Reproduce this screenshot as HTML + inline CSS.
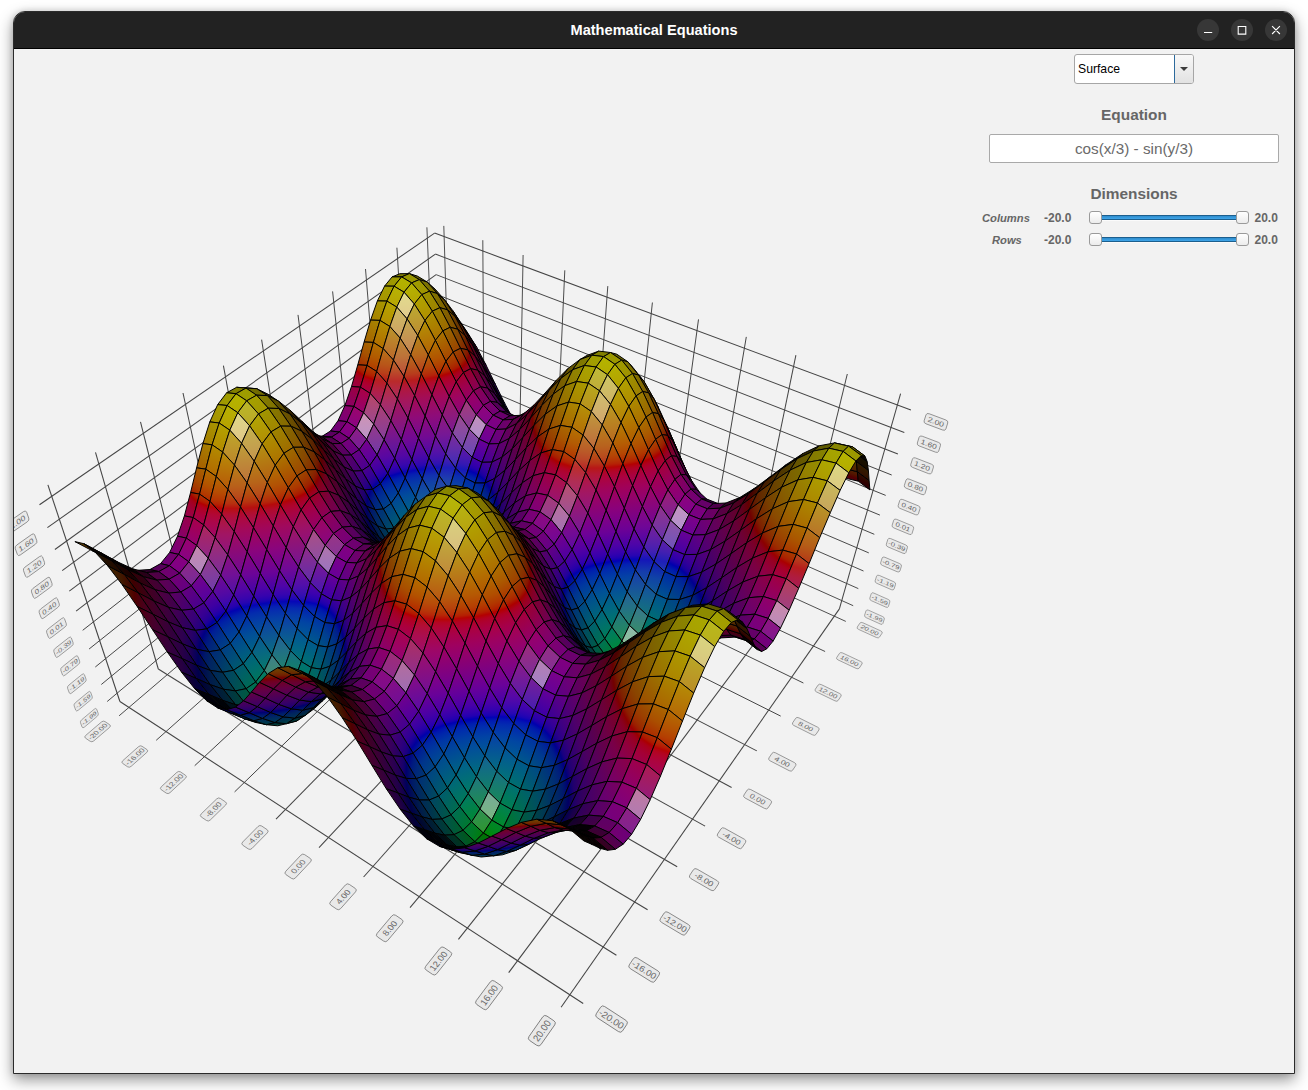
<!DOCTYPE html>
<html><head><meta charset="utf-8"><title>Mathematical Equations</title>
<style>
html,body{margin:0;padding:0;background:#fff;}
body{width:1308px;height:1090px;position:relative;overflow:hidden;font-family:"Liberation Sans","DejaVu Sans",sans-serif;}
#win{position:absolute;left:13px;top:11px;width:1282px;height:1063px;box-sizing:border-box;border:1px solid #2b2b2b;border-radius:12px 12px 0 0;background:#f2f2f2;box-shadow:0 6px 15px rgba(0,0,0,0.42),0 0 6px rgba(0,0,0,0.14);overflow:hidden;}
#tb{position:absolute;left:0;top:0;width:1280px;height:36px;background:#222222;border-bottom:1px solid #000;}
#title{position:absolute;left:0;top:0;width:1280px;height:36px;line-height:36px;text-align:center;color:#fff;font-weight:bold;font-size:14.6px;}
#plot{position:absolute;left:14px;top:49px;width:1280px;height:1024px;}
#plot text{fill:#666;stroke:none;}

.btn{position:absolute;top:7px;width:22px;height:22px;border-radius:11px;background:#373737;}
.hd{position:absolute;left:975px;width:290px;text-align:center;color:#666;font-weight:bold;font-size:15.4px;line-height:18px;}
#combo{position:absolute;left:1060px;top:42px;width:120px;height:30px;box-sizing:border-box;border:1px solid #a6a6a6;border-radius:3px;background:#fff;}
#combo .tx{position:absolute;left:3px;top:0;line-height:29px;font-size:12.2px;color:#000;}
#combo .sep{position:absolute;left:98.5px;top:0;width:1px;height:28px;background:#2d6a9c;}
#combo .ab{position:absolute;left:99.5px;top:0;width:18.5px;height:28px;background:linear-gradient(#f8f8f8,#e2e2e2);border-radius:0 2px 2px 0;}
#combo .ar{position:absolute;left:105px;top:12px;width:0;height:0;border-left:4px solid transparent;border-right:4px solid transparent;border-top:4.5px solid #3c3c3c;}
#eq{position:absolute;left:975px;top:122px;width:290px;height:29px;box-sizing:border-box;border:1px solid #a9a9a9;border-radius:2px;background:#fff;text-align:center;color:#6a6a6a;font-size:15.3px;line-height:27px;}
.lb{position:absolute;color:#666;font-weight:bold;font-size:12px;line-height:14px;white-space:nowrap;}
.it{font-style:italic;font-size:11.2px;}
.trk{position:absolute;left:1082px;width:148px;height:5px;box-sizing:border-box;border-top:1px solid #1c5f8e;border-bottom:1px solid #1c5f8e;background:linear-gradient(#2f8ccc,#3fa6ea);box-shadow:0 1px 0 #fbfbfb;}
.hnd{position:absolute;width:13px;height:13px;box-sizing:border-box;border:1px solid #9a9a9a;border-radius:3px;background:linear-gradient(#ffffff,#ececec);}
</style></head><body>
<div id="win"><div id="tb"></div><div id="title">Mathematical Equations</div>
<div class="btn" style="left:1183px"></div><div class="btn" style="left:1217px"></div><div class="btn" style="left:1251px"></div>
<svg style="position:absolute;left:1179px;top:-1px" width="100" height="37" viewBox="1193 11 100 37" fill="none" stroke="#fff" stroke-width="1.1"><path d="M1204 32.5h8.2M1238.2 26.5h7.6v7.6h-7.6zM1272.1 26.2l7.8 7.8M1279.9 26.2l-7.8 7.8"/></svg>
<div id="combo"><div class="tx">Surface</div><div class="ab"></div><div class="sep"></div><div class="ar"></div></div>
<div class="hd" style="top:94px">Equation</div>
<div id="eq">cos(x/3) - sin(y/3)</div>
<div class="hd" style="top:172.5px">Dimensions</div>
<div class="lb it" style="left:968px;top:199px">Columns</div>
<div class="lb" style="left:1030px;top:199px">-20.0</div>
<div class="trk" style="top:203px"></div><div class="hnd" style="left:1075px;top:199px"></div><div class="hnd" style="left:1222px;top:199px"></div>
<div class="lb" style="left:1240.5px;top:199px">20.0</div>
<div class="lb it" style="left:978px;top:221px">Rows</div>
<div class="lb" style="left:1030px;top:221px">-20.0</div>
<div class="trk" style="top:225px"></div><div class="hnd" style="left:1075px;top:221px"></div><div class="hnd" style="left:1222px;top:221px"></div>
<div class="lb" style="left:1240.5px;top:221px">20.0</div>
</div>
<svg id="plot" width="1280" height="1024" viewBox="14 49 1280 1024">
<g stroke="#444" fill="none" stroke-linecap="butt"><path d="M119.1 715.8L450.3 433.1" stroke-width="0.96"/><path d="M119.9 701.5L583.2 1003.5" stroke-width="1.10"/><path d="M156.2 740.3L484.2 448.4" stroke-width="0.97"/><path d="M158.3 669.0L616.4 955.3" stroke-width="1.09"/><path d="M194.7 765.7L519.2 464.2" stroke-width="0.99"/><path d="M194.9 638.1L647.6 909.8" stroke-width="1.08"/><path d="M234.6 791.9L555.2 480.5" stroke-width="1.00"/><path d="M229.8 608.6L677.2 866.8" stroke-width="1.06"/><path d="M276.0 819.2L592.2 497.2" stroke-width="1.01"/><path d="M263.2 580.4L705.1 826.1" stroke-width="1.04"/><path d="M319.0 847.6L630.3 514.5" stroke-width="1.03"/><path d="M295.0 553.4L731.6 787.5" stroke-width="1.03"/><path d="M363.6 877.0L669.6 532.2" stroke-width="1.04"/><path d="M325.6 527.6L756.8 750.9" stroke-width="1.01"/><path d="M410.0 907.6L710.1 550.5" stroke-width="1.05"/><path d="M354.8 502.9L780.7 716.1" stroke-width="0.99"/><path d="M458.4 939.4L751.9 569.4" stroke-width="1.06"/><path d="M382.8 479.2L803.4 683.0" stroke-width="0.98"/><path d="M508.7 972.6L795.0 588.8" stroke-width="1.07"/><path d="M409.7 456.5L825.1 651.5" stroke-width="0.96"/><path d="M561.1 1007.2L839.4 608.9" stroke-width="1.07"/><path d="M435.6 434.6L845.8 621.4" stroke-width="0.94"/><path d="M107.2 701.5L441.6 421.1" stroke-width="0.96"/><path d="M101.3 684.5L441.0 404.3" stroke-width="0.97"/><path d="M95.3 667.0L440.3 387.1" stroke-width="0.98"/><path d="M89.1 649.0L439.7 369.5" stroke-width="0.99"/><path d="M82.7 630.3L439.0 351.4" stroke-width="1.00"/><path d="M76.1 611.1L438.3 333.0" stroke-width="1.01"/><path d="M69.3 591.2L437.6 314.0" stroke-width="1.02"/><path d="M62.2 570.7L436.9 294.5" stroke-width="1.03"/><path d="M54.9 549.5L436.1 274.6" stroke-width="1.04"/><path d="M47.4 527.6L435.4 254.1" stroke-width="1.05"/><path d="M39.5 504.8L434.6 233.1" stroke-width="1.05"/><path d="M119.9 701.5L47.9 484.8" stroke-width="1.08"/><path d="M158.3 669.0L95.5 452.4" stroke-width="1.07"/><path d="M194.9 638.1L140.5 421.9" stroke-width="1.05"/><path d="M229.8 608.6L183.0 393.0" stroke-width="1.04"/><path d="M263.2 580.4L223.4 365.6" stroke-width="1.02"/><path d="M295.0 553.4L261.6 339.6" stroke-width="1.01"/><path d="M325.6 527.6L298.0 314.9" stroke-width="0.99"/><path d="M354.8 502.9L332.6 291.4" stroke-width="0.98"/><path d="M382.8 479.2L365.5 269.0" stroke-width="0.96"/><path d="M409.7 456.5L396.9 247.7" stroke-width="0.94"/><path d="M435.6 434.6L426.9 227.3" stroke-width="0.93"/><path d="M441.6 421.1L853.2 605.7" stroke-width="0.94"/><path d="M441.0 404.3L858.3 588.6" stroke-width="0.95"/><path d="M440.3 387.1L863.5 571.0" stroke-width="0.96"/><path d="M439.7 369.5L868.8 552.9" stroke-width="0.97"/><path d="M439.0 351.4L874.3 534.3" stroke-width="0.98"/><path d="M438.3 333.0L879.9 515.1" stroke-width="0.98"/><path d="M437.6 314.0L885.7 495.4" stroke-width="0.99"/><path d="M436.9 294.5L891.7 475.0" stroke-width="1.00"/><path d="M436.1 274.6L897.9 454.0" stroke-width="1.01"/><path d="M435.4 254.1L904.3 432.4" stroke-width="1.02"/><path d="M434.6 233.1L910.9 410.0" stroke-width="1.03"/><path d="M450.3 433.1L443.8 225.9" stroke-width="0.93"/><path d="M484.2 448.4L482.8 240.2" stroke-width="0.94"/><path d="M519.2 464.2L523.1 255.0" stroke-width="0.95"/><path d="M555.2 480.5L564.8 270.3" stroke-width="0.96"/><path d="M592.2 497.2L607.8 286.1" stroke-width="0.97"/><path d="M630.3 514.5L652.4 302.5" stroke-width="0.98"/><path d="M669.6 532.2L698.5 319.4" stroke-width="0.99"/><path d="M710.1 550.5L746.3 336.9" stroke-width="1.00"/><path d="M751.9 569.4L795.9 355.1" stroke-width="1.01"/><path d="M795.0 588.8L847.3 374.0" stroke-width="1.02"/><path d="M839.4 608.9L900.6 393.6" stroke-width="1.02"/></g>
<defs><linearGradient id="g1" x1=".54" y1=".47" x2=".47" y2=".53"><stop stop-color="#350027"/><stop offset=".44" stop-color="#3c0019"/><stop offset=".89" stop-color="#420000"/><stop offset="1" stop-color="#420900"/></linearGradient><linearGradient id="g2" x1=".64" y1=".42" x2=".36" y2=".59"><stop stop-color="#33003c"/><stop offset="1" stop-color="#4a0019"/></linearGradient><linearGradient id="g3" x1=".71" y1=".4" x2=".3" y2=".6"><stop stop-color="#22004c"/><stop offset="1" stop-color="#440030"/></linearGradient><linearGradient id="g4" x1=".69" y1=".4" x2=".32" y2=".6"><stop stop-color="#000951"/><stop offset=".11" stop-color="#000053"/><stop offset=".33" stop-color="#18004e"/><stop offset=".55" stop-color="#24004a"/><stop offset="1" stop-color="#35003f"/></linearGradient><linearGradient id="g5" x1=".61" y1=".43" x2=".39" y2=".58"><stop stop-color="#001c41"/><stop offset=".58" stop-color="#00004c"/><stop offset="1" stop-color="#1f0045"/></linearGradient><linearGradient id="g6" x1=".51" y1=".5" x2=".5" y2=".51"><stop stop-color="#1e004d"/><stop offset="1" stop-color="#420033"/></linearGradient><linearGradient id="g7" x1=".37" y1=".86" x2=".63" y2=".14"><stop stop-color="#4f0015"/><stop offset=".32" stop-color="#530000"/><stop offset=".66" stop-color="#531600"/><stop offset="1" stop-color="#532200"/></linearGradient><linearGradient id="g8" x1=".4" y1=".76" x2=".61" y2=".25"><stop stop-color="#2b000a"/><stop offset=".38" stop-color="#2e0000"/><stop offset="1" stop-color="#2e1000"/></linearGradient><linearGradient id="g9" x1=".53" y1=".48" x2=".48" y2=".52"><stop stop-color="#3c0013"/><stop offset=".3" stop-color="#400000"/><stop offset="1" stop-color="#402100"/></linearGradient><linearGradient id="ga" x1=".63" y1=".42" x2=".38" y2=".58"><stop stop-color="#3e002c"/><stop offset=".37" stop-color="#46001e"/><stop offset=".75" stop-color="#4d0000"/><stop offset="1" stop-color="#4d1800"/></linearGradient><linearGradient id="gb" x1=".69" y1=".4" x2=".31" y2=".6"><stop stop-color="#35003e"/><stop offset="1" stop-color="#4e0017"/></linearGradient><linearGradient id="gc" x1=".68" y1=".41" x2=".32" y2=".6"><stop stop-color="#210049"/><stop offset="1" stop-color="#42002f"/></linearGradient><linearGradient id="gd" x1=".61" y1=".43" x2=".4" y2=".57"><stop stop-color="#00034a"/><stop offset=".05" stop-color="#00004a"/><stop offset=".53" stop-color="#200042"/><stop offset="1" stop-color="#300038"/></linearGradient><linearGradient id="ge" x1=".51" y1=".5" x2=".5" y2=".51"><stop stop-color="#000f34"/><stop offset=".45" stop-color="#00003a"/><stop offset="1" stop-color="#180033"/></linearGradient><linearGradient id="gf" x1=".38" y1=".87" x2=".63" y2=".13"><stop stop-color="#542000"/><stop offset="1" stop-color="#543800"/></linearGradient><linearGradient id="gg" x1=".4" y1=".77" x2=".61" y2=".23"><stop stop-color="#320e00"/><stop offset="1" stop-color="#321f00"/></linearGradient><linearGradient id="gh" x1=".59" y1=".44" x2=".42" y2=".57"><stop stop-color="#4d1800"/><stop offset="1" stop-color="#4d3800"/></linearGradient><linearGradient id="gi" x1=".72" y1=".4" x2=".28" y2=".61"><stop stop-color="#530019"/><stop offset=".23" stop-color="#570000"/><stop offset=".43" stop-color="#571700"/><stop offset=".62" stop-color="#572300"/><stop offset="1" stop-color="#573400"/></linearGradient><linearGradient id="gj" x1=".81" y1=".41" x2=".19" y2=".6"><stop stop-color="#4a0035"/><stop offset=".37" stop-color="#530024"/><stop offset=".56" stop-color="#570018"/><stop offset=".75" stop-color="#5b0000"/><stop offset="1" stop-color="#5b1e00"/></linearGradient><linearGradient id="gk" x1=".79" y1=".4" x2=".22" y2=".6"><stop stop-color="#3b0045"/><stop offset="1" stop-color="#55001e"/></linearGradient><linearGradient id="gl" x1=".69" y1=".41" x2=".32" y2=".6"><stop stop-color="#27004c"/><stop offset="1" stop-color="#403"/></linearGradient><linearGradient id="gm" x1=".56" y1=".46" x2=".45" y2=".55"><stop stop-color="#0d0046"/><stop offset="1" stop-color="#2f0036"/></linearGradient><linearGradient id="gn" x1=".54" y1=".47" x2=".47" y2=".54"><stop stop-color="#52001f"/><stop offset=".31" stop-color="#580000"/><stop offset=".66" stop-color="#582200"/><stop offset="1" stop-color="#583200"/></linearGradient><linearGradient id="go" x1=".57" y1=".45" x2=".44" y2=".56"><stop stop-color="#480038"/><stop offset=".41" stop-color="#530027"/><stop offset=".62" stop-color="#570019"/><stop offset=".82" stop-color="#5b0000"/><stop offset="1" stop-color="#5b1800"/></linearGradient><linearGradient id="gp" x1=".55" y1=".46" x2=".45" y2=".55"><stop stop-color="#380047"/><stop offset="1" stop-color="#530023"/></linearGradient><linearGradient id="gq" x1=".51" y1=".5" x2=".49" y2=".51"><stop stop-color="#23004c"/><stop offset="1" stop-color="#420034"/></linearGradient><linearGradient id="gr" x1=".4" y1=".74" x2=".61" y2=".27"><stop stop-color="#180c00"/><stop offset="1" stop-color="#181300"/></linearGradient><linearGradient id="gs" x1=".58" y1=".44" x2=".43" y2=".56"><stop stop-color="#563f00"/><stop offset="1" stop-color="#564e00"/></linearGradient><linearGradient id="gt" x1=".8" y1=".4" x2=".21" y2=".6"><stop stop-color="#643c00"/><stop offset="1" stop-color="#645600"/></linearGradient><linearGradient id="gu" x1=".96" y1=".47" x2=".05" y2=".54"><stop stop-color="#6b2400"/><stop offset="1" stop-color="#6b4f00"/></linearGradient><linearGradient id="gv" x1="1.02" y1=".52" x2="-.01" y2=".49"><stop stop-color="#670026"/><stop offset=".15" stop-color="#6a0019"/><stop offset=".3" stop-color="#6d0000"/><stop offset=".48" stop-color="#6d1c00"/><stop offset=".65" stop-color="#6d2a00"/><stop offset="1" stop-color="#6d3d00"/></linearGradient><linearGradient id="gw" x1="1" y1=".5" x2="0" y2=".5"><stop stop-color="#580042"/><stop offset=".44" stop-color="#63002e"/><stop offset=".66" stop-color="#68001f"/><stop offset=".88" stop-color="#6d0000"/><stop offset="1" stop-color="#6d1500"/></linearGradient><linearGradient id="gx" x1=".91" y1=".44" x2=".09" y2=".57"><stop stop-color="#460050"/><stop offset="1" stop-color="#60002e"/></linearGradient><linearGradient id="gy" x1=".74" y1=".4" x2=".27" y2=".61"><stop stop-color="#340053"/><stop offset="1" stop-color="#4c003e"/></linearGradient><linearGradient id="gz" x1=".56" y1=".45" x2=".44" y2=".55"><stop stop-color="#210047"/><stop offset="1" stop-color="#35003b"/></linearGradient><linearGradient id="g10" x1=".52" y1=".48" x2=".48" y2=".52"><stop stop-color="#594000"/><stop offset="1" stop-color="#595000"/></linearGradient><linearGradient id="g11" x1=".64" y1=".42" x2=".36" y2=".59"><stop stop-color="#663a00"/><stop offset="1" stop-color="#650"/></linearGradient><linearGradient id="g12" x1=".77" y1=".4" x2=".24" y2=".61"><stop stop-color="#6b1e00"/><stop offset=".5" stop-color="#6b3b00"/><stop offset="1" stop-color="#6b4d00"/></linearGradient><linearGradient id="g13" x1=".82" y1=".4" x2=".19" y2=".6"><stop stop-color="#65002b"/><stop offset=".19" stop-color="#69001d"/><stop offset=".39" stop-color="#6d0000"/><stop offset=".54" stop-color="#6d1a00"/><stop offset=".69" stop-color="#6d2700"/><stop offset="1" stop-color="#6d3900"/></linearGradient><linearGradient id="g14" x1=".8" y1=".4" x2=".21" y2=".6"><stop stop-color="#560045"/><stop offset=".49" stop-color="#620030"/><stop offset=".73" stop-color="#670021"/><stop offset=".97" stop-color="#6d0000"/><stop offset="1" stop-color="#6d0600"/></linearGradient><linearGradient id="g15" x1=".7" y1=".4" x2=".31" y2=".6"><stop stop-color="#440052"/><stop offset="1" stop-color="#5d0031"/></linearGradient><linearGradient id="g16" x1=".58" y1=".44" x2=".43" y2=".56"><stop stop-color="#310053"/><stop offset="1" stop-color="#49003f"/></linearGradient><linearGradient id="g17" x1=".61" y1=".43" x2=".4" y2=".58"><stop stop-color="#696000"/><stop offset="1" stop-color="#696800"/></linearGradient><linearGradient id="g18" x1=".89" y1=".43" x2=".12" y2=".58"><stop stop-color="#7b6900"/><stop offset="1" stop-color="#7b7800"/></linearGradient><linearGradient id="g19" x1="1.07" y1=".6" x2="-.06" y2=".41"><stop stop-color="#816000"/><stop offset="1" stop-color="#817700"/></linearGradient><linearGradient id="g1a" x1="1.1" y1=".75" x2="-.1" y2=".26"><stop stop-color="#834a00"/><stop offset="1" stop-color="#836b00"/></linearGradient><linearGradient id="g1b" x1="1.1" y1=".8" x2="-.1" y2=".2"><stop stop-color="#841c00"/><stop offset=".5" stop-color="#844100"/><stop offset="1" stop-color="#845700"/></linearGradient><linearGradient id="g1c" x1="1.11" y1=".77" x2="-.1" y2=".23"><stop stop-color="#78003b"/><stop offset=".28" stop-color="#7e0028"/><stop offset=".41" stop-color="#81001b"/><stop offset=".55" stop-color="#840000"/><stop offset=".66" stop-color="#841800"/><stop offset=".78" stop-color="#842500"/><stop offset="1" stop-color="#843600"/></linearGradient><linearGradient id="g1d" x1="1.1" y1=".67" x2="-.09" y2=".33"><stop stop-color="#680054"/><stop offset="1" stop-color="#7e0025"/></linearGradient><linearGradient id="g1e" x1="1.01" y1=".51" x2="-.01" y2=".49"><stop stop-color="#580061"/><stop offset="1" stop-color="#6e0047"/></linearGradient><linearGradient id="g1f" x1=".81" y1=".4" x2=".19" y2=".6"><stop stop-color="#4a0061"/><stop offset="1" stop-color="#5b0051"/></linearGradient><linearGradient id="g1g" x1=".6" y1=".43" x2=".4" y2=".58"><stop stop-color="#3a004e"/><stop offset="1" stop-color="#430047"/></linearGradient><linearGradient id="g1h" x1=".61" y1=".42" x2=".39" y2=".58"><stop stop-color="#6d6300"/><stop offset="1" stop-color="#6d6c00"/></linearGradient><linearGradient id="g1i" x1=".82" y1=".41" x2=".19" y2=".6"><stop stop-color="#7d6900"/><stop offset="1" stop-color="#7d7800"/></linearGradient><linearGradient id="g1j" x1="1" y1=".5" x2=".01" y2=".51"><stop stop-color="#825e00"/><stop offset="1" stop-color="#827500"/></linearGradient><linearGradient id="g1k" x1="1.08" y1=".61" x2="-.07" y2=".39"><stop stop-color="#834600"/><stop offset="1" stop-color="#836900"/></linearGradient><linearGradient id="g1l" x1="1.1" y1=".66" x2="-.09" y2=".34"><stop stop-color="#840900"/><stop offset=".25" stop-color="#842b00"/><stop offset=".5" stop-color="#843c00"/><stop offset="1" stop-color="#845300"/></linearGradient><linearGradient id="g1m" x1="1.08" y1=".62" x2="-.08" y2=".38"><stop stop-color="#750040"/><stop offset=".33" stop-color="#7d002c"/><stop offset=".49" stop-color="#80001e"/><stop offset=".66" stop-color="#840000"/><stop offset=".83" stop-color="#842000"/><stop offset="1" stop-color="#842f00"/></linearGradient><linearGradient id="g1n" x1="1.02" y1=".52" x2="-.02" y2=".48"><stop stop-color="#650057"/><stop offset="1" stop-color="#7b002d"/></linearGradient><linearGradient id="g1o" x1=".89" y1=".43" x2=".11" y2=".58"><stop stop-color="#560062"/><stop offset="1" stop-color="#6b004a"/></linearGradient><linearGradient id="g1p" x1=".72" y1=".4" x2=".28" y2=".6"><stop stop-color="#48005f"/><stop offset="1" stop-color="#580051"/></linearGradient><linearGradient id="g1q" x1=".61" y1=".43" x2=".4" y2=".58"><stop stop-color="#370049"/><stop offset="1" stop-color="#3f0043"/></linearGradient><linearGradient id="g1r" x1=".51" y1=".5" x2=".49" y2=".52"><stop stop-color="#504900"/><stop offset="1" stop-color="#504e00"/></linearGradient><linearGradient id="g1s" x1=".59" y1=".44" x2=".41" y2=".57"><stop stop-color="#716500"/><stop offset="1" stop-color="#716f00"/></linearGradient><linearGradient id="g1t" x1=".23" y1=".31" x2=".77" y2=".71"><stop stop-color="#7c7700"/><stop offset="1" stop-color="#7c7c00"/></linearGradient><linearGradient id="g1u" x1=".99" y1=".8" x2=".01" y2=".2"><stop stop-color="#9f9200"/><stop offset="1" stop-color="#9f9d00"/></linearGradient><linearGradient id="g1v" x1=".91" y1=".92" x2=".1" y2=".08"><stop stop-color="#9d8100"/><stop offset="1" stop-color="#9d9300"/></linearGradient><linearGradient id="g1w" x1=".86" y1=".96" x2=".14" y2=".04"><stop stop-color="#9b6700"/><stop offset="1" stop-color="#9b8200"/></linearGradient><linearGradient id="g1x" x1=".84" y1=".97" x2=".16" y2=".03"><stop stop-color="#9a4100"/><stop offset="1" stop-color="#9a6a00"/></linearGradient><linearGradient id="g1y" x1=".85" y1=".96" x2=".16" y2=".04"><stop stop-color="#94002d"/><stop offset=".16" stop-color="#97001f"/><stop offset=".31" stop-color="#9a0000"/><stop offset=".48" stop-color="#9a2200"/><stop offset=".66" stop-color="#9a3100"/><stop offset="1" stop-color="#9a4700"/></linearGradient><linearGradient id="g1z" x1=".88" y1=".93" x2=".13" y2=".07"><stop stop-color="#850057"/><stop offset=".5" stop-color="#8f0043"/><stop offset="1" stop-color="#980024"/></linearGradient><linearGradient id="g20" x1=".94" y1=".86" x2=".07" y2=".14"><stop stop-color="#79006d"/><stop offset="1" stop-color="#8a0054"/></linearGradient><linearGradient id="g21" x1="1" y1=".7" x2="0" y2=".3"><stop stop-color="#710077"/><stop offset="1" stop-color="#7c006a"/></linearGradient><linearGradient id="g22" x1=".25" y1=".33" x2=".75" y2=".67"><stop stop-color="#4e0054"/><stop offset="1" stop-color="#56004b"/></linearGradient><linearGradient id="g23" x1=".48" y1=".48" x2=".52" y2=".52"><stop stop-color="#34002f"/><stop offset="1" stop-color="#3c0024"/></linearGradient><linearGradient id="g24" x1=".43" y1=".44" x2=".57" y2=".56"><stop stop-color="#595000"/><stop offset="1" stop-color="#595700"/></linearGradient><linearGradient id="g25" x1=".98" y1=".45" x2=".02" y2=".54"><stop stop-color="#9b9500"/><stop offset="1" stop-color="#9b9b00"/></linearGradient><linearGradient id="g26" x1="1" y1=".76" x2="0" y2=".23"><stop stop-color="#9f9000"/><stop offset="1" stop-color="#9f9c00"/></linearGradient><linearGradient id="g27" x1=".93" y1=".89" x2=".07" y2=".11"><stop stop-color="#9d7e00"/><stop offset="1" stop-color="#9d9100"/></linearGradient><linearGradient id="g28" x1=".88" y1=".93" x2=".12" y2=".07"><stop stop-color="#9b6300"/><stop offset="1" stop-color="#9b7f00"/></linearGradient><linearGradient id="g29" x1=".86" y1=".94" x2=".14" y2=".06"><stop stop-color="#9a3800"/><stop offset="1" stop-color="#9a6600"/></linearGradient><linearGradient id="g2a" x1=".88" y1=".92" x2=".13" y2=".07"><stop stop-color="#920037"/><stop offset=".22" stop-color="#960025"/><stop offset=".33" stop-color="#980018"/><stop offset=".44" stop-color="#9a0000"/><stop offset=".58" stop-color="#9a1d00"/><stop offset=".72" stop-color="#9a2c00"/><stop offset="1" stop-color="#9a3f00"/></linearGradient><linearGradient id="g2b" x1=".92" y1=".88" x2=".09" y2=".12"><stop stop-color="#83005b"/><stop offset="1" stop-color="#960030"/></linearGradient><linearGradient id="g2c" x1=".97" y1=".79" x2=".03" y2=".21"><stop stop-color="#77006f"/><stop offset="1" stop-color="#880059"/></linearGradient><linearGradient id="g2d" x1="1.01" y1=".59" x2="-.01" y2=".41"><stop stop-color="#700077"/><stop offset="1" stop-color="#7a006b"/></linearGradient><linearGradient id="g2e" x1=".19" y1=".32" x2=".81" y2=".68"><stop stop-color="#4a004e"/><stop offset="1" stop-color="#530046"/></linearGradient><linearGradient id="g2f" x1=".37" y1=".41" x2=".63" y2=".59"><stop stop-color="#2f002a"/><stop offset="1" stop-color="#37001f"/></linearGradient><linearGradient id="g2g" x1=".4" y1=".42" x2=".6" y2=".58"><stop stop-color="#342900"/><stop offset="1" stop-color="#343000"/></linearGradient><linearGradient id="g2h" x1=".27" y1=".36" x2=".73" y2=".65"><stop stop-color="#5f5700"/><stop offset="1" stop-color="#5f5e00"/></linearGradient><linearGradient id="g2i" x1=".98" y1=".44" x2=".03" y2=".56"><stop stop-color="#9c9600"/><stop offset="1" stop-color="#9c9c00"/></linearGradient><linearGradient id="g2j" x1="-.05" y1=".56" x2="1.05" y2=".44"><stop stop-color="#9d9400"/><stop offset="1" stop-color="#9d9c00"/></linearGradient><linearGradient id="g2k" x1=".46" y1=".99" x2=".53" y2=".01"><stop stop-color="#b3ac00"/><stop offset="1" stop-color="#b3b300"/></linearGradient><linearGradient id="g2l" x1=".62" y1=".99" x2=".38" y2=".01"><stop stop-color="#b5a402"/><stop offset="1" stop-color="#b5b302"/></linearGradient><linearGradient id="g2m" x1=".64" y1=".99" x2=".36" y2=".02"><stop stop-color="#b08e00"/><stop offset="1" stop-color="#b0a400"/></linearGradient><linearGradient id="g2n" x1=".64" y1=".98" x2=".36" y2=".02"><stop stop-color="#ab7000"/><stop offset="1" stop-color="#ab9000"/></linearGradient><linearGradient id="g2o" x1=".65" y1=".98" x2=".36" y2=".02"><stop stop-color="#a94300"/><stop offset="1" stop-color="#a97500"/></linearGradient><linearGradient id="g2p" x1=".65" y1=".98" x2=".35" y2=".02"><stop stop-color="#a1003a"/><stop offset=".18" stop-color="#a60028"/><stop offset=".27" stop-color="#a8001a"/><stop offset=".37" stop-color="#a00"/><stop offset=".44" stop-color="#aa1900"/><stop offset=".52" stop-color="#aa2600"/><stop offset=".68" stop-color="#aa3700"/><stop offset="1" stop-color="#aa4f00"/></linearGradient><linearGradient id="g2q" x1=".65" y1=".98" x2=".35" y2=".02"><stop stop-color="#920065"/><stop offset=".5" stop-color="#9d004e"/><stop offset="1" stop-color="#a80029"/></linearGradient><linearGradient id="g2r" x1=".65" y1=".98" x2=".35" y2=".02"><stop stop-color="#85007d"/><stop offset="1" stop-color="#9b005f"/></linearGradient><linearGradient id="g2s" x1=".62" y1=".99" x2=".38" y2=".01"><stop stop-color="#7f048b"/><stop offset="1" stop-color="#8f047a"/></linearGradient><linearGradient id="g2t" x1=".34" y1=".9" x2=".66" y2=".1"><stop stop-color="#790086"/><stop offset="1" stop-color="#80007f"/></linearGradient><linearGradient id="g2u" x1="0" y1=".5" x2="1" y2=".5"><stop stop-color="#650070"/><stop offset="1" stop-color="#720064"/></linearGradient><linearGradient id="g2v" x1=".22" y1=".4" x2=".78" y2=".6"><stop stop-color="#540051"/><stop offset="1" stop-color="#62003e"/></linearGradient><linearGradient id="g2w" x1=".37" y1=".42" x2=".63" y2=".58"><stop stop-color="#480033"/><stop offset="1" stop-color="#550017"/></linearGradient><linearGradient id="g2x" x1=".43" y1=".45" x2=".57" y2=".56"><stop stop-color="#430018"/><stop offset=".49" stop-color="#480000"/><stop offset="1" stop-color="#481a00"/></linearGradient><linearGradient id="g2y" x1=".44" y1=".46" x2=".56" y2=".55"><stop stop-color="#441200"/><stop offset="1" stop-color="#442b00"/></linearGradient><linearGradient id="g2z" x1=".41" y1=".43" x2=".59" y2=".57"><stop stop-color="#4e2e00"/><stop offset="1" stop-color="#4e3e00"/></linearGradient><linearGradient id="g30" x1=".31" y1=".4" x2=".69" y2=".6"><stop stop-color="#624c00"/><stop offset="1" stop-color="#625a00"/></linearGradient><linearGradient id="g31" x1=".11" y1=".42" x2=".88" y2=".58"><stop stop-color="#807200"/><stop offset="1" stop-color="#807e00"/></linearGradient><linearGradient id="g32" x1="-.06" y1=".71" x2="1.06" y2=".29"><stop stop-color="#a19a00"/><stop offset="1" stop-color="#a1a100"/></linearGradient><linearGradient id="g33" x1=".52" y1="1" x2=".49" y2="0"><stop stop-color="#b4ac00"/><stop offset="1" stop-color="#b4b400"/></linearGradient><linearGradient id="g34" x1=".64" y1=".99" x2=".36" y2=".01"><stop stop-color="#b4a100"/><stop offset="1" stop-color="#b4b100"/></linearGradient><linearGradient id="g35" x1=".65" y1=".98" x2=".35" y2=".02"><stop stop-color="#af8a00"/><stop offset="1" stop-color="#afa100"/></linearGradient><linearGradient id="g36" x1=".65" y1=".98" x2=".35" y2=".02"><stop stop-color="#ab6a00"/><stop offset="1" stop-color="#ab8c00"/></linearGradient><linearGradient id="g37" x1=".66" y1=".97" x2=".35" y2=".03"><stop stop-color="#a93800"/><stop offset=".5" stop-color="#a95a00"/><stop offset="1" stop-color="#a97000"/></linearGradient><linearGradient id="g38" x1=".66" y1=".97" x2=".34" y2=".03"><stop stop-color="#9f0043"/><stop offset=".24" stop-color="#a5002e"/><stop offset=".37" stop-color="#a7001f"/><stop offset=".49" stop-color="#a00"/><stop offset=".62" stop-color="#aa2100"/><stop offset=".74" stop-color="#aa3100"/><stop offset="1" stop-color="#aa4600"/></linearGradient><linearGradient id="g39" x1=".66" y1=".97" x2=".34" y2=".03"><stop stop-color="#900069"/><stop offset="1" stop-color="#a60036"/></linearGradient><linearGradient id="g3a" x1=".66" y1=".98" x2=".34" y2=".02"><stop stop-color="#840080"/><stop offset="1" stop-color="#990064"/></linearGradient><linearGradient id="g3b" x1=".61" y1="1" x2=".39" y2="0"><stop stop-color="#7e028c"/><stop offset="1" stop-color="#8d027c"/></linearGradient><linearGradient id="g3c" x1=".26" y1=".86" x2=".74" y2=".14"><stop stop-color="#770084"/><stop offset="1" stop-color="#7e007d"/></linearGradient><linearGradient id="g3d" x1="-.02" y1=".52" x2="1.02" y2=".48"><stop stop-color="#62006c"/><stop offset="1" stop-color="#6f005e"/></linearGradient><linearGradient id="g3e" x1=".12" y1=".42" x2=".88" y2=".58"><stop stop-color="#52004c"/><stop offset="1" stop-color="#5f0039"/></linearGradient><linearGradient id="g3f" x1=".21" y1=".4" x2=".79" y2=".6"><stop stop-color="#47002f"/><stop offset="1" stop-color="#53000f"/></linearGradient><linearGradient id="g3g" x1=".25" y1=".4" x2=".75" y2=".6"><stop stop-color="#430013"/><stop offset=".37" stop-color="#470000"/><stop offset="1" stop-color="#471d00"/></linearGradient><linearGradient id="g3h" x1=".25" y1=".4" x2=".75" y2=".61"><stop stop-color="#451600"/><stop offset="1" stop-color="#452d00"/></linearGradient><linearGradient id="g3i" x1=".21" y1=".4" x2=".79" y2=".6"><stop stop-color="#503200"/><stop offset="1" stop-color="#504200"/></linearGradient><linearGradient id="g3j" x1=".12" y1=".42" x2=".88" y2=".58"><stop stop-color="#665100"/><stop offset="1" stop-color="#665f00"/></linearGradient><linearGradient id="g3k" x1="-.01" y1=".51" x2="1.01" y2=".49"><stop stop-color="#857800"/><stop offset="1" stop-color="#858300"/></linearGradient><linearGradient id="g3l" x1=".04" y1=".84" x2=".96" y2=".16"><stop stop-color="#a59f00"/><stop offset="1" stop-color="#a5a500"/></linearGradient><linearGradient id="g3m" x1=".56" y1="1.01" x2=".44" y2="-.01"><stop stop-color="#b5ac00"/><stop offset="1" stop-color="#b5b500"/></linearGradient><linearGradient id="g3n" x1="-.01" y1=".97" x2="1.01" y2=".02"><stop stop-color="#a69200"/><stop offset="1" stop-color="#a6a200"/></linearGradient><linearGradient id="g3o" x1=".41" y1=".97" x2=".59" y2=".03"><stop stop-color="#b7a404"/><stop offset="1" stop-color="#b7b304"/></linearGradient><linearGradient id="g3p" x1=".51" y1="1" x2=".49" y2="0"><stop stop-color="#e1ca8c"/><stop offset="1" stop-color="#e1db8c"/></linearGradient><linearGradient id="g3q" x1=".55" y1="1" x2=".45" y2="0"><stop stop-color="#bc8c31"/><stop offset="1" stop-color="#bcab31"/></linearGradient><linearGradient id="g3r" x1=".57" y1="1.01" x2=".43" y2="0"><stop stop-color="#b36105"/><stop offset="1" stop-color="#b39105"/></linearGradient><linearGradient id="g3s" x1=".57" y1="1" x2=".43" y2="0"><stop stop-color="#b10a01"/><stop offset=".12" stop-color="#b12b01"/><stop offset=".25" stop-color="#b13c01"/><stop offset=".5" stop-color="#b15401"/><stop offset="1" stop-color="#b17401"/></linearGradient><linearGradient id="g3t" x1=".58" y1="1" x2=".43" y2="0"><stop stop-color="#9e015a"/><stop offset=".32" stop-color="#a80140"/><stop offset=".48" stop-color="#ad012c"/><stop offset=".56" stop-color="#af011e"/><stop offset=".64" stop-color="#b10101"/><stop offset=".73" stop-color="#b12101"/><stop offset=".82" stop-color="#b13101"/><stop offset="1" stop-color="#b14601"/></linearGradient><linearGradient id="g3u" x1=".57" y1="1" x2=".43" y2="0"><stop stop-color="#8b057c"/><stop offset=".5" stop-color="#9c0563"/><stop offset="1" stop-color="#ab053f"/></linearGradient><linearGradient id="g3v" x1=".55" y1="1" x2=".45" y2="0"><stop stop-color="#863b9a"/><stop offset="1" stop-color="#a43b79"/></linearGradient><linearGradient id="g3w" x1=".5" y1="1" x2=".5" y2="0"><stop stop-color="#b08fcc"/><stop offset="1" stop-color="#c28fbc"/></linearGradient><linearGradient id="g3x" x1=".35" y1=".92" x2=".65" y2=".08"><stop stop-color="#6b0197"/><stop offset="1" stop-color="#7d0189"/></linearGradient><linearGradient id="g3y" x1="-.08" y1=".87" x2="1.08" y2=".13"><stop stop-color="#5e0086"/><stop offset="1" stop-color="#760072"/></linearGradient><linearGradient id="g3z" x1="-.08" y1=".61" x2="1.07" y2=".39"><stop stop-color="#56006a"/><stop offset="1" stop-color="#6f0050"/></linearGradient><linearGradient id="g40" x1=".05" y1=".46" x2=".95" y2=".54"><stop stop-color="#54004e"/><stop offset="1" stop-color="#6a002a"/></linearGradient><linearGradient id="g41" x1=".14" y1=".42" x2=".86" y2=".59"><stop stop-color="#570034"/><stop offset=".37" stop-color="#5f0023"/><stop offset=".55" stop-color="#620017"/><stop offset=".74" stop-color="#650000"/><stop offset="1" stop-color="#651e00"/></linearGradient><linearGradient id="g42" x1=".16" y1=".41" x2=".84" y2=".59"><stop stop-color="#61000c"/><stop offset=".08" stop-color="#620000"/><stop offset=".31" stop-color="#621b00"/><stop offset=".54" stop-color="#622900"/><stop offset="1" stop-color="#623b00"/></linearGradient><linearGradient id="g43" x1=".09" y1=".44" x2=".91" y2=".57"><stop stop-color="#693200"/><stop offset="1" stop-color="#695200"/></linearGradient><linearGradient id="g44" x1="-.04" y1=".54" x2="1.03" y2=".46"><stop stop-color="#795400"/><stop offset="1" stop-color="#796c00"/></linearGradient><linearGradient id="g45" x1="-.1" y1=".77" x2="1.1" y2=".23"><stop stop-color="#907600"/><stop offset="1" stop-color="#908a00"/></linearGradient><linearGradient id="g46" x1=".1" y1=".99" x2=".9" y2="0"><stop stop-color="#a99700"/><stop offset="1" stop-color="#a9a500"/></linearGradient><linearGradient id="g47" x1=".43" y1=".98" x2=".57" y2=".02"><stop stop-color="#bfac39"/><stop offset="1" stop-color="#bfbb39"/></linearGradient><linearGradient id="g48" x1=".52" y1="1" x2=".48" y2="0"><stop stop-color="#ceb265"/><stop offset="1" stop-color="#cec765"/></linearGradient><linearGradient id="g49" x1=".56" y1="1" x2=".44" y2="0"><stop stop-color="#b68007"/><stop offset="1" stop-color="#b6a307"/></linearGradient><linearGradient id="g4a" x1=".57" y1="1" x2=".43" y2="0"><stop stop-color="#b25900"/><stop offset="1" stop-color="#b28d00"/></linearGradient><linearGradient id="g4b" x1=".58" y1="1" x2=".42" y2="0"><stop stop-color="#ae001f"/><stop offset=".08" stop-color="#b10000"/><stop offset=".14" stop-color="#b11900"/><stop offset=".2" stop-color="#b12600"/><stop offset=".31" stop-color="#b13800"/><stop offset=".54" stop-color="#b14f00"/><stop offset="1" stop-color="#b16e00"/></linearGradient><linearGradient id="g4c" x1=".58" y1="1" x2=".42" y2="0"><stop stop-color="#9b0060"/><stop offset=".37" stop-color="#a70044"/><stop offset=".55" stop-color="#ac0030"/><stop offset=".64" stop-color="#af0020"/><stop offset=".74" stop-color="#b10000"/><stop offset=".8" stop-color="#b11b00"/><stop offset=".87" stop-color="#b12900"/><stop offset="1" stop-color="#b13c00"/></linearGradient><linearGradient id="g4d" x1=".57" y1="1" x2=".43" y2="0"><stop stop-color="#88007f"/><stop offset="1" stop-color="#a90047"/></linearGradient><linearGradient id="g4e" x1=".55" y1="1" x2=".45" y2="0"><stop stop-color="#7c1f96"/><stop offset="1" stop-color="#9c1f74"/></linearGradient><linearGradient id="g4f" x1=".48" y1="1" x2=".52" y2="0"><stop stop-color="#b292cf"/><stop offset="1" stop-color="#c392c0"/></linearGradient><linearGradient id="g4g" x1=".31" y1=".91" x2=".69" y2=".09"><stop stop-color="#690295"/><stop offset="1" stop-color="#7c0287"/></linearGradient><linearGradient id="g4h" x1="-.09" y1=".84" x2="1.09" y2=".16"><stop stop-color="#5c0082"/><stop offset="1" stop-color="#75006d"/></linearGradient><linearGradient id="g4i" x1="-.1" y1=".67" x2="1.09" y2=".33"><stop stop-color="#560066"/><stop offset="1" stop-color="#6e004b"/></linearGradient><linearGradient id="g4j" x1="-.05" y1=".56" x2="1.05" y2=".44"><stop stop-color="#54004a"/><stop offset="1" stop-color="#690023"/></linearGradient><linearGradient id="g4k" x1="-.02" y1=".52" x2="1.02" y2=".48"><stop stop-color="#580030"/><stop offset=".32" stop-color="#5e0020"/><stop offset=".64" stop-color="#640000"/><stop offset=".82" stop-color="#641800"/><stop offset="1" stop-color="#642400"/></linearGradient><linearGradient id="g4l" x1="-.02" y1=".52" x2="1.02" y2=".48"><stop stop-color="#630300"/><stop offset=".25" stop-color="#631e00"/><stop offset=".5" stop-color="#632c00"/><stop offset="1" stop-color="#633e00"/></linearGradient><linearGradient id="g4m" x1="-.05" y1=".57" x2="1.05" y2=".43"><stop stop-color="#6b3700"/><stop offset="1" stop-color="#6b5500"/></linearGradient><linearGradient id="g4n" x1="-.1" y1=".68" x2="1.09" y2=".33"><stop stop-color="#7c5900"/><stop offset="1" stop-color="#7c7000"/></linearGradient><linearGradient id="g4o" x1="-.09" y1=".84" x2="1.09" y2=".16"><stop stop-color="#947b00"/><stop offset="1" stop-color="#948e00"/></linearGradient><linearGradient id="g4p" x1=".2" y1=".97" x2=".8" y2=".03"><stop stop-color="#ad9a00"/><stop offset="1" stop-color="#ada800"/></linearGradient><linearGradient id="g4q" x1=".45" y1=".98" x2=".55" y2=".02"><stop stop-color="#dbc981"/><stop offset="1" stop-color="#dbd781"/></linearGradient><linearGradient id="g4r" x1=".14" y1="1.07" x2=".86" y2="-.08"><stop stop-color="#a78000"/><stop offset="1" stop-color="#a79800"/></linearGradient><linearGradient id="g4s" x1=".41" y1=".97" x2=".59" y2=".03"><stop stop-color="#b58e01"/><stop offset="1" stop-color="#b5a501"/></linearGradient><linearGradient id="g4t" x1=".48" y1="1" x2=".52" y2="0"><stop stop-color="#cda163"/><stop offset="1" stop-color="#cdbc63"/></linearGradient><linearGradient id="g4u" x1=".52" y1="1" x2=".48" y2="0"><stop stop-color="#c58252"/><stop offset="1" stop-color="#c5aa52"/></linearGradient><linearGradient id="g4v" x1=".53" y1="1.01" x2=".47" y2="0"><stop stop-color="#b7391c"/><stop offset=".5" stop-color="#b7681c"/><stop offset="1" stop-color="#b7861c"/></linearGradient><linearGradient id="g4w" x1=".54" y1="1.01" x2=".46" y2="0"><stop stop-color="#a50a52"/><stop offset=".21" stop-color="#ac0a3b"/><stop offset=".32" stop-color="#b00a2a"/><stop offset=".42" stop-color="#b40a0a"/><stop offset=".49" stop-color="#b4240a"/><stop offset=".57" stop-color="#b4320a"/><stop offset=".71" stop-color="#b4460a"/><stop offset="1" stop-color="#b4620a"/></linearGradient><linearGradient id="g4x" x1=".54" y1="1.01" x2=".46" y2="0"><stop stop-color="#8d0979"/><stop offset=".49" stop-color="#a20958"/><stop offset=".74" stop-color="#ab093f"/><stop offset=".86" stop-color="#b0092d"/><stop offset=".99" stop-color="#b40909"/><stop offset="1" stop-color="#b41109"/></linearGradient><linearGradient id="g4y" x1=".53" y1="1" x2=".47" y2="0"><stop stop-color="#781a95"/><stop offset="1" stop-color="#a31a60"/></linearGradient><linearGradient id="g4z" x1=".51" y1="1" x2=".49" y2="0"><stop stop-color="#754bb1"/><stop offset="1" stop-color="#9e4b90"/></linearGradient><linearGradient id="g50" x1=".46" y1=".99" x2=".54" y2=".01"><stop stop-color="#674ab8"/><stop offset="1" stop-color="#8d4aa0"/></linearGradient><linearGradient id="g51" x1=".37" y1=".93" x2=".63" y2=".07"><stop stop-color="#4500a7"/><stop offset="1" stop-color="#6a0095"/></linearGradient><linearGradient id="g52" x1=".03" y1="1.03" x2=".97" y2="-.03"><stop stop-color="#3e0097"/><stop offset="1" stop-color="#690081"/></linearGradient><linearGradient id="g53" x1="-.08" y1=".89" x2="1.07" y2=".12"><stop stop-color="#43007f"/><stop offset="1" stop-color="#6a0063"/></linearGradient><linearGradient id="g54" x1="-.1" y1=".72" x2="1.1" y2=".29"><stop stop-color="#4c0066"/><stop offset="1" stop-color="#6c0042"/></linearGradient><linearGradient id="g55" x1="-.08" y1=".61" x2="1.07" y2=".39"><stop stop-color="#57004e"/><stop offset=".5" stop-color="#650039"/><stop offset=".75" stop-color="#6b002a"/><stop offset="1" stop-color="#710010"/></linearGradient><linearGradient id="g56" x1="-.07" y1=".61" x2="1.07" y2=".4"><stop stop-color="#640035"/><stop offset=".25" stop-color="#6b0024"/><stop offset=".38" stop-color="#6e0018"/><stop offset=".51" stop-color="#710000"/><stop offset=".63" stop-color="#711800"/><stop offset=".75" stop-color="#712500"/><stop offset="1" stop-color="#713600"/></linearGradient><linearGradient id="g57" x1="-.1" y1=".67" x2="1.09" y2=".33"><stop stop-color="#760f00"/><stop offset=".25" stop-color="#762b00"/><stop offset=".5" stop-color="#763b00"/><stop offset="1" stop-color="#765200"/></linearGradient><linearGradient id="g58" x1="-.1" y1=".83" x2="1.09" y2=".17"><stop stop-color="#834500"/><stop offset="1" stop-color="#836b00"/></linearGradient><linearGradient id="g59" x1="-.01" y1=".99" x2="1.01" y2=".02"><stop stop-color="#966800"/><stop offset="1" stop-color="#968500"/></linearGradient><linearGradient id="g5a" x1=".2" y1="1.04" x2=".79" y2="-.04"><stop stop-color="#a98400"/><stop offset="1" stop-color="#a99a00"/></linearGradient><linearGradient id="g5b" x1=".42" y1=".97" x2=".58" y2=".03"><stop stop-color="#b8901d"/><stop offset="1" stop-color="#b8a81d"/></linearGradient><linearGradient id="g5c" x1=".49" y1="1" x2=".51" y2="0"><stop stop-color="#d1a46d"/><stop offset="1" stop-color="#d1c06d"/></linearGradient><linearGradient id="g5d" x1=".52" y1="1" x2=".48" y2="0"><stop stop-color="#ba6821"/><stop offset="1" stop-color="#ba9a21"/></linearGradient><linearGradient id="g5e" x1=".54" y1="1" x2=".46" y2="0"><stop stop-color="#b51e03"/><stop offset=".25" stop-color="#b54703"/><stop offset=".5" stop-color="#b55e03"/><stop offset="1" stop-color="#b57f03"/></linearGradient><linearGradient id="g5f" x1=".54" y1="1" x2=".46" y2="0"><stop stop-color="#a10158"/><stop offset=".25" stop-color="#aa013f"/><stop offset=".38" stop-color="#af012b"/><stop offset=".44" stop-color="#b1011d"/><stop offset=".51" stop-color="#b30101"/><stop offset=".57" stop-color="#b31e01"/><stop offset=".63" stop-color="#b32c01"/><stop offset=".75" stop-color="#b34001"/><stop offset="1" stop-color="#b35a01"/></linearGradient><linearGradient id="g5g" x1=".54" y1="1" x2=".46" y2="0"><stop stop-color="#89017d"/><stop offset=".5" stop-color="#9f015d"/><stop offset=".75" stop-color="#a80146"/><stop offset="1" stop-color="#b10120"/></linearGradient><linearGradient id="g5h" x1=".53" y1="1" x2=".47" y2="0"><stop stop-color="#710696"/><stop offset="1" stop-color="#9f0663"/></linearGradient><linearGradient id="g5i" x1=".51" y1="1" x2=".49" y2="0"><stop stop-color="#6633ac"/><stop offset="1" stop-color="#93338a"/></linearGradient><linearGradient id="g5j" x1=".45" y1=".99" x2=".55" y2=".01"><stop stop-color="#6d54bc"/><stop offset="1" stop-color="#9054a6"/></linearGradient><linearGradient id="g5k" x1=".33" y1=".93" x2=".67" y2=".07"><stop stop-color="#4401a5"/><stop offset="1" stop-color="#690193"/></linearGradient><linearGradient id="g5l" x1="-.01" y1=".99" x2="1.01" y2=".01"><stop stop-color="#3e0094"/><stop offset="1" stop-color="#69007d"/></linearGradient><linearGradient id="g5m" x1="-.08" y1=".88" x2="1.08" y2=".13"><stop stop-color="#44007c"/><stop offset="1" stop-color="#6a005e"/></linearGradient><linearGradient id="g5n" x1="-.1" y1=".78" x2="1.1" y2=".23"><stop stop-color="#4d0062"/><stop offset="1" stop-color="#6d003c"/></linearGradient><linearGradient id="g5o" x1="-.1" y1=".72" x2="1.1" y2=".29"><stop stop-color="#58004b"/><stop offset=".49" stop-color="#660035"/><stop offset=".74" stop-color="#6c0024"/><stop offset=".86" stop-color="#6f0017"/><stop offset=".99" stop-color="#720000"/><stop offset="1" stop-color="#720400"/></linearGradient><linearGradient id="g5p" x1="-.1" y1=".73" x2="1.1" y2=".28"><stop stop-color="#670030"/><stop offset=".21" stop-color="#6c0021"/><stop offset=".42" stop-color="#710000"/><stop offset=".57" stop-color="#711b00"/><stop offset=".71" stop-color="#712800"/><stop offset="1" stop-color="#713a00"/></linearGradient><linearGradient id="g5q" x1="-.1" y1=".79" x2="1.1" y2=".22"><stop stop-color="#781c00"/><stop offset=".5" stop-color="#784000"/><stop offset="1" stop-color="#785500"/></linearGradient><linearGradient id="g5r" x1="-.08" y1=".88" x2="1.08" y2=".12"><stop stop-color="#864b00"/><stop offset="1" stop-color="#866f00"/></linearGradient><linearGradient id="g5s" x1="-.01" y1=".99" x2="1.01" y2=".01"><stop stop-color="#996c00"/><stop offset="1" stop-color="#998900"/></linearGradient><linearGradient id="g5t" x1=".25" y1=".99" x2=".74" y2=".01"><stop stop-color="#ac8700"/><stop offset="1" stop-color="#ac9d00"/></linearGradient><linearGradient id="g5u" x1=".43" y1=".98" x2=".57" y2=".02"><stop stop-color="#c8a45c"/><stop offset="1" stop-color="#c8ba5c"/></linearGradient><linearGradient id="g5v" x1=".21" y1="1.09" x2=".79" y2="-.09"><stop stop-color="#a66200"/><stop offset="1" stop-color="#a68500"/></linearGradient><linearGradient id="g5w" x1=".41" y1=".96" x2=".59" y2=".03"><stop stop-color="#b26e00"/><stop offset="1" stop-color="#b28f00"/></linearGradient><linearGradient id="g5x" x1=".47" y1=".99" x2=".53" y2=".01"><stop stop-color="#bb672b"/><stop offset="1" stop-color="#bb952b"/></linearGradient><linearGradient id="g5y" x1=".5" y1="1" x2=".5" y2="0"><stop stop-color="#bd4939"/><stop offset=".5" stop-color="#bd7139"/><stop offset="1" stop-color="#bd8d39"/></linearGradient><linearGradient id="g5z" x1=".52" y1="1" x2=".48" y2="0"><stop stop-color="#a91c54"/><stop offset=".19" stop-color="#b01c3f"/><stop offset=".38" stop-color="#b71c1c"/><stop offset=".53" stop-color="#b73c1c"/><stop offset=".69" stop-color="#b7501c"/><stop offset="1" stop-color="#b76b1c"/></linearGradient><linearGradient id="g60" x1=".52" y1="1.01" x2=".47" y2="0"><stop stop-color="#8f0d78"/><stop offset=".44" stop-color="#a30d57"/><stop offset=".65" stop-color="#ac0d3f"/><stop offset=".76" stop-color="#b00d2e"/><stop offset=".87" stop-color="#b40d0d"/><stop offset="1" stop-color="#b4330d"/></linearGradient><linearGradient id="g61" x1=".53" y1="1.01" x2=".47" y2="0"><stop stop-color="#720c94"/><stop offset=".5" stop-color="#8e0c79"/><stop offset="1" stop-color="#a50c53"/></linearGradient><linearGradient id="g62" x1=".52" y1="1" x2=".48" y2="0"><stop stop-color="#5018aa"/><stop offset=".5" stop-color="#761895"/><stop offset="1" stop-color="#90187c"/></linearGradient><linearGradient id="g63" x1=".49" y1="1" x2=".5" y2="0"><stop stop-color="#2c2dbb"/><stop offset="0" stop-color="#2c2cbb"/><stop offset=".25" stop-color="#4b2cb3"/><stop offset=".5" stop-color="#5f2cab"/><stop offset="1" stop-color="#7d2c99"/></linearGradient><linearGradient id="g64" x1=".45" y1=".99" x2=".54" y2=".01"><stop stop-color="#1834b0"/><stop offset=".28" stop-color="#1818b8"/><stop offset=".46" stop-color="#3518b3"/><stop offset=".64" stop-color="#4618af"/><stop offset="1" stop-color="#5f18a4"/></linearGradient><linearGradient id="g65" x1=".38" y1=".94" x2=".62" y2=".06"><stop stop-color="#002ca8"/><stop offset=".2" stop-color="#001dac"/><stop offset=".4" stop-color="#0000b0"/><stop offset=".55" stop-color="#2100ad"/><stop offset=".7" stop-color="#3100aa"/><stop offset="1" stop-color="#4600a4"/></linearGradient><linearGradient id="g66" x1=".1" y1="1.07" x2=".9" y2="-.07"><stop stop-color="#00289b"/><stop offset=".15" stop-color="#001a9e"/><stop offset=".31" stop-color="#0000a2"/><stop offset=".39" stop-color="#1800a0"/><stop offset=".48" stop-color="#25009e"/><stop offset=".65" stop-color="#36009a"/><stop offset="1" stop-color="#4d0092"/></linearGradient><linearGradient id="g67" x1="-.01" y1=".99" x2="1.01" y2=".02"><stop stop-color="#000b8f"/><stop offset=".05" stop-color="#000091"/><stop offset=".17" stop-color="#1d008e"/><stop offset=".29" stop-color="#2c008b"/><stop offset=".53" stop-color="#3f0085"/><stop offset="1" stop-color="#590077"/></linearGradient><linearGradient id="g68" x1="-.08" y1=".88" x2="1.08" y2=".13"><stop stop-color="#2f007a"/><stop offset=".5" stop-color="#4e006b"/><stop offset="1" stop-color="#630059"/></linearGradient><linearGradient id="g69" x1="-.1" y1=".79" x2="1.1" y2=".22"><stop stop-color="#470065"/><stop offset="1" stop-color="#6c0039"/></linearGradient><linearGradient id="g6a" x1="-.11" y1=".78" x2="1.1" y2=".23"><stop stop-color="#5a0051"/><stop offset=".47" stop-color="#6a0039"/><stop offset=".71" stop-color="#710027"/><stop offset=".83" stop-color="#74001a"/><stop offset=".95" stop-color="#700"/><stop offset="1" stop-color="#770f00"/></linearGradient><linearGradient id="g6b" x1="-.09" y1=".84" x2="1.09" y2=".16"><stop stop-color="#700039"/><stop offset=".22" stop-color="#760027"/><stop offset=".34" stop-color="#79001a"/><stop offset=".45" stop-color="#7c0000"/><stop offset=".59" stop-color="#7c1e00"/><stop offset=".72" stop-color="#7c2d00"/><stop offset="1" stop-color="#7c4100"/></linearGradient><linearGradient id="g6c" x1="-.04" y1=".96" x2="1.04" y2=".05"><stop stop-color="#881000"/><stop offset=".25" stop-color="#883200"/><stop offset=".5" stop-color="#840"/><stop offset="1" stop-color="#885e00"/></linearGradient><linearGradient id="g6d" x1=".06" y1="1.05" x2=".94" y2="-.05"><stop stop-color="#984900"/><stop offset="1" stop-color="#987600"/></linearGradient><linearGradient id="g6e" x1=".25" y1="1.04" x2=".75" y2="-.05"><stop stop-color="#a96600"/><stop offset="1" stop-color="#a98700"/></linearGradient><linearGradient id="g6f" x1=".41" y1=".97" x2=".58" y2=".03"><stop stop-color="#b46d07"/><stop offset="1" stop-color="#b49107"/></linearGradient><linearGradient id="g6g" x1=".48" y1="1" x2=".52" y2="0"><stop stop-color="#bf6a3c"/><stop offset="1" stop-color="#bf993c"/></linearGradient><linearGradient id="g6h" x1=".51" y1="1" x2=".49" y2="0"><stop stop-color="#b82a1e"/><stop offset=".25" stop-color="#b84d1e"/><stop offset=".5" stop-color="#b8631e"/><stop offset="1" stop-color="#b8821e"/></linearGradient><linearGradient id="g6i" x1=".52" y1="1" x2=".48" y2="0"><stop stop-color="#a30556"/><stop offset=".22" stop-color="#ac053e"/><stop offset=".34" stop-color="#b1052b"/><stop offset=".39" stop-color="#b3051e"/><stop offset=".45" stop-color="#b50505"/><stop offset=".52" stop-color="#b52305"/><stop offset=".59" stop-color="#b53205"/><stop offset=".72" stop-color="#b54605"/><stop offset="1" stop-color="#b56205"/></linearGradient><linearGradient id="g6j" x1=".53" y1="1" x2=".47" y2="0"><stop stop-color="#8a017c"/><stop offset=".47" stop-color="#a10159"/><stop offset=".71" stop-color="#ab0140"/><stop offset=".83" stop-color="#af012c"/><stop offset=".89" stop-color="#b2011e"/><stop offset=".95" stop-color="#b40101"/><stop offset="1" stop-color="#b41d01"/></linearGradient><linearGradient id="g6k" x1=".53" y1="1" x2=".47" y2="0"><stop stop-color="#6c0297"/><stop offset="1" stop-color="#a10259"/></linearGradient><linearGradient id="g6l" x1=".52" y1="1" x2=".48" y2="0"><stop stop-color="#4607ab"/><stop offset=".5" stop-color="#6f0797"/><stop offset="1" stop-color="#8b077f"/></linearGradient><linearGradient id="g6m" x1=".49" y1="1" x2=".51" y2="0"><stop stop-color="#2027b8"/><stop offset=".05" stop-color="#2020b9"/><stop offset=".29" stop-color="#4320b2"/><stop offset=".53" stop-color="#5820aa"/><stop offset="1" stop-color="#76209a"/></linearGradient><linearGradient id="g6n" x1=".44" y1=".98" x2=".56" y2=".02"><stop stop-color="#1f39b0"/><stop offset=".31" stop-color="#1f1fb8"/><stop offset=".65" stop-color="#461fb0"/><stop offset="1" stop-color="#5d1fa6"/></linearGradient><linearGradient id="g6o" x1=".34" y1=".94" x2=".66" y2=".06"><stop stop-color="#002ba6"/><stop offset=".2" stop-color="#001daa"/><stop offset=".4" stop-color="#0000ae"/><stop offset=".55" stop-color="#2100ab"/><stop offset=".7" stop-color="#3000a9"/><stop offset="1" stop-color="#4500a3"/></linearGradient><linearGradient id="g6p" x1=".04" y1="1.04" x2=".95" y2="-.04"><stop stop-color="#002599"/><stop offset=".14" stop-color="#00189c"/><stop offset=".28" stop-color="#00009f"/><stop offset=".37" stop-color="#19009d"/><stop offset=".46" stop-color="#26009b"/><stop offset=".64" stop-color="#380097"/><stop offset="1" stop-color="#4f008e"/></linearGradient><linearGradient id="g6q" x1="-.04" y1=".96" x2="1.03" y2=".05"><stop stop-color="#00018e"/><stop offset="0" stop-color="#00008e"/><stop offset=".13" stop-color="#1e008b"/><stop offset=".25" stop-color="#2d0088"/><stop offset=".5" stop-color="#400081"/><stop offset="1" stop-color="#5a0072"/></linearGradient><linearGradient id="g6r" x1="-.08" y1=".89" x2="1.07" y2=".12"><stop stop-color="#307"/><stop offset="1" stop-color="#640055"/></linearGradient><linearGradient id="g6s" x1="-.1" y1=".83" x2="1.09" y2=".17"><stop stop-color="#4a0062"/><stop offset="1" stop-color="#6e0034"/></linearGradient><linearGradient id="g6t" x1="-.09" y1=".84" x2="1.09" y2=".16"><stop stop-color="#5e004e"/><stop offset=".44" stop-color="#6c0037"/><stop offset=".65" stop-color="#720025"/><stop offset=".76" stop-color="#750019"/><stop offset=".87" stop-color="#780000"/><stop offset="1" stop-color="#781c00"/></linearGradient><linearGradient id="g6u" x1="-.08" y1=".89" x2="1.07" y2=".12"><stop stop-color="#730034"/><stop offset=".19" stop-color="#790024"/><stop offset=".28" stop-color="#7b0017"/><stop offset=".38" stop-color="#7e0000"/><stop offset=".53" stop-color="#7e2100"/><stop offset=".69" stop-color="#7e3100"/><stop offset="1" stop-color="#7e4600"/></linearGradient><linearGradient id="g6v" x1="-.04" y1=".97" x2="1.03" y2=".04"><stop stop-color="#8a1f00"/><stop offset=".5" stop-color="#8a4900"/><stop offset="1" stop-color="#8a6100"/></linearGradient><linearGradient id="g6w" x1=".04" y1="1.04" x2=".96" y2="-.03"><stop stop-color="#9b4e00"/><stop offset="1" stop-color="#9b7900"/></linearGradient><linearGradient id="g6x" x1=".27" y1="1" x2=".72" y2="0"><stop stop-color="#ab6900"/><stop offset="1" stop-color="#ab8900"/></linearGradient><linearGradient id="g6y" x1=".42" y1=".98" x2=".58" y2=".02"><stop stop-color="#b87227"/><stop offset="1" stop-color="#b89627"/></linearGradient><linearGradient id="g6z" x1=".23" y1="1.08" x2=".77" y2="-.09"><stop stop-color="#a62b00"/><stop offset=".5" stop-color="#a65200"/><stop offset="1" stop-color="#a66a00"/></linearGradient><linearGradient id="g70" x1=".41" y1=".97" x2=".58" y2=".04"><stop stop-color="#b23800"/><stop offset=".5" stop-color="#b25a00"/><stop offset="1" stop-color="#b27100"/></linearGradient><linearGradient id="g71" x1=".47" y1=".99" x2=".53" y2=".01"><stop stop-color="#b61926"/><stop offset=".06" stop-color="#b81919"/><stop offset=".29" stop-color="#b83f19"/><stop offset=".53" stop-color="#b85519"/><stop offset="1" stop-color="#b87319"/></linearGradient><linearGradient id="g72" x1=".5" y1="1" x2=".5" y2="0"><stop stop-color="#aa2a5e"/><stop offset=".23" stop-color="#b22a4a"/><stop offset=".46" stop-color="#ba2a2a"/><stop offset=".73" stop-color="#ba4f2a"/><stop offset="1" stop-color="#ba662a"/></linearGradient><linearGradient id="g73" x1=".52" y1="1" x2=".48" y2="0"><stop stop-color="#91177a"/><stop offset=".44" stop-color="#a5175a"/><stop offset=".67" stop-color="#ae1743"/><stop offset=".78" stop-color="#b21732"/><stop offset=".89" stop-color="#b61717"/><stop offset="1" stop-color="#b63317"/></linearGradient><linearGradient id="g74" x1=".52" y1="1.01" x2=".48" y2="0"><stop stop-color="#710b94"/><stop offset=".5" stop-color="#8f0b78"/><stop offset="1" stop-color="#a60b4f"/></linearGradient><linearGradient id="g75" x1=".52" y1="1" x2=".48" y2="0"><stop stop-color="#430aab"/><stop offset=".5" stop-color="#710a94"/><stop offset="1" stop-color="#8f0a78"/></linearGradient><linearGradient id="g76" x1=".51" y1="1" x2=".49" y2="0"><stop stop-color="#1232ae"/><stop offset=".2" stop-color="#1212b6"/><stop offset=".3" stop-color="#2e12b2"/><stop offset=".4" stop-color="#3e12af"/><stop offset=".6" stop-color="#5412a7"/><stop offset="1" stop-color="#731295"/></linearGradient><linearGradient id="g77" x1=".49" y1="1" x2=".51" y2="0"><stop stop-color="#1e52a2"/><stop offset=".31" stop-color="#1e3eae"/><stop offset=".61" stop-color="#1e1eb9"/><stop offset=".81" stop-color="#3e1eb2"/><stop offset="1" stop-color="#521eac"/></linearGradient><linearGradient id="g78" x1=".45" y1=".99" x2=".55" y2=".02"><stop stop-color="#0b5897"/><stop offset=".5" stop-color="#0b40a7"/><stop offset=".75" stop-color="#0b2eaf"/><stop offset="1" stop-color="#0b0cb6"/></linearGradient><linearGradient id="g79" x1=".38" y1=".94" x2=".62" y2=".06"><stop stop-color="#005490"/><stop offset="1" stop-color="#002aa8"/></linearGradient><linearGradient id="g7a" x1=".11" y1="1.07" x2=".88" y2="-.08"><stop stop-color="#004e85"/><stop offset=".5" stop-color="#003893"/><stop offset=".75" stop-color="#00299a"/><stop offset="1" stop-color="#000ea0"/></linearGradient><linearGradient id="g7b" x1="0" y1="1.01" x2=".99" y2="0"><stop stop-color="#003d7e"/><stop offset=".34" stop-color="#002a88"/><stop offset=".51" stop-color="#001c8d"/><stop offset=".67" stop-color="#000092"/><stop offset=".76" stop-color="#180090"/><stop offset=".84" stop-color="#24008d"/><stop offset="1" stop-color="#350089"/></linearGradient><linearGradient id="g7c" x1="-.07" y1=".91" x2="1.06" y2=".09"><stop stop-color="#00237c"/><stop offset=".13" stop-color="#001780"/><stop offset=".26" stop-color="#000084"/><stop offset=".35" stop-color="#180081"/><stop offset=".45" stop-color="#25007f"/><stop offset=".63" stop-color="#360079"/><stop offset="1" stop-color="#4d006e"/></linearGradient><linearGradient id="g7d" x1="-.1" y1=".84" x2="1.09" y2=".17"><stop stop-color="#230076"/><stop offset=".5" stop-color="#470067"/><stop offset="1" stop-color="#5e0054"/></linearGradient><linearGradient id="g7e" x1="-.1" y1=".82" x2="1.09" y2=".18"><stop stop-color="#460065"/><stop offset="1" stop-color="#6d0037"/></linearGradient><linearGradient id="g7f" x1="-.08" y1=".88" x2="1.08" y2=".12"><stop stop-color="#600056"/><stop offset=".48" stop-color="#70003d"/><stop offset=".72" stop-color="#77002a"/><stop offset=".84" stop-color="#7b001c"/><stop offset=".96" stop-color="#7e0000"/><stop offset="1" stop-color="#7e0e00"/></linearGradient><linearGradient id="g7g" x1="-.03" y1=".98" x2="1.02" y2=".03"><stop stop-color="#7a0043"/><stop offset=".26" stop-color="#82002e"/><stop offset=".39" stop-color="#86001f"/><stop offset=".53" stop-color="#890000"/><stop offset=".64" stop-color="#891e00"/><stop offset=".76" stop-color="#892d00"/><stop offset="1" stop-color="#894100"/></linearGradient><linearGradient id="g7h" x1=".08" y1="1.06" x2=".92" y2="-.06"><stop stop-color="#96001f"/><stop offset=".12" stop-color="#980000"/><stop offset=".23" stop-color="#981e00"/><stop offset=".34" stop-color="#982d00"/><stop offset=".56" stop-color="#984100"/><stop offset="1" stop-color="#985b00"/></linearGradient><linearGradient id="g7i" x1=".26" y1="1.04" x2=".74" y2="-.04"><stop stop-color="#a83100"/><stop offset=".5" stop-color="#a85400"/><stop offset="1" stop-color="#a86b00"/></linearGradient><linearGradient id="g7j" x1=".41" y1=".97" x2=".58" y2=".03"><stop stop-color="#b33503"/><stop offset=".5" stop-color="#b35a03"/><stop offset="1" stop-color="#b37203"/></linearGradient><linearGradient id="g7k" x1=".47" y1="1" x2=".53" y2=".01"><stop stop-color="#b72839"/><stop offset=".12" stop-color="#ba2828"/><stop offset=".34" stop-color="#ba4628"/><stop offset=".56" stop-color="#ba5928"/><stop offset="1" stop-color="#ba7528"/></linearGradient><linearGradient id="g7l" x1=".5" y1="1" x2=".5" y2="0"><stop stop-color="#a4175e"/><stop offset=".26" stop-color="#ae1745"/><stop offset=".39" stop-color="#b31734"/><stop offset=".53" stop-color="#b71717"/><stop offset=".64" stop-color="#b73317"/><stop offset=".76" stop-color="#b74417"/><stop offset="1" stop-color="#b75c17"/></linearGradient><linearGradient id="g7m" x1=".52" y1="1" x2=".48" y2="0"><stop stop-color="#8b047d"/><stop offset=".48" stop-color="#a1045a"/><stop offset=".72" stop-color="#ab0440"/><stop offset=".84" stop-color="#b0042d"/><stop offset=".9" stop-color="#b2041f"/><stop offset=".96" stop-color="#b50404"/><stop offset="1" stop-color="#b51b04"/></linearGradient><linearGradient id="g7n" x1=".52" y1="1" x2=".48" y2="0"><stop stop-color="#6a0197"/><stop offset=".5" stop-color="#8a017c"/><stop offset="1" stop-color="#a20155"/></linearGradient><linearGradient id="g7o" x1=".52" y1="1" x2=".48" y2="0"><stop stop-color="#3701ad"/><stop offset=".5" stop-color="#6b0197"/><stop offset="1" stop-color="#8a017c"/></linearGradient><linearGradient id="g7p" x1=".51" y1="1" x2=".49" y2="0"><stop stop-color="#0535ab"/><stop offset=".13" stop-color="#0525b1"/><stop offset=".26" stop-color="#0505b6"/><stop offset=".35" stop-color="#2705b2"/><stop offset=".45" stop-color="#3805af"/><stop offset=".63" stop-color="#4e05a8"/><stop offset="1" stop-color="#6d0598"/></linearGradient><linearGradient id="g7q" x1=".49" y1="1" x2=".51" y2="0"><stop stop-color="#1552a0"/><stop offset=".34" stop-color="#153dac"/><stop offset=".67" stop-color="#1515b8"/><stop offset=".84" stop-color="#3615b3"/><stop offset="1" stop-color="#4915ad"/></linearGradient><linearGradient id="g7r" x1=".44" y1=".98" x2=".56" y2=".02"><stop stop-color="#105a96"/><stop offset=".5" stop-color="#1043a6"/><stop offset="1" stop-color="#101ab4"/></linearGradient><linearGradient id="g7s" x1=".34" y1=".94" x2=".66" y2=".06"><stop stop-color="#00548f"/><stop offset="1" stop-color="#0029a6"/></linearGradient><linearGradient id="g7t" x1=".06" y1="1.04" x2=".94" y2="-.05"><stop stop-color="#004c84"/><stop offset=".5" stop-color="#003592"/><stop offset=".75" stop-color="#002599"/><stop offset=".87" stop-color="#00189c"/><stop offset="1" stop-color="#00019f"/></linearGradient><linearGradient id="g7u" x1="-.03" y1=".98" x2="1.02" y2=".03"><stop stop-color="#003a7d"/><stop offset=".31" stop-color="#002887"/><stop offset=".46" stop-color="#001a8b"/><stop offset=".61" stop-color="#00008f"/><stop offset=".71" stop-color="#1a008d"/><stop offset=".81" stop-color="#28008a"/><stop offset="1" stop-color="#3a0085"/></linearGradient><linearGradient id="g7v" x1="-.07" y1=".9" x2="1.07" y2=".1"><stop stop-color="#001d7c"/><stop offset=".2" stop-color="#000082"/><stop offset=".3" stop-color="#1a007f"/><stop offset=".4" stop-color="#27007d"/><stop offset=".6" stop-color="#380077"/><stop offset="1" stop-color="#50006a"/></linearGradient><linearGradient id="g7w" x1="-.09" y1=".86" x2="1.08" y2=".14"><stop stop-color="#2a0074"/><stop offset=".5" stop-color="#4b0064"/><stop offset="1" stop-color="#600050"/></linearGradient><linearGradient id="g7x" x1="-.09" y1=".87" x2="1.08" y2=".14"><stop stop-color="#4a0063"/><stop offset="1" stop-color="#700032"/></linearGradient><linearGradient id="g7y" x1="-.07" y1=".91" x2="1.06" y2=".1"><stop stop-color="#640053"/><stop offset=".44" stop-color="#73003b"/><stop offset=".67" stop-color="#790029"/><stop offset=".78" stop-color="#7c001b"/><stop offset=".89" stop-color="#7f0000"/><stop offset="1" stop-color="#7f1c00"/></linearGradient><linearGradient id="g7z" x1="-.02" y1=".98" x2="1.02" y2=".02"><stop stop-color="#7e003f"/><stop offset=".23" stop-color="#85002c"/><stop offset=".35" stop-color="#88001d"/><stop offset=".46" stop-color="#8b0000"/><stop offset=".6" stop-color="#8b2100"/><stop offset=".73" stop-color="#8b3100"/><stop offset="1" stop-color="#8b4600"/></linearGradient><linearGradient id="g80" x1=".05" y1="1.05" x2=".94" y2="-.04"><stop stop-color="#990013"/><stop offset=".06" stop-color="#9b0000"/><stop offset=".18" stop-color="#9b2000"/><stop offset=".29" stop-color="#9b2f00"/><stop offset=".53" stop-color="#9b4300"/><stop offset="1" stop-color="#9b5e00"/></linearGradient><linearGradient id="g81" x1=".28" y1=".99" x2=".72" y2="0"><stop stop-color="#aa3500"/><stop offset=".5" stop-color="#aa5600"/><stop offset="1" stop-color="#aa6c00"/></linearGradient><linearGradient id="g82" x1=".41" y1=".98" x2=".58" y2=".02"><stop stop-color="#b53717"/><stop offset=".5" stop-color="#b55d17"/><stop offset="1" stop-color="#b57517"/></linearGradient><linearGradient id="g83" x1=".21" y1="1.08" x2=".79" y2="-.08"><stop stop-color="#990048"/><stop offset=".3" stop-color="#a00032"/><stop offset=".45" stop-color="#a30022"/><stop offset=".53" stop-color="#a50016"/><stop offset=".6" stop-color="#a60000"/><stop offset=".7" stop-color="#a61c00"/><stop offset=".8" stop-color="#a62a00"/><stop offset="1" stop-color="#a63c00"/></linearGradient><linearGradient id="g84" x1=".41" y1=".96" x2=".59" y2=".04"><stop stop-color="#a60048"/><stop offset=".28" stop-color="#ac0032"/><stop offset=".42" stop-color="#af0022"/><stop offset=".49" stop-color="#b10016"/><stop offset=".56" stop-color="#b20000"/><stop offset=".67" stop-color="#b21f00"/><stop offset=".78" stop-color="#b22d00"/><stop offset="1" stop-color="#b24100"/></linearGradient><linearGradient id="g85" x1=".47" y1=".99" x2=".53" y2=".01"><stop stop-color="#a32066"/><stop offset=".37" stop-color="#af204c"/><stop offset=".75" stop-color="#b92020"/><stop offset="1" stop-color="#b94320"/></linearGradient><linearGradient id="g86" x1=".5" y1="1" x2=".5" y2="0"><stop stop-color="#952d82"/><stop offset=".5" stop-color="#a82d65"/><stop offset="1" stop-color="#b92d36"/></linearGradient><linearGradient id="g87" x1=".52" y1="1" x2=".48" y2="0"><stop stop-color="#741695"/><stop offset="1" stop-color="#a61657"/></linearGradient><linearGradient id="g88" x1=".53" y1="1.01" x2=".47" y2="0"><stop stop-color="#4509aa"/><stop offset=".5" stop-color="#710994"/><stop offset="1" stop-color="#8e0978"/></linearGradient><linearGradient id="g89" x1=".53" y1="1.01" x2=".47" y2="0"><stop stop-color="#0834ab"/><stop offset=".12" stop-color="#0825b0"/><stop offset=".24" stop-color="#0808b4"/><stop offset=".34" stop-color="#2a08b1"/><stop offset=".43" stop-color="#3a08ad"/><stop offset=".62" stop-color="#5108a5"/><stop offset="1" stop-color="#710894"/></linearGradient><linearGradient id="g8a" x1=".52" y1="1" x2=".48" y2="0"><stop stop-color="#125898"/><stop offset=".37" stop-color="#1241a8"/><stop offset=".55" stop-color="#1230af"/><stop offset=".73" stop-color="#1212b6"/><stop offset=".87" stop-color="#3312b1"/><stop offset="1" stop-color="#4512ac"/></linearGradient><linearGradient id="g8b" x1=".49" y1="1" x2=".5" y2="0"><stop stop-color="#226e8a"/><stop offset="1" stop-color="#223ab2"/></linearGradient><linearGradient id="g8c" x1="-.09" y1=".86" x2="1.08" y2=".14"><stop stop-color="#003e6a"/><stop offset=".4" stop-color="#002b77"/><stop offset=".6" stop-color="#001d7d"/><stop offset=".8" stop-color="#000083"/><stop offset=".9" stop-color="#190080"/><stop offset="1" stop-color="#26007d"/></linearGradient><linearGradient id="g8d" x1="-.1" y1=".77" x2="1.1" y2=".23"><stop stop-color="#002471"/><stop offset=".16" stop-color="#001875"/><stop offset=".31" stop-color="#00007a"/><stop offset=".49" stop-color="#210075"/><stop offset=".66" stop-color="#310070"/><stop offset="1" stop-color="#460066"/></linearGradient><linearGradient id="g8e" x1="-.1" y1=".77" x2="1.1" y2=".24"><stop stop-color="#220073"/><stop offset=".5" stop-color="#450064"/><stop offset="1" stop-color="#5b0051"/></linearGradient><linearGradient id="g8f" x1="-.1" y1=".84" x2="1.09" y2=".17"><stop stop-color="#490068"/><stop offset="1" stop-color="#6f003c"/></linearGradient><linearGradient id="g8g" x1="-.05" y1=".94" x2="1.05" y2=".06"><stop stop-color="#67005e"/><stop offset=".5" stop-color="#780046"/><stop offset=".75" stop-color="#7f0035"/><stop offset="1" stop-color="#86001a"/></linearGradient><linearGradient id="g8h" x1=".04" y1="1.04" x2=".95" y2="-.04"><stop stop-color="#840053"/><stop offset=".39" stop-color="#8e003a"/><stop offset=".59" stop-color="#930028"/><stop offset=".69" stop-color="#96001b"/><stop offset=".79" stop-color="#980000"/><stop offset=".89" stop-color="#981d00"/><stop offset="1" stop-color="#982b00"/></linearGradient><linearGradient id="g8i" x1=".24" y1="1.03" x2=".75" y2="-.04"><stop stop-color="#9c0046"/><stop offset=".29" stop-color="#a20031"/><stop offset=".43" stop-color="#a50021"/><stop offset=".58" stop-color="#a80000"/><stop offset=".68" stop-color="#a81c00"/><stop offset=".79" stop-color="#a82b00"/><stop offset="1" stop-color="#a83d00"/></linearGradient><linearGradient id="g8j" x1=".41" y1=".97" x2=".59" y2=".03"><stop stop-color="#a6044c"/><stop offset=".29" stop-color="#ad0436"/><stop offset=".43" stop-color="#b00425"/><stop offset=".58" stop-color="#b30404"/><stop offset=".68" stop-color="#b32004"/><stop offset=".79" stop-color="#b32f04"/><stop offset="1" stop-color="#b34304"/></linearGradient><linearGradient id="g8k" x1=".47" y1="1" x2=".53" y2=".01"><stop stop-color="#a42d6e"/><stop offset=".39" stop-color="#b02d55"/><stop offset=".79" stop-color="#bb2d2d"/><stop offset="1" stop-color="#bb472d"/></linearGradient><linearGradient id="g8l" x1=".51" y1="1" x2=".49" y2="0"><stop stop-color="#8d1781"/><stop offset=".5" stop-color="#a21763"/><stop offset=".75" stop-color="#ab174e"/><stop offset="1" stop-color="#b4172f"/></linearGradient><linearGradient id="g8m" x1=".52" y1="1" x2=".48" y2="0"><stop stop-color="#6d0397"/><stop offset="1" stop-color="#a2035a"/></linearGradient><linearGradient id="g8n" x1=".53" y1="1" x2=".47" y2="0"><stop stop-color="#3801ad"/><stop offset=".5" stop-color="#6b0197"/><stop offset="1" stop-color="#8a017c"/></linearGradient><linearGradient id="g8o" x1=".53" y1="1" x2=".47" y2="0"><stop stop-color="#013aa7"/><stop offset=".16" stop-color="#0128ae"/><stop offset=".24" stop-color="#011bb1"/><stop offset=".31" stop-color="#0101b4"/><stop offset=".36" stop-color="#1801b2"/><stop offset=".4" stop-color="#2501b1"/><stop offset=".49" stop-color="#3601ae"/><stop offset=".66" stop-color="#4c01a7"/><stop offset="1" stop-color="#6a0198"/></linearGradient><linearGradient id="g8p" x1=".52" y1="1" x2=".48" y2="0"><stop stop-color="#045a94"/><stop offset=".4" stop-color="#0440a6"/><stop offset=".6" stop-color="#042dae"/><stop offset=".7" stop-color="#041fb2"/><stop offset=".8" stop-color="#0404b6"/><stop offset=".85" stop-color="#1b04b4"/><stop offset=".9" stop-color="#2804b2"/><stop offset="1" stop-color="#3904af"/></linearGradient><linearGradient id="g8q" x1=".49" y1="1" x2=".51" y2="0"><stop stop-color="#176d86"/><stop offset="1" stop-color="#173aae"/></linearGradient><linearGradient id="g8r" x1=".43" y1=".98" x2=".56" y2=".02"><stop stop-color="#14737b"/><stop offset="1" stop-color="#14519f"/></linearGradient><linearGradient id="g8s" x1=".34" y1=".94" x2=".66" y2=".06"><stop stop-color="#006c74"/><stop offset="1" stop-color="#005390"/></linearGradient><linearGradient id="g8t" x1=".05" y1="1.02" x2=".95" y2="-.03"><stop stop-color="#00626b"/><stop offset="1" stop-color="#00418b"/></linearGradient><linearGradient id="g8u" x1="-.05" y1=".95" x2="1.04" y2=".06"><stop stop-color="#005068"/><stop offset=".5" stop-color="#003e7a"/><stop offset="1" stop-color="#002188"/></linearGradient><linearGradient id="g8v" x1="-.09" y1=".87" x2="1.08" y2=".14"><stop stop-color="#003b6b"/><stop offset=".37" stop-color="#002976"/><stop offset=".55" stop-color="#001b7c"/><stop offset=".73" stop-color="#000081"/><stop offset=".87" stop-color="#1e007d"/><stop offset="1" stop-color="#2d007a"/></linearGradient><linearGradient id="g8w" x1="-.1" y1=".83" x2="1.09" y2=".18"><stop stop-color="#001f72"/><stop offset=".24" stop-color="#000079"/><stop offset=".34" stop-color="#170077"/><stop offset=".43" stop-color="#230074"/><stop offset=".62" stop-color="#34006f"/><stop offset="1" stop-color="#4a0063"/></linearGradient><linearGradient id="g8x" x1="-.1" y1=".83" x2="1.09" y2=".18"><stop stop-color="#2a0071"/><stop offset=".5" stop-color="#490061"/><stop offset="1" stop-color="#5e004e"/></linearGradient><linearGradient id="g8y" x1="-.09" y1=".87" x2="1.08" y2=".13"><stop stop-color="#4e0066"/><stop offset="1" stop-color="#720038"/></linearGradient><linearGradient id="g8z" x1="-.05" y1=".95" x2="1.04" y2=".06"><stop stop-color="#6b005c"/><stop offset=".5" stop-color="#7b0043"/><stop offset=".75" stop-color="#820031"/><stop offset="1" stop-color="#890010"/></linearGradient><linearGradient id="g90" x1=".03" y1="1.03" x2=".97" y2="-.02"><stop stop-color="#880051"/><stop offset=".37" stop-color="#920039"/><stop offset=".56" stop-color="#960027"/><stop offset=".65" stop-color="#98001a"/><stop offset=".75" stop-color="#9b0000"/><stop offset=".87" stop-color="#9b2000"/><stop offset="1" stop-color="#9b3000"/></linearGradient><linearGradient id="g91" x1=".27" y1=".99" x2=".73" y2=".01"><stop stop-color="#9f0045"/><stop offset=".28" stop-color="#a50030"/><stop offset=".42" stop-color="#a80020"/><stop offset=".56" stop-color="#a00"/><stop offset=".67" stop-color="#aa1d00"/><stop offset=".78" stop-color="#aa2b00"/><stop offset="1" stop-color="#aa3e00"/></linearGradient><linearGradient id="g92" x1=".41" y1=".98" x2=".59" y2=".02"><stop stop-color="#a81c54"/><stop offset=".3" stop-color="#af1c3f"/><stop offset=".6" stop-color="#b61c1c"/><stop offset=".8" stop-color="#b6371c"/><stop offset="1" stop-color="#b6491c"/></linearGradient><linearGradient id="g93" x1=".15" y1="1.05" x2=".85" y2="-.06"><stop stop-color="#880068"/><stop offset="1" stop-color="#9e003c"/></linearGradient><linearGradient id="g94" x1=".4" y1=".96" x2=".6" y2=".04"><stop stop-color="#96016e"/><stop offset="1" stop-color="#aa0142"/></linearGradient><linearGradient id="g95" x1=".48" y1="1" x2=".52" y2=".01"><stop stop-color="#9c4790"/><stop offset="1" stop-color="#b74766"/></linearGradient><linearGradient id="g96" x1=".52" y1="1" x2=".48" y2="0"><stop stop-color="#853f9e"/><stop offset="1" stop-color="#ab3f72"/></linearGradient><linearGradient id="g97" x1=".53" y1="1.01" x2=".47" y2="0"><stop stop-color="#5316a8"/><stop offset="1" stop-color="#8f167c"/></linearGradient><linearGradient id="g98" x1=".54" y1="1.01" x2=".46" y2="0"><stop stop-color="#0729ae"/><stop offset=".16" stop-color="#0707b4"/><stop offset=".27" stop-color="#2907b0"/><stop offset=".37" stop-color="#3b07ac"/><stop offset=".58" stop-color="#5207a4"/><stop offset="1" stop-color="#710793"/></linearGradient><linearGradient id="g99" x1=".54" y1="1.01" x2=".46" y2="0"><stop stop-color="#065497"/><stop offset=".36" stop-color="#063ca7"/><stop offset=".53" stop-color="#062bad"/><stop offset=".62" stop-color="#061eb1"/><stop offset=".71" stop-color="#0606b4"/><stop offset=".78" stop-color="#2206b2"/><stop offset=".86" stop-color="#3006af"/><stop offset="1" stop-color="#4406aa"/></linearGradient><linearGradient id="g9a" x1=".53" y1="1.01" x2=".47" y2="0"><stop stop-color="#136e82"/><stop offset=".5" stop-color="#135899"/><stop offset="1" stop-color="#1338ad"/></linearGradient><linearGradient id="g9b" x1="-.08" y1=".61" x2="1.07" y2=".39"><stop stop-color="#00365f"/><stop offset=".4" stop-color="#00256a"/><stop offset=".6" stop-color="#00186f"/><stop offset=".8" stop-color="#000074"/><stop offset="1" stop-color="#21006f"/></linearGradient><linearGradient id="g9c" x1="-.07" y1=".6" x2="1.06" y2=".41"><stop stop-color="#001b6c"/><stop offset=".24" stop-color="#000072"/><stop offset=".43" stop-color="#1f006e"/><stop offset=".62" stop-color="#2e0069"/><stop offset="1" stop-color="#42005e"/></linearGradient><linearGradient id="g9d" x1="-.09" y1=".66" x2="1.09" y2=".35"><stop stop-color="#2c0070"/><stop offset="1" stop-color="#5a0052"/></linearGradient><linearGradient id="g9e" x1="-.1" y1=".8" x2="1.1" y2=".2"><stop stop-color="#51006c"/><stop offset="1" stop-color="#720047"/></linearGradient><linearGradient id="g9f" x1="-.03" y1=".96" x2="1.03" y2=".04"><stop stop-color="#71006a"/><stop offset="1" stop-color="#8b003e"/></linearGradient><linearGradient id="g9g" x1=".2" y1="1.02" x2=".79" y2="-.02"><stop stop-color="#8b0068"/><stop offset="1" stop-color="#a0003d"/></linearGradient><linearGradient id="g9h" x1=".41" y1=".97" x2=".59" y2=".03"><stop stop-color="#971272"/><stop offset="1" stop-color="#ad1245"/></linearGradient><linearGradient id="g9i" x1=".48" y1="1" x2=".51" y2="0"><stop stop-color="#9d5096"/><stop offset="1" stop-color="#b9506e"/></linearGradient><linearGradient id="g9j" x1=".52" y1="1" x2=".48" y2="0"><stop stop-color="#751998"/><stop offset="1" stop-color="#a01968"/></linearGradient><linearGradient id="g9k" x1=".54" y1="1" x2=".46" y2="0"><stop stop-color="#4702a9"/><stop offset=".5" stop-color="#6f0296"/><stop offset="1" stop-color="#8a027e"/></linearGradient><linearGradient id="g9l" x1=".55" y1="1" x2=".46" y2="0"><stop stop-color="#0031aa"/><stop offset=".12" stop-color="#0021af"/><stop offset=".24" stop-color="#0000b3"/><stop offset=".29" stop-color="#1800b2"/><stop offset=".34" stop-color="#2500b0"/><stop offset=".43" stop-color="#3600ad"/><stop offset=".62" stop-color="#4d00a6"/><stop offset="1" stop-color="#6c0096"/></linearGradient><linearGradient id="g9m" x1=".54" y1="1" x2=".46" y2="0"><stop stop-color="#015894"/><stop offset=".4" stop-color="#013ea5"/><stop offset=".6" stop-color="#012bad"/><stop offset=".7" stop-color="#011db0"/><stop offset=".8" stop-color="#0101b4"/><stop offset=".85" stop-color="#1a01b2"/><stop offset=".9" stop-color="#2701b0"/><stop offset="1" stop-color="#3801ad"/></linearGradient><linearGradient id="g9n" x1=".53" y1="1" x2=".47" y2="0"><stop stop-color="#046f7d"/><stop offset="1" stop-color="#043ba9"/></linearGradient><linearGradient id="g9o" x1=".51" y1="1" x2=".49" y2="0"><stop stop-color="#24826d"/><stop offset="1" stop-color="#24629a"/></linearGradient><linearGradient id="g9p" x1=".44" y1=".99" x2=".56" y2=".01"><stop stop-color="#368c68"/><stop offset="1" stop-color="#36778e"/></linearGradient><linearGradient id="g9q" x1=".33" y1=".92" x2=".67" y2=".08"><stop stop-color="#007d55"/><stop offset="1" stop-color="#006c76"/></linearGradient><linearGradient id="g9r" x1="-.1" y1=".7" x2="1.1" y2=".31"><stop stop-color="#003360"/><stop offset=".36" stop-color="#00236a"/><stop offset=".53" stop-color="#00166f"/><stop offset=".71" stop-color="#000073"/><stop offset=".86" stop-color="#1b0070"/><stop offset="1" stop-color="#28006d"/></linearGradient><linearGradient id="g9s" x1="-.1" y1=".7" x2="1.1" y2=".3"><stop stop-color="#00156e"/><stop offset=".16" stop-color="#000072"/><stop offset=".37" stop-color="#21006d"/><stop offset=".58" stop-color="#310068"/><stop offset="1" stop-color="#46005c"/></linearGradient><linearGradient id="g9t" x1="-.1" y1=".76" x2="1.1" y2=".24"><stop stop-color="#33006f"/><stop offset="1" stop-color="#5e0050"/></linearGradient><linearGradient id="g9u" x1="-.09" y1=".85" x2="1.09" y2=".15"><stop stop-color="#56006b"/><stop offset="1" stop-color="#760046"/></linearGradient><linearGradient id="g9v" x1="-.03" y1=".97" x2="1.03" y2=".04"><stop stop-color="#750069"/><stop offset="1" stop-color="#8f003d"/></linearGradient><linearGradient id="g9w" x1=".25" y1=".97" x2=".75" y2=".02"><stop stop-color="#8e0068"/><stop offset="1" stop-color="#a2003e"/></linearGradient><linearGradient id="g9x" x1=".42" y1=".97" x2=".58" y2=".03"><stop stop-color="#9f3f81"/><stop offset="1" stop-color="#b53f5b"/></linearGradient><linearGradient id="g9y" x1=".02" y1=".96" x2=".98" y2=".03"><stop stop-color="#790079"/><stop offset="1" stop-color="#8c0061"/></linearGradient><linearGradient id="g9z" x1=".4" y1=".96" x2=".6" y2=".04"><stop stop-color="#890583"/><stop offset="1" stop-color="#9b056b"/></linearGradient><linearGradient id="ga0" x1=".51" y1="1" x2=".49" y2="0"><stop stop-color="#bb93c8"/><stop offset="1" stop-color="#ce93b4"/></linearGradient><linearGradient id="ga1" x1=".55" y1="1.01" x2=".45" y2="0"><stop stop-color="#6f39a9"/><stop offset="1" stop-color="#963989"/></linearGradient><linearGradient id="ga2" x1=".57" y1="1" x2=".43" y2="0"><stop stop-color="#2407b1"/><stop offset=".25" stop-color="#4407aa"/><stop offset=".5" stop-color="#5807a2"/><stop offset="1" stop-color="#750790"/></linearGradient><linearGradient id="ga3" x1=".58" y1="1.01" x2=".42" y2="0"><stop stop-color="#01449f"/><stop offset=".27" stop-color="#012fa9"/><stop offset=".41" stop-color="#0120ad"/><stop offset=".55" stop-color="#0101b2"/><stop offset=".6" stop-color="#1901b0"/><stop offset=".66" stop-color="#2601ae"/><stop offset=".77" stop-color="#3701ab"/><stop offset="1" stop-color="#4e01a3"/></linearGradient><linearGradient id="ga4" x1=".58" y1="1" x2=".43" y2="0"><stop stop-color="#016286"/><stop offset=".5" stop-color="#014c9b"/><stop offset="1" stop-color="#0126ac"/></linearGradient><linearGradient id="ga5" x1=".57" y1="1" x2=".43" y2="0"><stop stop-color="#07786c"/><stop offset="1" stop-color="#075598"/></linearGradient><linearGradient id="ga6" x1=".13" y1=".42" x2=".87" y2=".59"><stop stop-color="#002658"/><stop offset=".32" stop-color="#00195f"/><stop offset=".64" stop-color="#000065"/><stop offset=".82" stop-color="#170062"/><stop offset="1" stop-color="#24005f"/></linearGradient><linearGradient id="ga7" x1=".07" y1=".45" x2=".93" y2=".56"><stop stop-color="#00006c"/><stop offset="0" stop-color="#00006c"/><stop offset=".25" stop-color="#1e0067"/><stop offset=".5" stop-color="#2d0062"/><stop offset="1" stop-color="#410057"/></linearGradient><linearGradient id="ga8" x1="-.04" y1=".55" x2="1.04" y2=".45"><stop stop-color="#3b006e"/><stop offset="1" stop-color="#5c0056"/></linearGradient><linearGradient id="ga9" x1="-.1" y1=".76" x2="1.1" y2=".25"><stop stop-color="#5f0073"/><stop offset="1" stop-color="#780059"/></linearGradient><linearGradient id="gaa" x1=".11" y1=".97" x2=".88" y2=".03"><stop stop-color="#7d007a"/><stop offset="1" stop-color="#8f0063"/></linearGradient><linearGradient id="gab" x1=".42" y1=".97" x2=".58" y2=".03"><stop stop-color="#933c90"/><stop offset="1" stop-color="#a53c7a"/></linearGradient><linearGradient id="gac" x1=".52" y1="1" x2=".48" y2="0"><stop stop-color="#a271b4"/><stop offset="1" stop-color="#b9719d"/></linearGradient><linearGradient id="gad" x1=".56" y1="1" x2=".44" y2="0"><stop stop-color="#5c0ba4"/><stop offset="1" stop-color="#8a0b82"/></linearGradient><linearGradient id="gae" x1=".58" y1="1" x2=".43" y2="0"><stop stop-color="#0001b3"/><stop offset="0" stop-color="#0000b3"/><stop offset=".06" stop-color="#1a00b1"/><stop offset=".13" stop-color="#2700af"/><stop offset=".25" stop-color="#3800ac"/><stop offset=".5" stop-color="#5000a4"/><stop offset="1" stop-color="#700093"/></linearGradient><linearGradient id="gaf" x1=".58" y1="1" x2=".42" y2="0"><stop stop-color="#00499c"/><stop offset=".32" stop-color="#0033a7"/><stop offset=".48" stop-color="#0023ac"/><stop offset=".56" stop-color="#0017af"/><stop offset=".64" stop-color="#0000b1"/><stop offset=".73" stop-color="#2100af"/><stop offset=".82" stop-color="#3000ac"/><stop offset="1" stop-color="#4500a6"/></linearGradient><linearGradient id="gag" x1=".58" y1="1" x2=".42" y2="0"><stop stop-color="#006682"/><stop offset=".5" stop-color="#005097"/><stop offset="1" stop-color="#0030a9"/></linearGradient><linearGradient id="gah" x1=".57" y1="1" x2=".43" y2="0"><stop stop-color="#017a67"/><stop offset="1" stop-color="#015894"/></linearGradient><linearGradient id="gai" x1=".55" y1="1" x2=".45" y2="0"><stop stop-color="#238c53"/><stop offset="1" stop-color="#237683"/></linearGradient><linearGradient id="gaj" x1=".47" y1=".99" x2=".53" y2=".01"><stop stop-color="#8cc294"/><stop offset="1" stop-color="#8cb7aa"/></linearGradient><linearGradient id="gak" x1="-.05" y1=".56" x2="1.05" y2=".44"><stop stop-color="#10006c"/><stop offset=".5" stop-color="#330062"/><stop offset="1" stop-color="#450057"/></linearGradient><linearGradient id="gal" x1="-.09" y1=".66" x2="1.09" y2=".35"><stop stop-color="#41006e"/><stop offset="1" stop-color="#600056"/></linearGradient><linearGradient id="gam" x1="-.1" y1=".81" x2="1.1" y2=".19"><stop stop-color="#640074"/><stop offset="1" stop-color="#7c005a"/></linearGradient><linearGradient id="gan" x1=".2" y1=".94" x2=".8" y2=".05"><stop stop-color="#81007b"/><stop offset="1" stop-color="#920065"/></linearGradient><linearGradient id="gao" x1=".43" y1=".98" x2=".57" y2=".02"><stop stop-color="#bb8abb"/><stop offset="1" stop-color="#ca8aab"/></linearGradient><linearGradient id="gap" x1="-.06" y1=".61" x2="1.06" y2=".39"><stop stop-color="#6d007a"/><stop offset="1" stop-color="#79006e"/></linearGradient><linearGradient id="gaq" x1=".44" y1=".98" x2=".56" y2=".02"><stop stop-color="#7f0088"/><stop offset="1" stop-color="#8a007d"/></linearGradient><linearGradient id="gar" x1=".61" y1=".99" x2=".39" y2=".01"><stop stop-color="#761e98"/><stop offset="1" stop-color="#8c1e85"/></linearGradient><linearGradient id="gas" x1=".64" y1=".98" x2=".36" y2=".01"><stop stop-color="#5201a2"/><stop offset="1" stop-color="#78018b"/></linearGradient><linearGradient id="gat" x1=".65" y1=".98" x2=".35" y2=".02"><stop stop-color="#0015ab"/><stop offset=".1" stop-color="#0000ad"/><stop offset=".21" stop-color="#1e00ab"/><stop offset=".33" stop-color="#2d00a8"/><stop offset=".55" stop-color="#4100a3"/><stop offset="1" stop-color="#5b0098"/></linearGradient><linearGradient id="gau" x1=".65" y1=".98" x2=".35" y2=".02"><stop stop-color="#004a93"/><stop offset=".44" stop-color="#0034a0"/><stop offset=".66" stop-color="#0023a6"/><stop offset=".78" stop-color="#0017a8"/><stop offset=".89" stop-color="#0000ab"/><stop offset="1" stop-color="#1f00a8"/></linearGradient><linearGradient id="gav" x1=".65" y1=".98" x2=".35" y2=".02"><stop stop-color="#00657a"/><stop offset="1" stop-color="#00419a"/></linearGradient><linearGradient id="gaw" x1=".24" y1=".4" x2=".75" y2=".6"><stop stop-color="#28005f"/><stop offset="1" stop-color="#420051"/></linearGradient><linearGradient id="gax" x1=".06" y1=".45" x2=".94" y2=".55"><stop stop-color="#4f006d"/><stop offset="1" stop-color="#60005e"/></linearGradient><linearGradient id="gay" x1="-.03" y1=".75" x2="1.03" y2=".25"><stop stop-color="#72007c"/><stop offset="1" stop-color="#7d0071"/></linearGradient><linearGradient id="gaz" x1=".48" y1="1" x2=".51" y2="0"><stop stop-color="#800a8b"/><stop offset="1" stop-color="#8c0a7f"/></linearGradient><linearGradient id="gb0" x1=".63" y1=".99" x2=".38" y2=".01"><stop stop-color="#6f0798"/><stop offset="1" stop-color="#870784"/></linearGradient><linearGradient id="gb1" x1=".65" y1=".98" x2=".35" y2=".02"><stop stop-color="#4a00a3"/><stop offset="1" stop-color="#74008c"/></linearGradient><linearGradient id="gb2" x1=".66" y1=".98" x2=".34" y2=".03"><stop stop-color="#0023a7"/><stop offset=".11" stop-color="#0016aa"/><stop offset=".22" stop-color="#0000ad"/><stop offset=".32" stop-color="#1c00aa"/><stop offset=".42" stop-color="#2a00a8"/><stop offset=".61" stop-color="#3d00a4"/><stop offset="1" stop-color="#55009a"/></linearGradient><linearGradient id="gb3" x1=".66" y1=".97" x2=".34" y2=".03"><stop stop-color="#004f90"/><stop offset=".5" stop-color="#00389e"/><stop offset=".75" stop-color="#0026a5"/><stop offset=".87" stop-color="#0019a8"/><stop offset="1" stop-color="#0001ab"/></linearGradient><linearGradient id="gb4" x1=".66" y1=".97" x2=".34" y2=".03"><stop stop-color="#006876"/><stop offset="1" stop-color="#004796"/></linearGradient><linearGradient id="gb5" x1=".66" y1=".97" x2=".34" y2=".03"><stop stop-color="#007b58"/><stop offset="1" stop-color="#006480"/></linearGradient><linearGradient id="gb6" x1=".65" y1=".98" x2=".35" y2=".02"><stop stop-color="#008935"/><stop offset="1" stop-color="#007967"/></linearGradient><linearGradient id="gb7" x1=".58" y1="1" x2=".42" y2="0"><stop stop-color="#249626"/><stop offset="1" stop-color="#248c53"/></linearGradient><linearGradient id="gb8" x1=".08" y1=".44" x2=".92" y2=".56"><stop stop-color="#2e0061"/><stop offset="1" stop-color="#460052"/></linearGradient><linearGradient id="gb9" x1="-.03" y1=".53" x2="1.03" y2=".47"><stop stop-color="#54006f"/><stop offset="1" stop-color="#650060"/></linearGradient><linearGradient id="gba" x1=".08" y1=".84" x2=".92" y2=".15"><stop stop-color="#76007e"/><stop offset="1" stop-color="#800074"/></linearGradient><linearGradient id="gbb" x1=".52" y1="1" x2=".48" y2="-.01"><stop stop-color="#80178f"/><stop offset="1" stop-color="#8e1781"/></linearGradient><linearGradient id="gbc" x1=".24" y1=".28" x2=".76" y2=".71"><stop stop-color="#590064"/><stop offset="1" stop-color="#5f005e"/></linearGradient><linearGradient id="gbd" x1=".89" y1=".82" x2=".11" y2=".18"><stop stop-color="#660086"/><stop offset="1" stop-color="#750079"/></linearGradient><linearGradient id="gbe" x1=".84" y1=".89" x2=".16" y2=".11"><stop stop-color="#490092"/><stop offset="1" stop-color="#660082"/></linearGradient><linearGradient id="gbf" x1=".82" y1=".91" x2=".19" y2=".08"><stop stop-color="#00129c"/><stop offset=".12" stop-color="#00009e"/><stop offset=".23" stop-color="#17009c"/><stop offset=".34" stop-color="#24009a"/><stop offset=".56" stop-color="#350096"/><stop offset="1" stop-color="#4b008e"/></linearGradient><linearGradient id="gbg" x1=".81" y1=".92" x2=".19" y2=".08"><stop stop-color="#004387"/><stop offset=".5" stop-color="#003092"/><stop offset=".75" stop-color="#002297"/><stop offset="1" stop-color="#00089c"/></linearGradient><linearGradient id="gbh" x1=".81" y1=".92" x2=".19" y2=".08"><stop stop-color="#005c6f"/><stop offset="1" stop-color="#004189"/></linearGradient><linearGradient id="gbi" x1=".33" y1=".39" x2=".66" y2=".61"><stop stop-color="#38004f"/><stop offset="1" stop-color="#430047"/></linearGradient><linearGradient id="gbj" x1=".21" y1=".18" x2=".79" y2=".82"><stop stop-color="#5e0067"/><stop offset="1" stop-color="#630062"/></linearGradient><linearGradient id="gbk" x1=".99" y1=".6" x2=".01" y2=".39"><stop stop-color="#6f007a"/><stop offset="1" stop-color="#760074"/></linearGradient><linearGradient id="gbl" x1=".91" y1=".8" x2=".09" y2=".2"><stop stop-color="#630088"/><stop offset="1" stop-color="#74007a"/></linearGradient><linearGradient id="gbm" x1=".86" y1=".86" x2=".14" y2=".13"><stop stop-color="#430094"/><stop offset="1" stop-color="#630083"/></linearGradient><linearGradient id="gbn" x1=".84" y1=".89" x2=".17" y2=".11"><stop stop-color="#001f99"/><stop offset=".27" stop-color="#00009e"/><stop offset=".45" stop-color="#21009b"/><stop offset=".63" stop-color="#300097"/><stop offset="1" stop-color="#450090"/></linearGradient><linearGradient id="gbo" x1=".82" y1=".9" x2=".18" y2=".1"><stop stop-color="#004783"/><stop offset=".5" stop-color="#00368f"/><stop offset="1" stop-color="#001999"/></linearGradient><linearGradient id="gbp" x1=".83" y1=".89" x2=".17" y2=".11"><stop stop-color="#005f6b"/><stop offset="1" stop-color="#004685"/></linearGradient><linearGradient id="gbq" x1=".85" y1=".86" x2=".15" y2=".14"><stop stop-color="#007050"/><stop offset="1" stop-color="#005f6f"/></linearGradient><linearGradient id="gbr" x1=".89" y1=".81" x2=".11" y2=".19"><stop stop-color="#007c2f"/><stop offset="1" stop-color="#007155"/></linearGradient><linearGradient id="gbs" x1=".99" y1=".59" x2=".01" y2=".41"><stop stop-color="#6f007c"/><stop offset="1" stop-color="#770075"/></linearGradient><linearGradient id="gbt" x1=".74" y1=".31" x2=".26" y2=".69"><stop stop-color="#320037"/><stop offset="1" stop-color="#3a002f"/></linearGradient><linearGradient id="gbu" x1=".77" y1=".39" x2=".23" y2=".6"><stop stop-color="#4f0053"/><stop offset="1" stop-color="#590048"/></linearGradient><linearGradient id="gbv" x1=".99" y1=".48" x2=".02" y2=".51"><stop stop-color="#510068"/><stop offset="1" stop-color="#640056"/></linearGradient><linearGradient id="gbw" x1="1.08" y1=".64" x2="-.08" y2=".36"><stop stop-color="#3e0078"/><stop offset="1" stop-color="#5e0063"/></linearGradient><linearGradient id="gbx" x1="1.1" y1=".75" x2="-.09" y2=".25"><stop stop-color="#000686"/><stop offset=".04" stop-color="#000087"/><stop offset=".16" stop-color="#180085"/><stop offset=".28" stop-color="#250082"/><stop offset=".52" stop-color="#36007d"/><stop offset="1" stop-color="#4c0072"/></linearGradient><linearGradient id="gby" x1="1.09" y1=".79" x2="-.09" y2=".2"><stop stop-color="#003776"/><stop offset=".37" stop-color="#00267f"/><stop offset=".56" stop-color="#001983"/><stop offset=".75" stop-color="#000087"/><stop offset=".87" stop-color="#1a0085"/><stop offset="1" stop-color="#270082"/></linearGradient><linearGradient id="gbz" x1="1.09" y1=".78" x2="-.08" y2=".22"><stop stop-color="#004d61"/><stop offset="1" stop-color="#002b7d"/></linearGradient><linearGradient id="gc0" x1="1.09" y1=".7" x2="-.08" y2=".29"><stop stop-color="#005b49"/><stop offset="1" stop-color="#00456a"/></linearGradient><linearGradient id="gc1" x1=".71" y1=".22" x2=".3" y2=".76"><stop stop-color="#38003c"/><stop offset="1" stop-color="#400034"/></linearGradient><linearGradient id="gc2" x1=".77" y1=".37" x2=".23" y2=".62"><stop stop-color="#510056"/><stop offset="1" stop-color="#5c004b"/></linearGradient><linearGradient id="gc3" x1=".95" y1=".45" x2=".05" y2=".55"><stop stop-color="#50006a"/><stop offset="1" stop-color="#640058"/></linearGradient><linearGradient id="gc4" x1="1.05" y1=".57" x2="-.05" y2=".42"><stop stop-color="#3a007b"/><stop offset="1" stop-color="#5c0066"/></linearGradient><linearGradient id="gc5" x1="1.08" y1=".67" x2="-.07" y2=".32"><stop stop-color="#001484"/><stop offset=".15" stop-color="#000087"/><stop offset=".25" stop-color="#160085"/><stop offset=".36" stop-color="#230083"/><stop offset=".57" stop-color="#33007e"/><stop offset="1" stop-color="#480075"/></linearGradient><linearGradient id="gc6" x1="1.08" y1=".71" x2="-.07" y2=".28"><stop stop-color="#003b73"/><stop offset=".43" stop-color="#00297e"/><stop offset=".64" stop-color="#001b83"/><stop offset=".86" stop-color="#000087"/><stop offset="1" stop-color="#1c0084"/></linearGradient><linearGradient id="gc7" x1="1.07" y1=".69" x2="-.07" y2=".31"><stop stop-color="#00505e"/><stop offset="1" stop-color="#00307a"/></linearGradient><linearGradient id="gc8" x1="1.06" y1=".6" x2="-.05" y2=".39"><stop stop-color="#005d45"/><stop offset="1" stop-color="#004866"/></linearGradient><linearGradient id="gc9" x1=".99" y1=".48" x2=".02" y2=".52"><stop stop-color="#006429"/><stop offset="1" stop-color="#005550"/></linearGradient><linearGradient id="gca" x1=".67" y1=".25" x2=".34" y2=".75"><stop stop-color="#3e0041"/><stop offset="1" stop-color="#460038"/></linearGradient><linearGradient id="gcb" x1=".74" y1=".35" x2=".26" y2=".64"><stop stop-color="#52005a"/><stop offset="1" stop-color="#5e004d"/></linearGradient><linearGradient id="gcc" x1=".56" y1=".46" x2=".45" y2=".55"><stop stop-color="#2d0026"/><stop offset="1" stop-color="#34001a"/></linearGradient><linearGradient id="gcd" x1=".77" y1=".4" x2=".24" y2=".61"><stop stop-color="#3f0043"/><stop offset="1" stop-color="#4f002e"/></linearGradient><linearGradient id="gce" x1=".95" y1=".46" x2=".05" y2=".54"><stop stop-color="#3a0058"/><stop offset="1" stop-color="#540040"/></linearGradient><linearGradient id="gcf" x1="1.05" y1=".56" x2="-.04" y2=".45"><stop stop-color="#1e006a"/><stop offset=".5" stop-color="#3a005f"/><stop offset="1" stop-color="#4c0052"/></linearGradient><linearGradient id="gcg" x1="1.07" y1=".6" x2="-.06" y2=".41"><stop stop-color="#002267"/><stop offset=".39" stop-color="#000070"/><stop offset=".54" stop-color="#1a006d"/><stop offset=".69" stop-color="#27006a"/><stop offset="1" stop-color="#380062"/></linearGradient><linearGradient id="gch" x1="1.06" y1=".58" x2="-.06" y2=".43"><stop stop-color="#003857"/><stop offset=".49" stop-color="#002765"/><stop offset=".74" stop-color="#00196b"/><stop offset=".98" stop-color="#000070"/><stop offset="1" stop-color="#030070"/></linearGradient><linearGradient id="gci" x1="1.01" y1=".51" x2="-.01" y2=".49"><stop stop-color="#044"/><stop offset="1" stop-color="#002960"/></linearGradient><linearGradient id="gcj" x1=".56" y1=".45" x2=".44" y2=".55"><stop stop-color="#31002b"/><stop offset="1" stop-color="#3a001e"/></linearGradient><linearGradient id="gck" x1=".71" y1=".4" x2=".3" y2=".6"><stop stop-color="#3f0046"/><stop offset="1" stop-color="#510031"/></linearGradient><linearGradient id="gcl" x1=".86" y1=".42" x2=".14" y2=".59"><stop stop-color="#37005b"/><stop offset="1" stop-color="#540043"/></linearGradient><linearGradient id="gcm" x1=".96" y1=".47" x2=".05" y2=".54"><stop stop-color="#15006c"/><stop offset=".5" stop-color="#370061"/><stop offset="1" stop-color="#4a0055"/></linearGradient><linearGradient id="gcn" x1=".99" y1=".49" x2=".02" y2=".51"><stop stop-color="#002665"/><stop offset=".24" stop-color="#00196b"/><stop offset=".48" stop-color="#000070"/><stop offset=".61" stop-color="#17006e"/><stop offset=".74" stop-color="#24006b"/><stop offset="1" stop-color="#340065"/></linearGradient><linearGradient id="gco" x1=".97" y1=".47" x2=".04" y2=".54"><stop stop-color="#003b55"/><stop offset=".5" stop-color="#002a62"/><stop offset="1" stop-color="#000a6e"/></linearGradient><linearGradient id="gcp" x1=".89" y1=".43" x2=".11" y2=".58"><stop stop-color="#004541"/><stop offset="1" stop-color="#002c5d"/></linearGradient><linearGradient id="gcq" x1=".78" y1=".4" x2=".22" y2=".61"><stop stop-color="#00462c"/><stop offset="1" stop-color="#003649"/></linearGradient><linearGradient id="gcr" x1=".64" y1=".84" x2=".36" y2=".17"><stop stop-color="#340050"/><stop offset="1" stop-color="#4c003a"/></linearGradient><linearGradient id="gcs" x1=".39" y1="1.03" x2=".61" y2="-.03"><stop stop-color="#350039"/><stop offset="1" stop-color="#430027"/></linearGradient><linearGradient id="gct" x1=".48" y1=".53" x2=".53" y2=".48"><stop stop-color="#150011"/><stop offset="1" stop-color="#19000a"/></linearGradient><linearGradient id="gcu" x1=".55" y1=".46" x2=".46" y2=".54"><stop stop-color="#350030"/><stop offset="1" stop-color="#3f0021"/></linearGradient><linearGradient id="gcv" x1=".62" y1=".43" x2=".39" y2=".58"><stop stop-color="#2d0021"/><stop offset="1" stop-color="#380007"/></linearGradient><linearGradient id="gcw" x1=".8" y1=".4" x2=".21" y2=".6"><stop stop-color="#36003b"/><stop offset="1" stop-color="#4a001d"/></linearGradient><linearGradient id="gcx" x1=".92" y1=".44" x2=".09" y2=".57"><stop stop-color="#2c004e"/><stop offset="1" stop-color="#4a0033"/></linearGradient><linearGradient id="gcy" x1=".97" y1=".48" x2=".03" y2=".53"><stop stop-color="#02005d"/><stop offset=".25" stop-color="#1e0058"/><stop offset=".5" stop-color="#2c0052"/><stop offset="1" stop-color="#400045"/></linearGradient><linearGradient id="gcz" x1=".96" y1=".46" x2=".05" y2=".54"><stop stop-color="#002251"/><stop offset=".51" stop-color="#00005d"/><stop offset=".76" stop-color="#1c0058"/><stop offset="1" stop-color="#2b0052"/></linearGradient><linearGradient id="gd0" x1=".88" y1=".42" x2=".13" y2=".58"><stop stop-color="#002d41"/><stop offset=".5" stop-color="#001f4d"/><stop offset="1" stop-color="#000457"/></linearGradient><linearGradient id="gd1" x1=".75" y1=".4" x2=".26" y2=".61"><stop stop-color="#002d2e"/><stop offset="1" stop-color="#001942"/></linearGradient><linearGradient id="gd2" x1=".56" y1=".45" x2=".44" y2=".55"><stop stop-color="#300025"/><stop offset="1" stop-color="#3c000a"/></linearGradient><linearGradient id="gd3" x1=".68" y1=".41" x2=".32" y2=".6"><stop stop-color="#36003e"/><stop offset="1" stop-color="#4a0021"/></linearGradient><linearGradient id="gd4" x1=".78" y1=".4" x2=".23" y2=".61"><stop stop-color="#290051"/><stop offset="1" stop-color="#490036"/></linearGradient><linearGradient id="gd5" x1=".82" y1=".41" x2=".19" y2=".6"><stop stop-color="#00075c"/><stop offset=".07" stop-color="#00005e"/><stop offset=".3" stop-color="#1c0059"/><stop offset=".53" stop-color="#2a0053"/><stop offset="1" stop-color="#3d0048"/></linearGradient><linearGradient id="gd6" x1=".79" y1=".4" x2=".21" y2=".61"><stop stop-color="#00244f"/><stop offset=".3" stop-color="#001856"/><stop offset=".59" stop-color="#00005c"/><stop offset=".8" stop-color="#190058"/><stop offset="1" stop-color="#260054"/></linearGradient><linearGradient id="gd7" x1=".72" y1=".4" x2=".28" y2=".61"><stop stop-color="#002e3e"/><stop offset="1" stop-color="#000a54"/></linearGradient><linearGradient id="gd8" x1=".62" y1=".42" x2=".38" y2=".58"><stop stop-color="#002c2b"/><stop offset="1" stop-color="#001a3e"/></linearGradient><linearGradient id="gd9" x1=".32" y1="1.04" x2=".68" y2="-.03"><stop stop-color="#4d003b"/><stop offset=".5" stop-color="#56002b"/><stop offset="1" stop-color="#5e0012"/></linearGradient><linearGradient id="gda" x1=".4" y1=".67" x2=".61" y2=".33"><stop stop-color="#3e0024"/><stop offset="1" stop-color="#480005"/></linearGradient><linearGradient id="gdb" x1=".56" y1=".46" x2=".45" y2=".55"><stop stop-color="#1c0007"/><stop offset=".45" stop-color="#1f0000"/><stop offset="1" stop-color="#1f0900"/></linearGradient><linearGradient id="gdc" x1=".72" y1=".4" x2=".28" y2=".61"><stop stop-color="#350023"/><stop offset=".4" stop-color="#3b0017"/><stop offset=".8" stop-color="#410000"/><stop offset="1" stop-color="#410f00"/></linearGradient><linearGradient id="gdd" x1=".85" y1=".41" x2=".16" y2=".59"><stop stop-color="#340039"/><stop offset="1" stop-color="#4a0013"/></linearGradient><linearGradient id="gde" x1=".91" y1=".44" x2=".1" y2=".57"><stop stop-color="#250049"/><stop offset="1" stop-color="#45002d"/></linearGradient><linearGradient id="gdf" x1=".89" y1=".43" x2=".11" y2=".58"><stop stop-color="#000351"/><stop offset=".04" stop-color="#000052"/><stop offset=".28" stop-color="#19004d"/><stop offset=".52" stop-color="#260048"/><stop offset="1" stop-color="#37003c"/></linearGradient><linearGradient id="gdg" x1=".81" y1=".4" x2=".2" y2=".6"><stop stop-color="#001942"/><stop offset=".5" stop-color="#00004b"/><stop offset="1" stop-color="#220042"/></linearGradient><linearGradient id="gdh" x1=".68" y1=".41" x2=".33" y2=".6"><stop stop-color="#001a2d"/><stop offset=".96" stop-color="#00003b"/><stop offset="1" stop-color="#02003b"/></linearGradient><linearGradient id="gdi" x1=".51" y1=".5" x2=".5" y2=".51"><stop stop-color="#23000c"/><stop offset=".5" stop-color="#270000"/><stop offset="1" stop-color="#270c00"/></linearGradient><linearGradient id="gdj" x1=".61" y1=".43" x2=".4" y2=".58"><stop stop-color="#360027"/><stop offset=".43" stop-color="#3d001a"/><stop offset=".86" stop-color="#400"/><stop offset="1" stop-color="#440c00"/></linearGradient><linearGradient id="gdk" x1=".69" y1=".41" x2=".32" y2=".6"><stop stop-color="#33003c"/><stop offset="1" stop-color="#4a0018"/></linearGradient><linearGradient id="gdl" x1=".72" y1=".4" x2=".29" y2=".61"><stop stop-color="#21004b"/><stop offset="1" stop-color="#430030"/></linearGradient><linearGradient id="gdm" x1=".71" y1=".4" x2=".29" y2=".6"><stop stop-color="#00094f"/><stop offset=".11" stop-color="#000051"/><stop offset=".33" stop-color="#17004d"/><stop offset=".55" stop-color="#240048"/><stop offset="1" stop-color="#34003e"/></linearGradient><linearGradient id="gdn" x1=".65" y1=".42" x2=".36" y2=".59"><stop stop-color="#001b3f"/><stop offset=".57" stop-color="#00004a"/><stop offset="1" stop-color="#1e0042"/></linearGradient><linearGradient id="gdo" x1=".56" y1=".46" x2=".45" y2=".55"><stop stop-color="#001929"/><stop offset="1" stop-color="#000137"/></linearGradient><linearGradient id="gdp" x1=".33" y1="1.04" x2=".68" y2="-.03"><stop stop-color="#5f0028"/><stop offset=".23" stop-color="#63001a"/><stop offset=".45" stop-color="#670000"/><stop offset=".73" stop-color="#671f00"/><stop offset="1" stop-color="#672d00"/></linearGradient><linearGradient id="gdq" x1=".38" y1=".72" x2=".63" y2=".28"><stop stop-color="#51000e"/><stop offset=".19" stop-color="#540000"/><stop offset=".6" stop-color="#541900"/><stop offset="1" stop-color="#542700"/></linearGradient><linearGradient id="gdr" x1=".42" y1=".62" x2=".58" y2=".38"><stop stop-color="#2e0007"/><stop offset=".26" stop-color="#300000"/><stop offset="1" stop-color="#301400"/></linearGradient><linearGradient id="gds" x1=".56" y1=".46" x2=".44" y2=".55"><stop stop-color="#1f0400"/><stop offset="1" stop-color="#1f1200"/></linearGradient><linearGradient id="gdt" x1=".73" y1=".4" x2=".28" y2=".61"><stop stop-color="#3e000f"/><stop offset=".22" stop-color="#410000"/><stop offset=".61" stop-color="#411800"/><stop offset="1" stop-color="#412400"/></linearGradient><linearGradient id="gdu" x1=".85" y1=".41" x2=".15" y2=".59"><stop stop-color="#41002a"/><stop offset=".34" stop-color="#48001c"/><stop offset=".67" stop-color="#4e0000"/><stop offset="1" stop-color="#4e1d00"/></linearGradient><linearGradient id="gdv" x1=".91" y1=".44" x2=".1" y2=".57"><stop stop-color="#38003d"/><stop offset=".5" stop-color="#45002d"/><stop offset="1" stop-color="#500011"/></linearGradient><linearGradient id="gdw" x1=".89" y1=".43" x2=".11" y2=".58"><stop stop-color="#250048"/><stop offset="1" stop-color="#44002c"/></linearGradient><linearGradient id="gdx" x1=".81" y1=".4" x2=".2" y2=".6"><stop stop-color="#03004b"/><stop offset=".5" stop-color="#230042"/><stop offset="1" stop-color="#320037"/></linearGradient><linearGradient id="gdy" x1=".68" y1=".41" x2=".33" y2=".6"><stop stop-color="#000c36"/><stop offset=".36" stop-color="#00003b"/><stop offset="1" stop-color="#1b0033"/></linearGradient><linearGradient id="gdz" x1=".6" y1=".43" x2=".41" y2=".57"><stop stop-color="#400014"/><stop offset=".28" stop-color="#400"/><stop offset=".64" stop-color="#441800"/><stop offset="1" stop-color="#442500"/></linearGradient><linearGradient id="ge0" x1=".69" y1=".41" x2=".32" y2=".6"><stop stop-color="#40002d"/><stop offset=".37" stop-color="#48001e"/><stop offset=".74" stop-color="#4f0000"/><stop offset="1" stop-color="#4f1900"/></linearGradient><linearGradient id="ge1" x1=".73" y1=".4" x2=".27" y2=".61"><stop stop-color="#35003f"/><stop offset="1" stop-color="#4e0017"/></linearGradient><linearGradient id="ge2" x1=".71" y1=".4" x2=".29" y2=".61"><stop stop-color="#210049"/><stop offset="1" stop-color="#42002f"/></linearGradient><linearGradient id="ge3" x1=".64" y1=".42" x2=".37" y2=".59"><stop stop-color="#000249"/><stop offset=".03" stop-color="#00004a"/><stop offset=".51" stop-color="#200041"/><stop offset="1" stop-color="#2f0038"/></linearGradient><linearGradient id="ge4" x1=".56" y1=".46" x2=".45" y2=".55"><stop stop-color="#000c32"/><stop offset=".41" stop-color="#000037"/><stop offset="1" stop-color="#170030"/></linearGradient><linearGradient id="ge5" x1=".38" y1=".73" x2=".63" y2=".27"><stop stop-color="#542400"/><stop offset="1" stop-color="#543a00"/></linearGradient><linearGradient id="ge6" x1=".42" y1=".63" x2=".59" y2=".38"><stop stop-color="#301000"/><stop offset="1" stop-color="#302000"/></linearGradient><linearGradient id="ge7" x1=".63" y1=".42" x2=".38" y2=".58"><stop stop-color="#391f00"/><stop offset="1" stop-color="#392e00"/></linearGradient><linearGradient id="ge8" x1=".81" y1=".4" x2=".19" y2=".6"><stop stop-color="#501e00"/><stop offset="1" stop-color="#503c00"/></linearGradient><linearGradient id="ge9" x1=".94" y1=".46" x2=".06" y2=".55"><stop stop-color="#570014"/><stop offset=".16" stop-color="#5a0000"/><stop offset=".37" stop-color="#5a1900"/><stop offset=".58" stop-color="#5a2600"/><stop offset="1" stop-color="#5a3800"/></linearGradient><linearGradient id="gea" x1=".99" y1=".49" x2=".01" y2=".51"><stop stop-color="#4e0034"/><stop offset=".34" stop-color="#560023"/><stop offset=".51" stop-color="#5a0017"/><stop offset=".68" stop-color="#5d0000"/><stop offset=".84" stop-color="#5d1700"/><stop offset="1" stop-color="#5d2300"/></linearGradient><linearGradient id="geb" x1=".98" y1=".48" x2=".03" y2=".53"><stop stop-color="#3f0045"/><stop offset="1" stop-color="#59001a"/></linearGradient><linearGradient id="gec" x1=".9" y1=".43" x2=".1" y2=".57"><stop stop-color="#2b004c"/><stop offset="1" stop-color="#480032"/></linearGradient><linearGradient id="ged" x1=".76" y1=".4" x2=".25" y2=".61"><stop stop-color="#140048"/><stop offset="1" stop-color="#330037"/></linearGradient><linearGradient id="gee" x1=".6" y1=".44" x2=".41" y2=".57"><stop stop-color="#01002d"/><stop offset="1" stop-color="#170025"/></linearGradient><linearGradient id="gef" x1=".56" y1=".45" x2=".44" y2=".55"><stop stop-color="#3e2100"/><stop offset="1" stop-color="#3e3200"/></linearGradient><linearGradient id="geg" x1=".69" y1=".41" x2=".32" y2=".6"><stop stop-color="#521b00"/><stop offset="1" stop-color="#523c00"/></linearGradient><linearGradient id="geh" x1=".79" y1=".4" x2=".21" y2=".61"><stop stop-color="#56001a"/><stop offset=".24" stop-color="#5b0000"/><stop offset=".43" stop-color="#5b1800"/><stop offset=".62" stop-color="#5b2500"/><stop offset="1" stop-color="#5b3600"/></linearGradient><linearGradient id="gei" x1=".84" y1=".41" x2=".17" y2=".6"><stop stop-color="#4c0037"/><stop offset=".38" stop-color="#550026"/><stop offset=".57" stop-color="#5a0019"/><stop offset=".76" stop-color="#5e0000"/><stop offset="1" stop-color="#5e1e00"/></linearGradient><linearGradient id="gej" x1=".82" y1=".41" x2=".19" y2=".6"><stop stop-color="#3c0047"/><stop offset="1" stop-color="#560020"/></linearGradient><linearGradient id="gek" x1=".73" y1=".4" x2=".27" y2=".61"><stop stop-color="#28004c"/><stop offset="1" stop-color="#450034"/></linearGradient><linearGradient id="gel" x1=".63" y1=".42" x2=".38" y2=".58"><stop stop-color="#100046"/><stop offset="1" stop-color="#2f0036"/></linearGradient><linearGradient id="gem" x1=".53" y1=".48" x2=".47" y2=".53"><stop stop-color="#000025"/><stop offset="1" stop-color="#11001e"/></linearGradient><linearGradient id="gen" x1=".55" y1=".46" x2=".45" y2=".54"><stop stop-color="#3c3100"/><stop offset="1" stop-color="#3c3800"/></linearGradient><linearGradient id="geo" x1=".78" y1=".4" x2=".23" y2=".61"><stop stop-color="#5b4500"/><stop offset="1" stop-color="#5b5400"/></linearGradient><linearGradient id="gep" x1=".98" y1=".48" x2=".03" y2=".53"><stop stop-color="#694200"/><stop offset="1" stop-color="#695a00"/></linearGradient><linearGradient id="geq" x1="1.07" y1=".59" x2="-.06" y2=".42"><stop stop-color="#6e2b00"/><stop offset="1" stop-color="#6e5300"/></linearGradient><linearGradient id="ger" x1="1.09" y1=".63" x2="-.08" y2=".37"><stop stop-color="#6b0021"/><stop offset=".24" stop-color="#700000"/><stop offset=".43" stop-color="#701e00"/><stop offset=".62" stop-color="#702d00"/><stop offset="1" stop-color="#704100"/></linearGradient><linearGradient id="ges" x1="1.08" y1=".62" x2="-.07" y2=".39"><stop stop-color="#5d0041"/><stop offset=".42" stop-color="#67002e"/><stop offset=".62" stop-color="#6c001f"/><stop offset=".83" stop-color="#700000"/><stop offset="1" stop-color="#701c00"/></linearGradient><linearGradient id="get" x1="1.03" y1=".54" x2="-.03" y2=".47"><stop stop-color="#4b0051"/><stop offset="1" stop-color="#64002d"/></linearGradient><linearGradient id="geu" x1=".91" y1=".44" x2=".09" y2=".57"><stop stop-color="#390055"/><stop offset="1" stop-color="#51003f"/></linearGradient><linearGradient id="gev" x1=".73" y1=".4" x2=".27" y2=".6"><stop stop-color="#27004b"/><stop offset="1" stop-color="#3b003e"/></linearGradient><linearGradient id="gew" x1=".56" y1=".46" x2=".45" y2=".55"><stop stop-color="#110026"/><stop offset="1" stop-color="#190021"/></linearGradient><linearGradient id="gex" x1=".56" y1=".46" x2=".45" y2=".55"><stop stop-color="#433600"/><stop offset="1" stop-color="#433e00"/></linearGradient><linearGradient id="gey" x1=".72" y1=".4" x2=".29" y2=".6"><stop stop-color="#5e4600"/><stop offset="1" stop-color="#5e5600"/></linearGradient><linearGradient id="gez" x1=".88" y1=".42" x2=".13" y2=".59"><stop stop-color="#6a3f00"/><stop offset="1" stop-color="#6a5a00"/></linearGradient><linearGradient id="gf0" x1=".98" y1=".48" x2=".03" y2=".53"><stop stop-color="#6f2500"/><stop offset="1" stop-color="#6f5100"/></linearGradient><linearGradient id="gf1" x1="1.01" y1=".51" x2="0" y2=".5"><stop stop-color="#690028"/><stop offset=".16" stop-color="#6d001b"/><stop offset=".33" stop-color="#700000"/><stop offset=".49" stop-color="#701c00"/><stop offset=".66" stop-color="#702a00"/><stop offset="1" stop-color="#703d00"/></linearGradient><linearGradient id="gf2" x1=".99" y1=".49" x2=".02" y2=".52"><stop stop-color="#5a0045"/><stop offset=".46" stop-color="#660030"/><stop offset=".69" stop-color="#6b0020"/><stop offset=".92" stop-color="#700000"/><stop offset="1" stop-color="#701000"/></linearGradient><linearGradient id="gf3" x1=".91" y1=".44" x2=".09" y2=".57"><stop stop-color="#490052"/><stop offset="1" stop-color="#610031"/></linearGradient><linearGradient id="gf4" x1=".8" y1=".4" x2=".21" y2=".61"><stop stop-color="#360055"/><stop offset="1" stop-color="#4e0040"/></linearGradient><linearGradient id="gf5" x1=".66" y1=".41" x2=".35" y2=".59"><stop stop-color="#250048"/><stop offset="1" stop-color="#37003c"/></linearGradient><linearGradient id="gf6" x1=".55" y1=".46" x2=".46" y2=".54"><stop stop-color="#0a001a"/><stop offset="1" stop-color="#100017"/></linearGradient><linearGradient id="gf7" x1=".54" y1=".47" x2=".47" y2=".54"><stop stop-color="#483a00"/><stop offset="1" stop-color="#484400"/></linearGradient><linearGradient id="gf8" x1=".55" y1=".45" x2=".45" y2=".55"><stop stop-color="#4b4400"/><stop offset="1" stop-color="#4b4a00"/></linearGradient><linearGradient id="gf9" x1=".77" y1=".4" x2=".23" y2=".61"><stop stop-color="#716800"/><stop offset="1" stop-color="#717000"/></linearGradient><linearGradient id="gfa" x1="1.01" y1=".51" x2="0" y2=".5"><stop stop-color="#817000"/><stop offset="1" stop-color="#817e00"/></linearGradient><linearGradient id="gfb" x1="1.1" y1=".68" x2="-.09" y2=".33"><stop stop-color="#866600"/><stop offset="1" stop-color="#867b00"/></linearGradient><linearGradient id="gfc" x1="1.1" y1=".78" x2="-.1" y2=".22"><stop stop-color="#874f00"/><stop offset="1" stop-color="#876f00"/></linearGradient><linearGradient id="gfd" x1="1.09" y1=".82" x2="-.09" y2=".17"><stop stop-color="#872400"/><stop offset=".5" stop-color="#874600"/><stop offset="1" stop-color="#875b00"/></linearGradient><linearGradient id="gfe" x1="1.09" y1=".81" x2="-.09" y2=".19"><stop stop-color="#7c0039"/><stop offset=".25" stop-color="#820027"/><stop offset=".38" stop-color="#85001a"/><stop offset=".51" stop-color="#870000"/><stop offset=".63" stop-color="#871a00"/><stop offset=".75" stop-color="#872800"/><stop offset="1" stop-color="#873a00"/></linearGradient><linearGradient id="gff" x1="1.09" y1=".73" x2="-.09" y2=".26"><stop stop-color="#6c0055"/><stop offset=".5" stop-color="#780042"/><stop offset="1" stop-color="#820024"/></linearGradient><linearGradient id="gfg" x1="1.06" y1=".6" x2="-.06" y2=".4"><stop stop-color="#5e0063"/><stop offset="1" stop-color="#720049"/></linearGradient><linearGradient id="gfh" x1=".94" y1=".44" x2=".06" y2=".55"><stop stop-color="#500064"/><stop offset="1" stop-color="#610055"/></linearGradient><linearGradient id="gfi" x1=".73" y1=".36" x2=".28" y2=".63"><stop stop-color="#420053"/><stop offset="1" stop-color="#4a004c"/></linearGradient><linearGradient id="gfj" x1=".34" y1=".05" x2=".67" y2=".95"><stop stop-color="#24002f"/><stop offset="1" stop-color="#2c0027"/></linearGradient><linearGradient id="gfk" x1=".72" y1=".26" x2=".28" y2=".72"><stop stop-color="#534c00"/><stop offset="1" stop-color="#535200"/></linearGradient><linearGradient id="gfl" x1=".78" y1=".38" x2=".23" y2=".61"><stop stop-color="#756b00"/><stop offset="1" stop-color="#757300"/></linearGradient><linearGradient id="gfm" x1=".97" y1=".46" x2=".03" y2=".53"><stop stop-color="#826f00"/><stop offset="1" stop-color="#827e00"/></linearGradient><linearGradient id="gfn" x1="1.07" y1=".6" x2="-.06" y2=".39"><stop stop-color="#866300"/><stop offset="1" stop-color="#867a00"/></linearGradient><linearGradient id="gfo" x1="1.09" y1=".7" x2="-.08" y2=".29"><stop stop-color="#874b00"/><stop offset="1" stop-color="#876d00"/></linearGradient><linearGradient id="gfp" x1="1.08" y1=".74" x2="-.08" y2=".26"><stop stop-color="#871600"/><stop offset=".25" stop-color="#873000"/><stop offset=".5" stop-color="#874000"/><stop offset="1" stop-color="#875700"/></linearGradient><linearGradient id="gfq" x1="1.08" y1=".71" x2="-.07" y2=".29"><stop stop-color="#7a003f"/><stop offset=".31" stop-color="#81002b"/><stop offset=".46" stop-color="#84001d"/><stop offset=".62" stop-color="#870000"/><stop offset=".71" stop-color="#871600"/><stop offset=".81" stop-color="#872200"/><stop offset="1" stop-color="#873300"/></linearGradient><linearGradient id="gfr" x1="1.06" y1=".62" x2="-.06" y2=".37"><stop stop-color="#6a0058"/><stop offset="1" stop-color="#80002d"/></linearGradient><linearGradient id="gfs" x1="1" y1=".5" x2="0" y2=".5"><stop stop-color="#5c0064"/><stop offset="1" stop-color="#70004c"/></linearGradient><linearGradient id="gft" x1=".86" y1=".38" x2=".15" y2=".61"><stop stop-color="#4e0063"/><stop offset="1" stop-color="#5e0055"/></linearGradient><linearGradient id="gfu" x1=".69" y1=".32" x2=".32" y2=".68"><stop stop-color="#3e004f"/><stop offset="1" stop-color="#460049"/></linearGradient><linearGradient id="gfv" x1=".26" y1=".05" x2=".74" y2=".95"><stop stop-color="#1d0026"/><stop offset="1" stop-color="#25001f"/></linearGradient><linearGradient id="gfw" x1=".56" y1=".56" x2=".44" y2=".44"><stop stop-color="#4f2c00"/><stop offset="1" stop-color="#4f4000"/></linearGradient><linearGradient id="gfx" x1=".67" y1=".26" x2=".33" y2=".73"><stop stop-color="#595200"/><stop offset="1" stop-color="#595800"/></linearGradient><linearGradient id="gfy" x1=".75" y1=".36" x2=".26" y2=".64"><stop stop-color="#786d00"/><stop offset="1" stop-color="#787600"/></linearGradient><linearGradient id="gfz" x1=".88" y1=".83" x2=".12" y2=".16"><stop stop-color="#a49700"/><stop offset="1" stop-color="#a4a100"/></linearGradient><linearGradient id="gg0" x1=".83" y1=".9" x2=".17" y2=".1"><stop stop-color="#a18500"/><stop offset="1" stop-color="#a19600"/></linearGradient><linearGradient id="gg1" x1=".81" y1=".92" x2=".2" y2=".08"><stop stop-color="#9e6b00"/><stop offset="1" stop-color="#9e8400"/></linearGradient><linearGradient id="gg2" x1=".8" y1=".93" x2=".2" y2=".07"><stop stop-color="#9d4400"/><stop offset="1" stop-color="#9d6c00"/></linearGradient><linearGradient id="gg3" x1=".81" y1=".92" x2=".2" y2=".07"><stop stop-color="#98002c"/><stop offset=".15" stop-color="#9a001d"/><stop offset=".29" stop-color="#9d0000"/><stop offset=".47" stop-color="#9d2200"/><stop offset=".65" stop-color="#9d3200"/><stop offset="1" stop-color="#9d4800"/></linearGradient><linearGradient id="gg4" x1=".82" y1=".9" x2=".18" y2=".1"><stop stop-color="#890058"/><stop offset=".5" stop-color="#920044"/><stop offset="1" stop-color="#9b0026"/></linearGradient><linearGradient id="gg5" x1=".85" y1=".86" x2=".15" y2=".14"><stop stop-color="#7d006e"/><stop offset="1" stop-color="#8d0057"/></linearGradient><linearGradient id="gg6" x1=".91" y1=".77" x2=".1" y2=".22"><stop stop-color="#750079"/><stop offset="1" stop-color="#80006d"/></linearGradient><linearGradient id="gg7" x1=".25" y1=".34" x2=".75" y2=".66"><stop stop-color="#540058"/><stop offset="1" stop-color="#5c0051"/></linearGradient><linearGradient id="gg8" x1=".44" y1=".45" x2=".56" y2=".55"><stop stop-color="#3b0035"/><stop offset="1" stop-color="#43002a"/></linearGradient><linearGradient id="gg9" x1=".38" y1=".41" x2=".62" y2=".59"><stop stop-color="#615800"/><stop offset="1" stop-color="#615f00"/></linearGradient><linearGradient id="gga" x1=".9" y1=".81" x2=".11" y2=".19"><stop stop-color="#a49500"/><stop offset="1" stop-color="#a4a000"/></linearGradient><linearGradient id="ggb" x1=".85" y1=".87" x2=".15" y2=".12"><stop stop-color="#a18100"/><stop offset="1" stop-color="#a19400"/></linearGradient><linearGradient id="ggc" x1=".83" y1=".9" x2=".18" y2=".1"><stop stop-color="#9e6600"/><stop offset="1" stop-color="#9e8100"/></linearGradient><linearGradient id="ggd" x1=".82" y1=".91" x2=".18" y2=".09"><stop stop-color="#9d3c00"/><stop offset="1" stop-color="#9d6700"/></linearGradient><linearGradient id="gge" x1=".83" y1=".9" x2=".18" y2=".1"><stop stop-color="#950035"/><stop offset=".21" stop-color="#990024"/><stop offset=".32" stop-color="#9b0018"/><stop offset=".43" stop-color="#9d0000"/><stop offset=".57" stop-color="#9d1e00"/><stop offset=".71" stop-color="#9d2c00"/><stop offset="1" stop-color="#9d4000"/></linearGradient><linearGradient id="ggf" x1=".85" y1=".87" x2=".16" y2=".13"><stop stop-color="#87005c"/><stop offset="1" stop-color="#990031"/></linearGradient><linearGradient id="ggg" x1=".88" y1=".82" x2=".12" y2=".18"><stop stop-color="#7b0071"/><stop offset="1" stop-color="#8b005b"/></linearGradient><linearGradient id="ggh" x1=".94" y1=".71" x2=".06" y2=".29"><stop stop-color="#74007a"/><stop offset="1" stop-color="#7e006f"/></linearGradient><linearGradient id="ggi" x1=".19" y1=".33" x2=".81" y2=".67"><stop stop-color="#500053"/><stop offset="1" stop-color="#58004b"/></linearGradient><linearGradient id="ggj" x1=".32" y1=".39" x2=".68" y2=".61"><stop stop-color="#370030"/><stop offset="1" stop-color="#3f0024"/></linearGradient><linearGradient id="ggk" x1=".4" y1=".43" x2=".61" y2=".58"><stop stop-color="#1c000e"/><stop offset="1" stop-color="#210003"/></linearGradient><linearGradient id="ggl" x1=".4" y1=".43" x2=".6" y2=".57"><stop stop-color="#150b00"/><stop offset="1" stop-color="#151000"/></linearGradient><linearGradient id="ggm" x1=".34" y1=".4" x2=".66" y2=".6"><stop stop-color="#3f3300"/><stop offset="1" stop-color="#3f3a00"/></linearGradient><linearGradient id="ggn" x1=".21" y1=".36" x2=".79" y2=".64"><stop stop-color="#675e00"/><stop offset="1" stop-color="#676500"/></linearGradient><linearGradient id="ggo" x1=".99" y1=".61" x2=".01" y2=".39"><stop stop-color="#a29c00"/><stop offset="1" stop-color="#a2a200"/></linearGradient><linearGradient id="ggp" x1="-.05" y1=".57" x2="1.05" y2=".43"><stop stop-color="#9f9600"/><stop offset="1" stop-color="#9f9f00"/></linearGradient><linearGradient id="ggq" x1=".44" y1=".98" x2=".56" y2=".01"><stop stop-color="#b5ac00"/><stop offset="1" stop-color="#b5b400"/></linearGradient><linearGradient id="ggr" x1=".6" y1=".99" x2=".4" y2=".01"><stop stop-color="#baa828"/><stop offset="1" stop-color="#bab828"/></linearGradient><linearGradient id="ggs" x1=".64" y1=".99" x2=".36" y2=".01"><stop stop-color="#b28e04"/><stop offset="1" stop-color="#b2a604"/></linearGradient><linearGradient id="ggt" x1=".65" y1=".99" x2=".36" y2=".01"><stop stop-color="#ad6f00"/><stop offset="1" stop-color="#ad9100"/></linearGradient><linearGradient id="ggu" x1=".65" y1=".98" x2=".35" y2=".02"><stop stop-color="#ab4000"/><stop offset="1" stop-color="#ab7600"/></linearGradient><linearGradient id="ggv" x1=".65" y1=".98" x2=".35" y2=".02"><stop stop-color="#a2003e"/><stop offset=".2" stop-color="#a7002b"/><stop offset=".3" stop-color="#a9001d"/><stop offset=".4" stop-color="#ab0000"/><stop offset=".47" stop-color="#ab1900"/><stop offset=".55" stop-color="#ab2600"/><stop offset=".7" stop-color="#ab3800"/><stop offset="1" stop-color="#ab4f00"/></linearGradient><linearGradient id="ggw" x1=".65" y1=".98" x2=".35" y2=".02"><stop stop-color="#920068"/><stop offset=".5" stop-color="#9e0050"/><stop offset="1" stop-color="#aa002b"/></linearGradient><linearGradient id="ggx" x1=".64" y1=".98" x2=".36" y2=".02"><stop stop-color="#860681"/><stop offset="1" stop-color="#9c0661"/></linearGradient><linearGradient id="ggy" x1=".59" y1="1" x2=".41" y2="0"><stop stop-color="#873596"/><stop offset="1" stop-color="#983585"/></linearGradient><linearGradient id="ggz" x1=".32" y1=".9" x2=".68" y2=".1"><stop stop-color="#780089"/><stop offset="1" stop-color="#810081"/></linearGradient><linearGradient id="gh0" x1="-.01" y1=".5" x2="1" y2=".49"><stop stop-color="#660074"/><stop offset="1" stop-color="#740066"/></linearGradient><linearGradient id="gh1" x1=".22" y1=".4" x2=".78" y2=".61"><stop stop-color="#560055"/><stop offset="1" stop-color="#650041"/></linearGradient><linearGradient id="gh2" x1=".37" y1=".42" x2=".63" y2=".58"><stop stop-color="#4c0038"/><stop offset="1" stop-color="#590019"/></linearGradient><linearGradient id="gh3" x1=".44" y1=".45" x2=".56" y2=".55"><stop stop-color="#48001c"/><stop offset=".52" stop-color="#4e0000"/><stop offset="1" stop-color="#4e1c00"/></linearGradient><linearGradient id="gh4" x1=".45" y1=".46" x2=".54" y2=".54"><stop stop-color="#4a1200"/><stop offset="1" stop-color="#4a2f00"/></linearGradient><linearGradient id="gh5" x1=".42" y1=".44" x2=".58" y2=".56"><stop stop-color="#533000"/><stop offset="1" stop-color="#534300"/></linearGradient><linearGradient id="gh6" x1=".31" y1=".4" x2=".69" y2=".6"><stop stop-color="#674f00"/><stop offset="1" stop-color="#675e00"/></linearGradient><linearGradient id="gh7" x1=".11" y1=".43" x2=".89" y2=".58"><stop stop-color="#847400"/><stop offset="1" stop-color="#848100"/></linearGradient><linearGradient id="gh8" x1="-.04" y1=".73" x2="1.04" y2=".27"><stop stop-color="#a49b00"/><stop offset="1" stop-color="#a4a300"/></linearGradient><linearGradient id="gh9" x1=".49" y1="1" x2=".51" y2="0"><stop stop-color="#b6ad08"/><stop offset="1" stop-color="#b6b608"/></linearGradient><linearGradient id="gha" x1=".62" y1=".99" x2=".38" y2=".01"><stop stop-color="#b7a210"/><stop offset="1" stop-color="#b7b310"/></linearGradient><linearGradient id="ghb" x1=".65" y1=".98" x2=".35" y2=".02"><stop stop-color="#b18a00"/><stop offset="1" stop-color="#b1a300"/></linearGradient><linearGradient id="ghc" x1=".66" y1=".98" x2=".34" y2=".02"><stop stop-color="#ad6900"/><stop offset="1" stop-color="#ad8d00"/></linearGradient><linearGradient id="ghd" x1=".66" y1=".97" x2=".34" y2=".03"><stop stop-color="#ab3400"/><stop offset=".5" stop-color="#ab5900"/><stop offset="1" stop-color="#ab7100"/></linearGradient><linearGradient id="ghe" x1=".66" y1=".97" x2=".34" y2=".03"><stop stop-color="#9f0047"/><stop offset=".26" stop-color="#a60031"/><stop offset=".39" stop-color="#a90022"/><stop offset=".52" stop-color="#ac0000"/><stop offset=".64" stop-color="#ac2100"/><stop offset=".76" stop-color="#ac3100"/><stop offset="1" stop-color="#ac4700"/></linearGradient><linearGradient id="ghf" x1=".66" y1=".97" x2=".34" y2=".03"><stop stop-color="#8f006c"/><stop offset="1" stop-color="#a70037"/></linearGradient><linearGradient id="ghg" x1=".65" y1=".98" x2=".35" y2=".02"><stop stop-color="#840183"/><stop offset="1" stop-color="#9a0166"/></linearGradient><linearGradient id="ghh" x1=".58" y1="1" x2=".42" y2="0"><stop stop-color="#852f95"/><stop offset="1" stop-color="#942f85"/></linearGradient><linearGradient id="ghi" x1=".26" y1=".86" x2=".74" y2=".14"><stop stop-color="#760087"/><stop offset="1" stop-color="#7f007f"/></linearGradient><linearGradient id="ghj" x1="-.02" y1=".53" x2="1.02" y2=".47"><stop stop-color="#630070"/><stop offset="1" stop-color="#710061"/></linearGradient><linearGradient id="ghk" x1=".11" y1=".43" x2=".89" y2=".58"><stop stop-color="#540050"/><stop offset="1" stop-color="#63003b"/></linearGradient><linearGradient id="ghl" x1=".19" y1=".4" x2=".8" y2=".6"><stop stop-color="#4b0033"/><stop offset="1" stop-color="#580011"/></linearGradient><linearGradient id="ghm" x1=".25" y1=".4" x2=".75" y2=".61"><stop stop-color="#480017"/><stop offset=".4" stop-color="#4d0000"/><stop offset="1" stop-color="#4d1f00"/></linearGradient><linearGradient id="ghn" x1=".24" y1=".4" x2=".75" y2=".61"><stop stop-color="#4b1700"/><stop offset="1" stop-color="#4b3100"/></linearGradient><linearGradient id="gho" x1=".2" y1=".4" x2=".8" y2=".6"><stop stop-color="#563400"/><stop offset="1" stop-color="#564700"/></linearGradient><linearGradient id="ghp" x1=".11" y1=".43" x2=".89" y2=".58"><stop stop-color="#6b5400"/><stop offset="1" stop-color="#6b6300"/></linearGradient><linearGradient id="ghq" x1="-.01" y1=".52" x2="1.01" y2=".49"><stop stop-color="#897a00"/><stop offset="1" stop-color="#898600"/></linearGradient><linearGradient id="ghr" x1=".07" y1=".84" x2=".93" y2=".16"><stop stop-color="#a8a000"/><stop offset="1" stop-color="#a8a700"/></linearGradient><linearGradient id="ghs" x1=".52" y1="1" x2=".48" y2="-.01"><stop stop-color="#b9ae1c"/><stop offset="1" stop-color="#b9b91c"/></linearGradient><linearGradient id="ght" x1="0" y1=".94" x2="1" y2=".05"><stop stop-color="#a69000"/><stop offset="1" stop-color="#a6a100"/></linearGradient><linearGradient id="ghu" x1=".4" y1=".96" x2=".6" y2=".04"><stop stop-color="#b7a101"/><stop offset="1" stop-color="#b7b101"/></linearGradient><linearGradient id="ghv" x1=".51" y1="1" x2=".49" y2="0"><stop stop-color="#dfc688"/><stop offset="1" stop-color="#dfd888"/></linearGradient><linearGradient id="ghw" x1=".55" y1="1.01" x2=".45" y2="-.01"><stop stop-color="#c4944e"/><stop offset="1" stop-color="#c4b34e"/></linearGradient><linearGradient id="ghx" x1=".57" y1="1.01" x2=".43" y2="-.01"><stop stop-color="#b45e12"/><stop offset="1" stop-color="#b49112"/></linearGradient><linearGradient id="ghy" x1=".58" y1="1.01" x2=".42" y2="-.01"><stop stop-color="#b00418"/><stop offset=".05" stop-color="#b20404"/><stop offset=".11" stop-color="#b21c04"/><stop offset=".17" stop-color="#b22904"/><stop offset=".29" stop-color="#b23b04"/><stop offset=".52" stop-color="#b25204"/><stop offset="1" stop-color="#b27204"/></linearGradient><linearGradient id="ghz" x1=".58" y1="1.01" x2=".42" y2="0"><stop stop-color="#9c045f"/><stop offset=".34" stop-color="#a70444"/><stop offset=".51" stop-color="#ad0430"/><stop offset=".6" stop-color="#af0421"/><stop offset=".69" stop-color="#b20404"/><stop offset=".76" stop-color="#b22104"/><stop offset=".84" stop-color="#b22f04"/><stop offset="1" stop-color="#b24304"/></linearGradient><linearGradient id="gi0" x1=".57" y1="1.01" x2=".43" y2="-.01"><stop stop-color="#8a1180"/><stop offset=".5" stop-color="#9c1168"/><stop offset="1" stop-color="#ab1145"/></linearGradient><linearGradient id="gi1" x1=".55" y1="1.01" x2=".45" y2="0"><stop stop-color="#8c4ea4"/><stop offset="1" stop-color="#aa4e84"/></linearGradient><linearGradient id="gi2" x1=".49" y1="1" x2=".51" y2="0"><stop stop-color="#9a74bf"/><stop offset="1" stop-color="#b074ac"/></linearGradient><linearGradient id="gi3" x1=".34" y1=".91" x2=".66" y2=".09"><stop stop-color="#609"/><stop offset="1" stop-color="#7b008b"/></linearGradient><linearGradient id="gi4" x1="-.08" y1=".83" x2="1.07" y2=".16"><stop stop-color="#5b0088"/><stop offset="1" stop-color="#750074"/></linearGradient><linearGradient id="gi5" x1="-.05" y1=".56" x2="1.04" y2=".45"><stop stop-color="#55006e"/><stop offset="1" stop-color="#6f0053"/></linearGradient><linearGradient id="gi6" x1=".11" y1=".43" x2=".88" y2=".58"><stop stop-color="#540052"/><stop offset="1" stop-color="#6b002d"/></linearGradient><linearGradient id="gi7" x1=".22" y1=".4" x2=".78" y2=".61"><stop stop-color="#580038"/><stop offset=".39" stop-color="#610027"/><stop offset=".59" stop-color="#640019"/><stop offset=".78" stop-color="#680000"/><stop offset="1" stop-color="#681c00"/></linearGradient><linearGradient id="gi8" x1=".24" y1=".4" x2=".76" y2=".61"><stop stop-color="#630014"/><stop offset=".15" stop-color="#650000"/><stop offset=".36" stop-color="#651b00"/><stop offset=".57" stop-color="#652900"/><stop offset="1" stop-color="#653c00"/></linearGradient><linearGradient id="gi9" x1=".16" y1=".41" x2=".83" y2=".6"><stop stop-color="#6c3000"/><stop offset="1" stop-color="#6c5300"/></linearGradient><linearGradient id="gia" x1=".02" y1=".48" x2=".98" y2=".52"><stop stop-color="#7b5300"/><stop offset="1" stop-color="#7b6d00"/></linearGradient><linearGradient id="gib" x1="-.1" y1=".7" x2="1.1" y2=".3"><stop stop-color="#927500"/><stop offset="1" stop-color="#928a00"/></linearGradient><linearGradient id="gic" x1=".11" y1=".96" x2=".89" y2=".04"><stop stop-color="#aa9400"/><stop offset="1" stop-color="#aaa400"/></linearGradient><linearGradient id="gid" x1=".42" y1=".97" x2=".58" y2=".03"><stop stop-color="#bca528"/><stop offset="1" stop-color="#bcb628"/></linearGradient><linearGradient id="gie" x1=".52" y1="1" x2=".48" y2="0"><stop stop-color="#d9bd7d"/><stop offset="1" stop-color="#d9d17d"/></linearGradient><linearGradient id="gif" x1=".56" y1="1" x2=".44" y2="0"><stop stop-color="#b87e15"/><stop offset="1" stop-color="#b8a315"/></linearGradient><linearGradient id="gig" x1=".58" y1="1" x2=".42" y2="0"><stop stop-color="#b35401"/><stop offset="1" stop-color="#b38b01"/></linearGradient><linearGradient id="gih" x1=".59" y1="1" x2=".41" y2="0"><stop stop-color="#ad002b"/><stop offset=".07" stop-color="#af001d"/><stop offset=".15" stop-color="#b10000"/><stop offset=".2" stop-color="#b11900"/><stop offset=".25" stop-color="#b12500"/><stop offset=".36" stop-color="#b13700"/><stop offset=".57" stop-color="#b14e00"/><stop offset="1" stop-color="#b16c00"/></linearGradient><linearGradient id="gii" x1=".59" y1="1" x2=".42" y2="0"><stop stop-color="#990064"/><stop offset=".39" stop-color="#a60048"/><stop offset=".59" stop-color="#ac0032"/><stop offset=".68" stop-color="#af0022"/><stop offset=".78" stop-color="#b20000"/><stop offset=".84" stop-color="#b21900"/><stop offset=".89" stop-color="#b22600"/><stop offset="1" stop-color="#b23700"/></linearGradient><linearGradient id="gij" x1=".58" y1="1" x2=".43" y2="0"><stop stop-color="#860282"/><stop offset="1" stop-color="#a8024b"/></linearGradient><linearGradient id="gik" x1=".55" y1="1" x2=".45" y2="0"><stop stop-color="#7c2c9b"/><stop offset="1" stop-color="#9d2c7a"/></linearGradient><linearGradient id="gil" x1=".47" y1=".99" x2=".53" y2=".01"><stop stop-color="#a17fc5"/><stop offset="1" stop-color="#b57fb4"/></linearGradient><linearGradient id="gim" x1=".3" y1=".9" x2=".7" y2=".1"><stop stop-color="#650198"/><stop offset="1" stop-color="#7a0189"/></linearGradient><linearGradient id="gin" x1="-.07" y1=".81" x2="1.07" y2=".19"><stop stop-color="#590085"/><stop offset="1" stop-color="#74006f"/></linearGradient><linearGradient id="gio" x1="-.08" y1=".62" x2="1.08" y2=".39"><stop stop-color="#540069"/><stop offset="1" stop-color="#6e004e"/></linearGradient><linearGradient id="gip" x1="-.02" y1=".52" x2="1.01" y2=".49"><stop stop-color="#55004e"/><stop offset="1" stop-color="#6b0026"/></linearGradient><linearGradient id="giq" x1=".02" y1=".48" x2=".98" y2=".52"><stop stop-color="#590034"/><stop offset=".34" stop-color="#610024"/><stop offset=".51" stop-color="#640017"/><stop offset=".69" stop-color="#670000"/><stop offset=".84" stop-color="#671700"/><stop offset="1" stop-color="#672300"/></linearGradient><linearGradient id="gir" x1=".02" y1=".49" x2=".98" y2=".52"><stop stop-color="#650008"/><stop offset=".05" stop-color="#600"/><stop offset=".29" stop-color="#661d00"/><stop offset=".52" stop-color="#662c00"/><stop offset="1" stop-color="#663f00"/></linearGradient><linearGradient id="gis" x1="-.02" y1=".52" x2="1.02" y2=".48"><stop stop-color="#6e3600"/><stop offset="1" stop-color="#6e5700"/></linearGradient><linearGradient id="git" x1="-.08" y1=".62" x2="1.07" y2=".39"><stop stop-color="#7e5800"/><stop offset="1" stop-color="#7e7100"/></linearGradient><linearGradient id="giu" x1="-.1" y1=".78" x2="1.1" y2=".23"><stop stop-color="#957a00"/><stop offset="1" stop-color="#958e00"/></linearGradient><linearGradient id="giv" x1=".19" y1=".94" x2=".8" y2=".06"><stop stop-color="#ad9800"/><stop offset="1" stop-color="#ada700"/></linearGradient><linearGradient id="giw" x1=".43" y1=".98" x2=".57" y2=".02"><stop stop-color="#d9c67f"/><stop offset="1" stop-color="#d9d57f"/></linearGradient><linearGradient id="gix" x1=".13" y1="1.04" x2=".86" y2="-.04"><stop stop-color="#a77c00"/><stop offset="1" stop-color="#a79600"/></linearGradient><linearGradient id="giy" x1=".4" y1=".96" x2=".6" y2=".04"><stop stop-color="#b48a00"/><stop offset="1" stop-color="#b4a200"/></linearGradient><linearGradient id="giz" x1=".48" y1=".99" x2=".52" y2=".01"><stop stop-color="#bd852b"/><stop offset="1" stop-color="#bda72b"/></linearGradient><linearGradient id="gj0" x1=".52" y1="1.01" x2=".48" y2="0"><stop stop-color="#be7139"/><stop offset="1" stop-color="#be9f39"/></linearGradient><linearGradient id="gj1" x1=".53" y1="1.01" x2=".47" y2="-.01"><stop stop-color="#b72a19"/><stop offset=".25" stop-color="#b74d19"/><stop offset=".5" stop-color="#b76319"/><stop offset="1" stop-color="#b78219"/></linearGradient><linearGradient id="gj2" x1=".54" y1="1.01" x2=".46" y2="-.01"><stop stop-color="#a20a59"/><stop offset=".24" stop-color="#ab0a40"/><stop offset=".37" stop-color="#b00a2e"/><stop offset=".49" stop-color="#b40a0a"/><stop offset=".55" stop-color="#b4220a"/><stop offset=".62" stop-color="#b4300a"/><stop offset=".74" stop-color="#b4430a"/><stop offset="1" stop-color="#b45d0a"/></linearGradient><linearGradient id="gj3" x1=".54" y1="1.01" x2=".46" y2="-.01"><stop stop-color="#8a097d"/><stop offset=".5" stop-color="#a0095d"/><stop offset=".75" stop-color="#aa0945"/><stop offset="1" stop-color="#b3091b"/></linearGradient><linearGradient id="gj4" x1=".53" y1="1.01" x2=".47" y2="0"><stop stop-color="#721497"/><stop offset="1" stop-color="#a01463"/></linearGradient><linearGradient id="gj5" x1=".51" y1="1" x2=".49" y2="0"><stop stop-color="#602cac"/><stop offset="1" stop-color="#912c88"/></linearGradient><linearGradient id="gj6" x1=".46" y1=".99" x2=".54" y2=".01"><stop stop-color="#4618b1"/><stop offset="1" stop-color="#7a1896"/></linearGradient><linearGradient id="gj7" x1=".36" y1=".92" x2=".64" y2=".08"><stop stop-color="#3c00a9"/><stop offset="1" stop-color="#660097"/></linearGradient><linearGradient id="gj8" x1=".02" y1=".98" x2=".97" y2=".01"><stop stop-color="#36009a"/><stop offset="1" stop-color="#660083"/></linearGradient><linearGradient id="gj9" x1="-.1" y1=".79" x2="1.1" y2=".21"><stop stop-color="#3e0082"/><stop offset="1" stop-color="#680066"/></linearGradient><linearGradient id="gja" x1="-.07" y1=".61" x2="1.07" y2=".4"><stop stop-color="#490069"/><stop offset="1" stop-color="#6c0045"/></linearGradient><linearGradient id="gjb" x1="-.01" y1=".51" x2="1" y2=".5"><stop stop-color="#550052"/><stop offset=".5" stop-color="#64003d"/><stop offset="1" stop-color="#710019"/></linearGradient><linearGradient id="gjc" x1=".01" y1=".5" x2=".99" y2=".51"><stop stop-color="#64003a"/><stop offset=".29" stop-color="#6b0028"/><stop offset=".43" stop-color="#6f001a"/><stop offset=".57" stop-color="#720000"/><stop offset=".68" stop-color="#721700"/><stop offset=".79" stop-color="#722300"/><stop offset="1" stop-color="#723300"/></linearGradient><linearGradient id="gjd" x1="-.05" y1=".56" x2="1.04" y2=".45"><stop stop-color="#770005"/><stop offset=".02" stop-color="#780000"/><stop offset=".14" stop-color="#781a00"/><stop offset=".26" stop-color="#782700"/><stop offset=".51" stop-color="#783900"/><stop offset="1" stop-color="#785000"/></linearGradient><linearGradient id="gje" x1="-.1" y1=".72" x2="1.1" y2=".29"><stop stop-color="#844100"/><stop offset="1" stop-color="#846a00"/></linearGradient><linearGradient id="gjf" x1="-.06" y1=".92" x2="1.06" y2=".08"><stop stop-color="#976400"/><stop offset="1" stop-color="#978400"/></linearGradient><linearGradient id="gjg" x1=".2" y1="1" x2=".8" y2="0"><stop stop-color="#a98000"/><stop offset="1" stop-color="#a99800"/></linearGradient><linearGradient id="gjh" x1=".41" y1=".96" x2=".59" y2=".04"><stop stop-color="#b68904"/><stop offset="1" stop-color="#b6a304"/></linearGradient><linearGradient id="gji" x1=".48" y1="1" x2=".52" y2="0"><stop stop-color="#c0883b"/><stop offset="1" stop-color="#c0aa3b"/></linearGradient><linearGradient id="gjj" x1=".52" y1="1" x2=".48" y2="0"><stop stop-color="#b86019"/><stop offset="1" stop-color="#b89619"/></linearGradient><linearGradient id="gjk" x1=".54" y1="1.01" x2=".46" y2="0"><stop stop-color="#b4030e"/><stop offset=".02" stop-color="#b50303"/><stop offset=".08" stop-color="#b51e03"/><stop offset=".14" stop-color="#b52c03"/><stop offset=".26" stop-color="#b54003"/><stop offset=".51" stop-color="#b55903"/><stop offset="1" stop-color="#b57b03"/></linearGradient><linearGradient id="gjl" x1=".55" y1="1.01" x2=".45" y2="0"><stop stop-color="#9e015e"/><stop offset=".29" stop-color="#a90143"/><stop offset=".43" stop-color="#ae012f"/><stop offset=".5" stop-color="#b10120"/><stop offset=".57" stop-color="#b30101"/><stop offset=".63" stop-color="#b31c01"/><stop offset=".68" stop-color="#b32901"/><stop offset=".79" stop-color="#b33c01"/><stop offset="1" stop-color="#b35401"/></linearGradient><linearGradient id="gjm" x1=".55" y1="1" x2=".45" y2="0"><stop stop-color="#860181"/><stop offset=".5" stop-color="#9c0162"/><stop offset=".75" stop-color="#a6014d"/><stop offset="1" stop-color="#af012c"/></linearGradient><linearGradient id="gjn" x1=".53" y1="1.01" x2=".46" y2="0"><stop stop-color="#6c0499"/><stop offset="1" stop-color="#9c0467"/></linearGradient><linearGradient id="gjo" x1=".5" y1="1" x2=".5" y2="0"><stop stop-color="#571bab"/><stop offset="1" stop-color="#8b1b88"/></linearGradient><linearGradient id="gjp" x1=".44" y1=".98" x2=".56" y2=".02"><stop stop-color="#461eb1"/><stop offset="1" stop-color="#781e98"/></linearGradient><linearGradient id="gjq" x1=".32" y1=".91" x2=".68" y2=".08"><stop stop-color="#3b00a7"/><stop offset="1" stop-color="#650095"/></linearGradient><linearGradient id="gjr" x1="-.01" y1=".94" x2="1" y2=".06"><stop stop-color="#360097"/><stop offset="1" stop-color="#66007f"/></linearGradient><linearGradient id="gjs" x1="-.1" y1=".79" x2="1.1" y2=".21"><stop stop-color="#3f007f"/><stop offset="1" stop-color="#690061"/></linearGradient><linearGradient id="gjt" x1="-.1" y1=".68" x2="1.09" y2=".32"><stop stop-color="#4b0066"/><stop offset="1" stop-color="#6c0040"/></linearGradient><linearGradient id="gju" x1="-.09" y1=".63" x2="1.08" y2=".37"><stop stop-color="#57004f"/><stop offset=".5" stop-color="#660039"/><stop offset=".75" stop-color="#6c0029"/><stop offset="1" stop-color="#72000b"/></linearGradient><linearGradient id="gjv" x1="-.09" y1=".64" x2="1.08" y2=".37"><stop stop-color="#660035"/><stop offset=".24" stop-color="#6d0024"/><stop offset=".37" stop-color="#6f0018"/><stop offset=".49" stop-color="#720000"/><stop offset=".62" stop-color="#721900"/><stop offset=".74" stop-color="#722700"/><stop offset="1" stop-color="#723800"/></linearGradient><linearGradient id="gjw" x1="-.1" y1=".69" x2="1.1" y2=".32"><stop stop-color="#791100"/><stop offset=".25" stop-color="#792d00"/><stop offset=".5" stop-color="#793d00"/><stop offset="1" stop-color="#795400"/></linearGradient><linearGradient id="gjx" x1="-.1" y1=".79" x2="1.1" y2=".21"><stop stop-color="#874700"/><stop offset="1" stop-color="#876e00"/></linearGradient><linearGradient id="gjy" x1="-.06" y1=".93" x2="1.06" y2=".08"><stop stop-color="#9a6900"/><stop offset="1" stop-color="#9a8700"/></linearGradient><linearGradient id="gjz" x1=".24" y1=".96" x2=".76" y2=".04"><stop stop-color="#ac8300"/><stop offset="1" stop-color="#ac9a00"/></linearGradient><linearGradient id="gk0" x1=".41" y1=".97" x2=".59" y2=".03"><stop stop-color="#ba8d26"/><stop offset="1" stop-color="#baa726"/></linearGradient><linearGradient id="gk1" x1=".21" y1="1.06" x2=".79" y2="-.06"><stop stop-color="#a65c00"/><stop offset="1" stop-color="#a68200"/></linearGradient><linearGradient id="gk2" x1=".41" y1=".96" x2=".59" y2=".04"><stop stop-color="#b26800"/><stop offset="1" stop-color="#b28b00"/></linearGradient><linearGradient id="gk3" x1=".47" y1=".99" x2=".53" y2=".01"><stop stop-color="#b75708"/><stop offset="1" stop-color="#b78c08"/></linearGradient><linearGradient id="gk4" x1=".5" y1="1" x2=".5" y2="0"><stop stop-color="#b8241a"/><stop offset=".25" stop-color="#b8491a"/><stop offset=".5" stop-color="#b8601a"/><stop offset="1" stop-color="#b8801a"/></linearGradient><linearGradient id="gk5" x1=".52" y1="1.01" x2=".48" y2="0"><stop stop-color="#a40f58"/><stop offset=".23" stop-color="#ad0f40"/><stop offset=".34" stop-color="#b10f2f"/><stop offset=".45" stop-color="#b60f0f"/><stop offset=".59" stop-color="#b6340f"/><stop offset=".73" stop-color="#b6480f"/><stop offset="1" stop-color="#b6630f"/></linearGradient><linearGradient id="gk6" x1=".53" y1="1.01" x2=".47" y2="-.01"><stop stop-color="#8a067c"/><stop offset=".47" stop-color="#a1065a"/><stop offset=".71" stop-color="#ab0641"/><stop offset=".82" stop-color="#b0062e"/><stop offset=".88" stop-color="#b20620"/><stop offset=".94" stop-color="#b40606"/><stop offset="1" stop-color="#b42106"/></linearGradient><linearGradient id="gk7" x1=".53" y1="1.01" x2=".47" y2="-.01"><stop stop-color="#6c0597"/><stop offset=".5" stop-color="#8a057d"/><stop offset="1" stop-color="#a20558"/></linearGradient><linearGradient id="gk8" x1=".52" y1="1.01" x2=".48" y2="0"><stop stop-color="#4309ac"/><stop offset=".5" stop-color="#6f0997"/><stop offset="1" stop-color="#8b097e"/></linearGradient><linearGradient id="gk9" x1=".5" y1="1" x2=".5" y2="0"><stop stop-color="#0f22b4"/><stop offset=".1" stop-color="#0f0fb8"/><stop offset=".21" stop-color="#2c0fb4"/><stop offset=".32" stop-color="#3c0fb0"/><stop offset=".55" stop-color="#530fa9"/><stop offset="1" stop-color="#720f98"/></linearGradient><linearGradient id="gka" x1=".45" y1=".98" x2=".55" y2=".02"><stop stop-color="#0236ab"/><stop offset=".19" stop-color="#0225b1"/><stop offset=".29" stop-color="#0219b4"/><stop offset=".39" stop-color="#0202b6"/><stop offset=".46" stop-color="#1d02b4"/><stop offset=".54" stop-color="#2a02b2"/><stop offset=".69" stop-color="#3c02ae"/><stop offset="1" stop-color="#5502a6"/></linearGradient><linearGradient id="gkb" x1=".37" y1=".93" x2=".63" y2=".07"><stop stop-color="#0034a5"/><stop offset=".27" stop-color="#0024aa"/><stop offset=".41" stop-color="#0017ad"/><stop offset=".54" stop-color="#0000b0"/><stop offset=".66" stop-color="#1c00ad"/><stop offset=".77" stop-color="#2a00ab"/><stop offset="1" stop-color="#3d00a7"/></linearGradient><linearGradient id="gkc" x1=".09" y1="1.03" x2=".91" y2="-.03"><stop stop-color="#002f98"/><stop offset=".21" stop-color="#00209d"/><stop offset=".42" stop-color="#0000a2"/><stop offset=".57" stop-color="#22009f"/><stop offset=".71" stop-color="#32009b"/><stop offset="1" stop-color="#470094"/></linearGradient><linearGradient id="gkd" x1="-.06" y1=".92" x2="1.06" y2=".09"><stop stop-color="#00198d"/><stop offset=".15" stop-color="#000091"/><stop offset=".25" stop-color="#1c008e"/><stop offset=".36" stop-color="#29008c"/><stop offset=".57" stop-color="#3c0086"/><stop offset="1" stop-color="#550079"/></linearGradient><linearGradient id="gke" x1="-.11" y1=".76" x2="1.1" y2=".25"><stop stop-color="#27007d"/><stop offset=".5" stop-color="#4a006e"/><stop offset="1" stop-color="#60005d"/></linearGradient><linearGradient id="gkf" x1="-.09" y1=".64" x2="1.08" y2=".36"><stop stop-color="#430068"/><stop offset="1" stop-color="#6b003e"/></linearGradient><linearGradient id="gkg" x1="-.09" y1=".64" x2="1.08" y2=".37"><stop stop-color="#580054"/><stop offset=".5" stop-color="#69003c"/><stop offset=".75" stop-color="#71002a"/><stop offset=".88" stop-color="#74001d"/><stop offset="1" stop-color="#770005"/></linearGradient><linearGradient id="gkh" x1="-.1" y1=".71" x2="1.1" y2=".3"><stop stop-color="#6e003e"/><stop offset=".26" stop-color="#76002b"/><stop offset=".39" stop-color="#79001d"/><stop offset=".53" stop-color="#7d0000"/><stop offset=".64" stop-color="#7d1c00"/><stop offset=".76" stop-color="#7d2a00"/><stop offset="1" stop-color="#7d3d00"/></linearGradient><linearGradient id="gki" x1="-.09" y1=".86" x2="1.09" y2=".15"><stop stop-color="#87000d"/><stop offset=".04" stop-color="#800"/><stop offset=".16" stop-color="#881e00"/><stop offset=".28" stop-color="#882d00"/><stop offset=".52" stop-color="#884000"/><stop offset="1" stop-color="#885a00"/></linearGradient><linearGradient id="gkj" x1="0" y1="1" x2="1" y2=".01"><stop stop-color="#984200"/><stop offset="1" stop-color="#987200"/></linearGradient><linearGradient id="gkk" x1=".24" y1="1.01" x2=".76" y2="-.01"><stop stop-color="#a86000"/><stop offset="1" stop-color="#a88400"/></linearGradient><linearGradient id="gkl" x1=".41" y1=".96" x2=".59" y2=".04"><stop stop-color="#b36600"/><stop offset="1" stop-color="#b38c00"/></linearGradient><linearGradient id="gkm" x1=".47" y1=".99" x2=".53" y2=".01"><stop stop-color="#b85413"/><stop offset="1" stop-color="#b88c13"/></linearGradient><linearGradient id="gkn" x1=".51" y1="1" x2=".49" y2="0"><stop stop-color="#b50c1b"/><stop offset=".04" stop-color="#b70c0c"/><stop offset=".16" stop-color="#b72f0c"/><stop offset=".28" stop-color="#b7410c"/><stop offset=".52" stop-color="#b75a0c"/><stop offset="1" stop-color="#b77b0c"/></linearGradient><linearGradient id="gko" x1=".52" y1="1.01" x2=".47" y2="0"><stop stop-color="#a0025d"/><stop offset=".26" stop-color="#ab0242"/><stop offset=".39" stop-color="#b0022e"/><stop offset=".46" stop-color="#b20220"/><stop offset=".53" stop-color="#b50202"/><stop offset=".58" stop-color="#b51f02"/><stop offset=".64" stop-color="#b52d02"/><stop offset=".76" stop-color="#b54102"/><stop offset="1" stop-color="#b55b02"/></linearGradient><linearGradient id="gkp" x1=".53" y1="1.01" x2=".47" y2="0"><stop stop-color="#860180"/><stop offset=".5" stop-color="#9f015d"/><stop offset=".75" stop-color="#a90144"/><stop offset=".88" stop-color="#ae0131"/><stop offset="1" stop-color="#b3010c"/></linearGradient><linearGradient id="gkq" x1=".53" y1="1.01" x2=".47" y2="0"><stop stop-color="#66019a"/><stop offset="1" stop-color="#9e015f"/></linearGradient><linearGradient id="gkr" x1=".52" y1="1" x2=".48" y2="0"><stop stop-color="#3a02ae"/><stop offset=".5" stop-color="#69029a"/><stop offset="1" stop-color="#870282"/></linearGradient><linearGradient id="gks" x1=".49" y1="1" x2=".51" y2="0"><stop stop-color="#0825b2"/><stop offset=".15" stop-color="#0808b7"/><stop offset=".25" stop-color="#2808b4"/><stop offset=".36" stop-color="#3808b1"/><stop offset=".57" stop-color="#4f08aa"/><stop offset="1" stop-color="#6d089a"/></linearGradient><linearGradient id="gkt" x1=".43" y1=".98" x2=".57" y2=".02"><stop stop-color="#0437aa"/><stop offset=".21" stop-color="#0426b0"/><stop offset=".32" stop-color="#041ab3"/><stop offset=".42" stop-color="#0404b6"/><stop offset=".49" stop-color="#1b04b4"/><stop offset=".57" stop-color="#2804b2"/><stop offset=".71" stop-color="#3a04ae"/><stop offset="1" stop-color="#5104a7"/></linearGradient><linearGradient id="gku" x1=".33" y1=".92" x2=".67" y2=".08"><stop stop-color="#0034a3"/><stop offset=".27" stop-color="#0023a9"/><stop offset=".41" stop-color="#0017ab"/><stop offset=".54" stop-color="#0000ae"/><stop offset=".66" stop-color="#1c00ac"/><stop offset=".77" stop-color="#2a00aa"/><stop offset="1" stop-color="#3c00a5"/></linearGradient><linearGradient id="gkv" x1=".05" y1=".98" x2=".95" y2=".01"><stop stop-color="#002d96"/><stop offset=".19" stop-color="#001e9b"/><stop offset=".39" stop-color="#00009f"/><stop offset=".46" stop-color="#17009e"/><stop offset=".54" stop-color="#23009c"/><stop offset=".69" stop-color="#330098"/><stop offset="1" stop-color="#490091"/></linearGradient><linearGradient id="gkw" x1="-.08" y1=".88" x2="1.08" y2=".13"><stop stop-color="#00138c"/><stop offset=".1" stop-color="#00008f"/><stop offset=".21" stop-color="#1c008c"/><stop offset=".32" stop-color="#2a0089"/><stop offset=".55" stop-color="#3d0083"/><stop offset="1" stop-color="#570075"/></linearGradient><linearGradient id="gkx" x1="-.1" y1=".79" x2="1.1" y2=".22"><stop stop-color="#2c007a"/><stop offset=".5" stop-color="#4d006b"/><stop offset="1" stop-color="#620058"/></linearGradient><linearGradient id="gky" x1="-.11" y1=".74" x2="1.1" y2=".27"><stop stop-color="#460065"/><stop offset="1" stop-color="#6c0039"/></linearGradient><linearGradient id="gkz" x1="-.11" y1=".74" x2="1.1" y2=".27"><stop stop-color="#5b0051"/><stop offset=".47" stop-color="#6b0039"/><stop offset=".71" stop-color="#720028"/><stop offset=".82" stop-color="#75001a"/><stop offset=".94" stop-color="#780000"/><stop offset="1" stop-color="#781100"/></linearGradient><linearGradient id="gl0" x1="-.1" y1=".79" x2="1.1" y2=".22"><stop stop-color="#72003a"/><stop offset=".23" stop-color="#780028"/><stop offset=".34" stop-color="#7b001a"/><stop offset=".45" stop-color="#7e0000"/><stop offset=".59" stop-color="#7e1f00"/><stop offset=".73" stop-color="#7e2e00"/><stop offset="1" stop-color="#7e4200"/></linearGradient><linearGradient id="gl1" x1="-.08" y1=".88" x2="1.08" y2=".13"><stop stop-color="#8a0d00"/><stop offset=".25" stop-color="#8a3100"/><stop offset=".5" stop-color="#8a4400"/><stop offset="1" stop-color="#8a5e00"/></linearGradient><linearGradient id="gl2" x1="-.02" y1=".98" x2="1.02" y2=".02"><stop stop-color="#9b4800"/><stop offset="1" stop-color="#9b7600"/></linearGradient><linearGradient id="gl3" x1=".26" y1=".97" x2=".74" y2=".03"><stop stop-color="#aa6300"/><stop offset="1" stop-color="#aa8500"/></linearGradient><linearGradient id="gl4" x1=".41" y1=".97" x2=".59" y2=".03"><stop stop-color="#b56506"/><stop offset="1" stop-color="#b58d06"/></linearGradient><linearGradient id="gl5" x1=".22" y1="1.05" x2=".78" y2="-.06"><stop stop-color="#a61900"/><stop offset=".25" stop-color="#a63800"/><stop offset=".5" stop-color="#a64a00"/><stop offset="1" stop-color="#a66400"/></linearGradient><linearGradient id="gl6" x1=".41" y1=".96" x2=".59" y2=".04"><stop stop-color="#b22a00"/><stop offset=".5" stop-color="#b25300"/><stop offset="1" stop-color="#b26c00"/></linearGradient><linearGradient id="gl7" x1=".47" y1=".99" x2=".53" y2=".01"><stop stop-color="#b2032e"/><stop offset=".08" stop-color="#b40320"/><stop offset=".16" stop-color="#b60303"/><stop offset=".22" stop-color="#b61903"/><stop offset=".27" stop-color="#b62603"/><stop offset=".37" stop-color="#b63603"/><stop offset=".58" stop-color="#b64c03"/><stop offset="1" stop-color="#b66a03"/></linearGradient><linearGradient id="gl8" x1=".5" y1="1" x2=".5" y2="0"><stop stop-color="#a30f5e"/><stop offset=".28" stop-color="#ad0f44"/><stop offset=".41" stop-color="#b20f32"/><stop offset=".55" stop-color="#b70f0f"/><stop offset=".66" stop-color="#b72f0f"/><stop offset=".78" stop-color="#b7400f"/><stop offset="1" stop-color="#b7580f"/></linearGradient><linearGradient id="gl9" x1=".52" y1="1.01" x2=".48" y2="0"><stop stop-color="#8b097d"/><stop offset=".48" stop-color="#a2095b"/><stop offset=".73" stop-color="#ac0942"/><stop offset=".85" stop-color="#b1092f"/><stop offset=".91" stop-color="#b30921"/><stop offset=".97" stop-color="#b50909"/><stop offset="1" stop-color="#b51909"/></linearGradient><linearGradient id="gla" x1=".52" y1="1.01" x2=".48" y2="-.01"><stop stop-color="#6a0497"/><stop offset=".5" stop-color="#8a047c"/><stop offset="1" stop-color="#a30456"/></linearGradient><linearGradient id="glb" x1=".52" y1="1.01" x2=".48" y2="0"><stop stop-color="#3703ad"/><stop offset=".5" stop-color="#6b0397"/><stop offset="1" stop-color="#8a037c"/></linearGradient><linearGradient id="glc" x1=".51" y1="1.01" x2=".49" y2="0"><stop stop-color="#0537aa"/><stop offset=".14" stop-color="#0526b0"/><stop offset=".28" stop-color="#0505b5"/><stop offset=".37" stop-color="#2705b2"/><stop offset=".46" stop-color="#3805af"/><stop offset=".64" stop-color="#4e05a8"/><stop offset="1" stop-color="#6c0598"/></linearGradient><linearGradient id="gld" x1=".49" y1="1" x2=".51" y2="0"><stop stop-color="#07529d"/><stop offset=".35" stop-color="#073baa"/><stop offset=".53" stop-color="#0729b1"/><stop offset=".7" stop-color="#0707b7"/><stop offset=".78" stop-color="#2207b4"/><stop offset=".85" stop-color="#3007b2"/><stop offset="1" stop-color="#4307ad"/></linearGradient><linearGradient id="gle" x1=".44" y1=".98" x2=".55" y2=".02"><stop stop-color="#015c92"/><stop offset=".5" stop-color="#0144a3"/><stop offset="1" stop-color="#011bb2"/></linearGradient><linearGradient id="glf" x1=".37" y1=".93" x2=".63" y2=".07"><stop stop-color="#00598c"/><stop offset="1" stop-color="#0033a5"/></linearGradient><linearGradient id="glg" x1=".11" y1="1.03" x2=".88" y2="-.03"><stop stop-color="#005281"/><stop offset=".5" stop-color="#003e90"/><stop offset="1" stop-color="#001d9d"/></linearGradient><linearGradient id="glh" x1="-.05" y1=".94" x2="1.05" y2=".07"><stop stop-color="#00417b"/><stop offset=".38" stop-color="#002d87"/><stop offset=".58" stop-color="#001e8c"/><stop offset=".77" stop-color="#000092"/><stop offset=".88" stop-color="#1e008f"/><stop offset="1" stop-color="#2c008c"/></linearGradient><linearGradient id="gli" x1="-.1" y1=".79" x2="1.1" y2=".21"><stop stop-color="#00297a"/><stop offset=".17" stop-color="#001b7f"/><stop offset=".34" stop-color="#000084"/><stop offset=".43" stop-color="#170082"/><stop offset=".51" stop-color="#23007f"/><stop offset=".67" stop-color="#33007b"/><stop offset="1" stop-color="#490070"/></linearGradient><linearGradient id="glj" x1="-.1" y1=".68" x2="1.09" y2=".32"><stop stop-color="#190078"/><stop offset=".5" stop-color="#430069"/><stop offset="1" stop-color="#5b0057"/></linearGradient><linearGradient id="glk" x1="-.1" y1=".68" x2="1.09" y2=".33"><stop stop-color="#420068"/><stop offset="1" stop-color="#6b003c"/></linearGradient><linearGradient id="gll" x1="-.1" y1=".75" x2="1.1" y2=".26"><stop stop-color="#5d0059"/><stop offset=".5" stop-color="#6f0040"/><stop offset=".75" stop-color="#76002e"/><stop offset="1" stop-color="#7d000b"/></linearGradient><linearGradient id="glm" x1="-.08" y1=".89" x2="1.07" y2=".12"><stop stop-color="#780048"/><stop offset=".31" stop-color="#810032"/><stop offset=".46" stop-color="#850022"/><stop offset=".61" stop-color="#890000"/><stop offset=".71" stop-color="#891b00"/><stop offset=".81" stop-color="#892800"/><stop offset="1" stop-color="#893b00"/></linearGradient><linearGradient id="gln" x1="0" y1="1.01" x2=".99" y2="0"><stop stop-color="#93002c"/><stop offset=".11" stop-color="#96001d"/><stop offset=".22" stop-color="#980000"/><stop offset=".32" stop-color="#981c00"/><stop offset=".41" stop-color="#982a00"/><stop offset=".61" stop-color="#983d00"/><stop offset="1" stop-color="#985600"/></linearGradient><linearGradient id="glo" x1=".25" y1="1.01" x2=".75" y2="-.01"><stop stop-color="#a82100"/><stop offset=".5" stop-color="#a84d00"/><stop offset="1" stop-color="#a86600"/></linearGradient><linearGradient id="glp" x1=".4" y1=".96" x2=".59" y2=".04"><stop stop-color="#b32400"/><stop offset=".5" stop-color="#b35200"/><stop offset="1" stop-color="#b36d00"/></linearGradient><linearGradient id="glq" x1=".47" y1=".99" x2=".53" y2=".01"><stop stop-color="#b00938"/><stop offset=".11" stop-color="#b40928"/><stop offset=".22" stop-color="#b70909"/><stop offset=".32" stop-color="#b72709"/><stop offset=".41" stop-color="#b73609"/><stop offset=".61" stop-color="#b74c09"/><stop offset="1" stop-color="#b76909"/></linearGradient><linearGradient id="glr" x1=".5" y1="1" x2=".5" y2="0"><stop stop-color="#9f0662"/><stop offset=".31" stop-color="#ab0646"/><stop offset=".46" stop-color="#b10632"/><stop offset=".54" stop-color="#b40623"/><stop offset=".61" stop-color="#b60606"/><stop offset=".71" stop-color="#b62906"/><stop offset=".81" stop-color="#b63a06"/><stop offset="1" stop-color="#b65106"/></linearGradient><linearGradient id="gls" x1=".52" y1="1" x2=".48" y2="0"><stop stop-color="#860181"/><stop offset=".5" stop-color="#9f015f"/><stop offset=".75" stop-color="#a90146"/><stop offset=".88" stop-color="#ae0134"/><stop offset="1" stop-color="#b30115"/></linearGradient><linearGradient id="glt" x1=".53" y1="1.01" x2=".47" y2="0"><stop stop-color="#64009b"/><stop offset="1" stop-color="#9f005c"/></linearGradient><linearGradient id="glu" x1=".53" y1="1" x2=".47" y2="0"><stop stop-color="#2900b0"/><stop offset=".25" stop-color="#4e00a6"/><stop offset=".5" stop-color="#65009b"/><stop offset="1" stop-color="#860081"/></linearGradient><linearGradient id="glv" x1=".51" y1="1" x2=".49" y2="0"><stop stop-color="#013ba8"/><stop offset=".17" stop-color="#0129af"/><stop offset=".26" stop-color="#011cb2"/><stop offset=".34" stop-color="#0101b5"/><stop offset=".38" stop-color="#1701b4"/><stop offset=".43" stop-color="#2301b2"/><stop offset=".51" stop-color="#3401af"/><stop offset=".67" stop-color="#4901a9"/><stop offset="1" stop-color="#67019b"/></linearGradient><linearGradient id="glw" x1=".48" y1="1" x2=".51" y2="0"><stop stop-color="#03549b"/><stop offset=".38" stop-color="#033ca9"/><stop offset=".58" stop-color="#032ab0"/><stop offset=".67" stop-color="#031db3"/><stop offset=".77" stop-color="#0303b7"/><stop offset=".83" stop-color="#1c03b5"/><stop offset=".88" stop-color="#2903b3"/><stop offset="1" stop-color="#3b03af"/></linearGradient><linearGradient id="glx" x1=".42" y1=".98" x2=".57" y2=".02"><stop stop-color="#015c91"/><stop offset=".5" stop-color="#0146a2"/><stop offset="1" stop-color="#0122b0"/></linearGradient><linearGradient id="gly" x1=".33" y1=".92" x2=".67" y2=".08"><stop stop-color="#00588b"/><stop offset="1" stop-color="#0032a3"/></linearGradient><linearGradient id="glz" x1=".06" y1=".99" x2=".94" y2=".01"><stop stop-color="#005080"/><stop offset=".5" stop-color="#003b8f"/><stop offset="1" stop-color="#00169d"/></linearGradient><linearGradient id="gm0" x1="-.08" y1=".89" x2="1.07" y2=".12"><stop stop-color="#003e7a"/><stop offset=".35" stop-color="#002b85"/><stop offset=".53" stop-color="#001d8a"/><stop offset=".7" stop-color="#00008f"/><stop offset=".85" stop-color="#22008b"/><stop offset="1" stop-color="#320087"/></linearGradient><linearGradient id="gm1" x1="-.1" y1=".8" x2="1.1" y2=".21"><stop stop-color="#00247a"/><stop offset=".14" stop-color="#00177e"/><stop offset=".28" stop-color="#000082"/><stop offset=".37" stop-color="#180080"/><stop offset=".46" stop-color="#24007d"/><stop offset=".64" stop-color="#350078"/><stop offset="1" stop-color="#4c006d"/></linearGradient><linearGradient id="gm2" x1="-.11" y1=".75" x2="1.1" y2=".26"><stop stop-color="#220076"/><stop offset=".5" stop-color="#470066"/><stop offset="1" stop-color="#5d0053"/></linearGradient><linearGradient id="gm3" x1="-.11" y1=".75" x2="1.1" y2=".26"><stop stop-color="#460066"/><stop offset="1" stop-color="#6d0038"/></linearGradient><linearGradient id="gm4" x1="-.1" y1=".81" x2="1.1" y2=".2"><stop stop-color="#610057"/><stop offset=".48" stop-color="#71003d"/><stop offset=".73" stop-color="#79002b"/><stop offset=".85" stop-color="#7c001c"/><stop offset=".97" stop-color="#7f0000"/><stop offset="1" stop-color="#7f0b00"/></linearGradient><linearGradient id="gm5" x1="-.08" y1=".89" x2="1.07" y2=".12"><stop stop-color="#7c0045"/><stop offset=".28" stop-color="#840030"/><stop offset=".41" stop-color="#880020"/><stop offset=".55" stop-color="#8b0000"/><stop offset=".66" stop-color="#8b1e00"/><stop offset=".78" stop-color="#8b2c00"/><stop offset="1" stop-color="#8b4000"/></linearGradient><linearGradient id="gm6" x1="-.02" y1=".98" x2="1.01" y2=".02"><stop stop-color="#970025"/><stop offset=".08" stop-color="#990018"/><stop offset=".16" stop-color="#9b0000"/><stop offset=".27" stop-color="#9b1d00"/><stop offset=".37" stop-color="#9b2c00"/><stop offset=".58" stop-color="#9b3f00"/><stop offset="1" stop-color="#9b5900"/></linearGradient><linearGradient id="gm7" x1=".27" y1=".97" x2=".73" y2=".03"><stop stop-color="#aa2700"/><stop offset=".5" stop-color="#aa4f00"/><stop offset="1" stop-color="#aa6700"/></linearGradient><linearGradient id="gm8" x1=".4" y1=".97" x2=".6" y2=".03"><stop stop-color="#b41d02"/><stop offset=".25" stop-color="#b43e02"/><stop offset=".5" stop-color="#b45102"/><stop offset="1" stop-color="#b46d02"/></linearGradient><linearGradient id="gm9" x1=".19" y1="1.04" x2=".81" y2="-.04"><stop stop-color="#96004e"/><stop offset=".36" stop-color="#9e0037"/><stop offset=".54" stop-color="#a20026"/><stop offset=".63" stop-color="#a40019"/><stop offset=".72" stop-color="#a60000"/><stop offset=".86" stop-color="#a62100"/><stop offset="1" stop-color="#a63100"/></linearGradient><linearGradient id="gma" x1=".4" y1=".95" x2=".6" y2=".05"><stop stop-color="#a30050"/><stop offset=".35" stop-color="#ab0038"/><stop offset=".52" stop-color="#af0027"/><stop offset=".61" stop-color="#b10019"/><stop offset=".7" stop-color="#b20000"/><stop offset=".77" stop-color="#b21800"/><stop offset=".85" stop-color="#b22500"/><stop offset="1" stop-color="#b23600"/></linearGradient><linearGradient id="gmb" x1=".47" y1=".99" x2=".53" y2=".01"><stop stop-color="#9e0767"/><stop offset=".43" stop-color="#ab074a"/><stop offset=".64" stop-color="#b10735"/><stop offset=".75" stop-color="#b40725"/><stop offset=".85" stop-color="#b70707"/><stop offset=".93" stop-color="#b72007"/><stop offset="1" stop-color="#b72d07"/></linearGradient><linearGradient id="gmc" x1=".5" y1="1" x2=".5" y2="0"><stop stop-color="#8d1581"/><stop offset=".5" stop-color="#a11564"/><stop offset="1" stop-color="#b31534"/></linearGradient><linearGradient id="gmd" x1=".52" y1="1.01" x2=".48" y2="-.01"><stop stop-color="#6e0a97"/><stop offset="1" stop-color="#a20a5c"/></linearGradient><linearGradient id="gme" x1=".53" y1="1.01" x2=".47" y2="-.01"><stop stop-color="#3a04ac"/><stop offset=".5" stop-color="#6c0497"/><stop offset="1" stop-color="#8a047c"/></linearGradient><linearGradient id="gmf" x1=".53" y1="1.01" x2=".47" y2="-.01"><stop stop-color="#033aa7"/><stop offset=".16" stop-color="#0328ae"/><stop offset=".23" stop-color="#031cb1"/><stop offset=".31" stop-color="#0303b4"/><stop offset=".36" stop-color="#1a03b2"/><stop offset=".4" stop-color="#2603b1"/><stop offset=".48" stop-color="#3603ae"/><stop offset=".66" stop-color="#4d03a7"/><stop offset="1" stop-color="#6b0398"/></linearGradient><linearGradient id="gmg" x1=".52" y1="1.01" x2=".48" y2="0"><stop stop-color="#065b94"/><stop offset=".41" stop-color="#0641a6"/><stop offset=".61" stop-color="#062eae"/><stop offset=".71" stop-color="#0620b2"/><stop offset=".81" stop-color="#0606b6"/><stop offset=".91" stop-color="#2806b2"/><stop offset="1" stop-color="#3806af"/></linearGradient><linearGradient id="gmh" x1=".5" y1="1" x2=".5" y2="0"><stop stop-color="#0b6d83"/><stop offset="1" stop-color="#0b39ac"/></linearGradient><linearGradient id="gmi" x1=".45" y1=".98" x2=".55" y2=".02"><stop stop-color="#027476"/><stop offset="1" stop-color="#02519c"/></linearGradient><linearGradient id="gmj" x1=".36" y1=".92" x2=".64" y2=".08"><stop stop-color="#007071"/><stop offset="1" stop-color="#00588e"/></linearGradient><linearGradient id="gmk" x1=".09" y1="1.01" x2=".91" y2="-.01"><stop stop-color="#006767"/><stop offset="1" stop-color="#004989"/></linearGradient><linearGradient id="gml" x1="-.08" y1=".88" x2="1.08" y2=".12"><stop stop-color="#005664"/><stop offset="1" stop-color="#002e86"/></linearGradient><linearGradient id="gmm" x1="-.1" y1=".71" x2="1.1" y2=".3"><stop stop-color="#004167"/><stop offset=".44" stop-color="#002d76"/><stop offset=".67" stop-color="#001e7c"/><stop offset=".89" stop-color="#000082"/><stop offset="1" stop-color="#1b007f"/></linearGradient><linearGradient id="gmn" x1="-.07" y1=".61" x2="1.07" y2=".4"><stop stop-color="#00286e"/><stop offset=".19" stop-color="#001b74"/><stop offset=".39" stop-color="#000079"/><stop offset=".54" stop-color="#1f0075"/><stop offset=".69" stop-color="#2e0071"/><stop offset="1" stop-color="#420068"/></linearGradient><linearGradient id="gmo" x1="-.07" y1=".59" x2="1.06" y2=".41"><stop stop-color="#1a0074"/><stop offset=".5" stop-color="#410066"/><stop offset="1" stop-color="#580054"/></linearGradient><linearGradient id="gmp" x1="-.09" y1=".66" x2="1.09" y2=".35"><stop stop-color="#450069"/><stop offset="1" stop-color="#6c0040"/></linearGradient><linearGradient id="gmq" x1="-.1" y1=".81" x2="1.1" y2=".19"><stop stop-color="#640061"/><stop offset=".5" stop-color="#75004a"/><stop offset="1" stop-color="#830026"/></linearGradient><linearGradient id="gmr" x1="-.03" y1=".97" x2="1.03" y2=".04"><stop stop-color="#810057"/><stop offset=".45" stop-color="#8d003e"/><stop offset=".67" stop-color="#93002b"/><stop offset=".78" stop-color="#95001c"/><stop offset=".89" stop-color="#980000"/><stop offset="1" stop-color="#981d00"/></linearGradient><linearGradient id="gms" x1=".23" y1="1" x2=".77" y2="0"><stop stop-color="#99004d"/><stop offset=".35" stop-color="#a10036"/><stop offset=".53" stop-color="#a50025"/><stop offset=".62" stop-color="#a70018"/><stop offset=".71" stop-color="#a90000"/><stop offset=".78" stop-color="#a91600"/><stop offset=".85" stop-color="#a92200"/><stop offset="1" stop-color="#a93200"/></linearGradient><linearGradient id="gmt" x1=".4" y1=".96" x2=".6" y2=".04"><stop stop-color="#a30053"/><stop offset=".35" stop-color="#ac003a"/><stop offset=".53" stop-color="#b00028"/><stop offset=".62" stop-color="#b2001b"/><stop offset=".71" stop-color="#b40000"/><stop offset=".78" stop-color="#b41800"/><stop offset=".85" stop-color="#b42500"/><stop offset="1" stop-color="#b43600"/></linearGradient><linearGradient id="gmu" x1=".47" y1=".99" x2=".53" y2=".01"><stop stop-color="#9c0e6c"/><stop offset=".45" stop-color="#ab0e4e"/><stop offset=".67" stop-color="#b10e39"/><stop offset=".78" stop-color="#b50e29"/><stop offset=".89" stop-color="#b80e0e"/><stop offset="1" stop-color="#b82a0e"/></linearGradient><linearGradient id="gmv" x1=".51" y1="1" x2=".49" y2="0"><stop stop-color="#880783"/><stop offset=".5" stop-color="#9e0766"/><stop offset="1" stop-color="#b00738"/></linearGradient><linearGradient id="gmw" x1=".53" y1="1.01" x2=".47" y2="0"><stop stop-color="#67019a"/><stop offset="1" stop-color="#9e0161"/></linearGradient><linearGradient id="gmx" x1=".54" y1="1.01" x2=".46" y2="0"><stop stop-color="#2c00af"/><stop offset=".25" stop-color="#4f00a5"/><stop offset=".5" stop-color="#65009a"/><stop offset="1" stop-color="#860080"/></linearGradient><linearGradient id="gmy" x1=".53" y1="1.01" x2=".47" y2="0"><stop stop-color="#0040a4"/><stop offset=".19" stop-color="#002cac"/><stop offset=".29" stop-color="#001eb0"/><stop offset=".39" stop-color="#0000b4"/><stop offset=".46" stop-color="#2200b1"/><stop offset=".54" stop-color="#3200ae"/><stop offset=".69" stop-color="#4800a8"/><stop offset="1" stop-color="#64009b"/></linearGradient><linearGradient id="gmz" x1=".52" y1="1" x2=".48" y2="0"><stop stop-color="#015d91"/><stop offset=".44" stop-color="#0143a4"/><stop offset=".67" stop-color="#012ead"/><stop offset=".78" stop-color="#0120b1"/><stop offset=".89" stop-color="#0101b6"/><stop offset=".94" stop-color="#1c01b4"/><stop offset="1" stop-color="#2a01b2"/></linearGradient><linearGradient id="gn0" x1=".49" y1="1" x2=".51" y2="0"><stop stop-color="#056e80"/><stop offset="1" stop-color="#053daa"/></linearGradient><linearGradient id="gn1" x1=".43" y1=".98" x2=".57" y2=".02"><stop stop-color="#037475"/><stop offset="1" stop-color="#03539a"/></linearGradient><linearGradient id="gn2" x1=".32" y1=".92" x2=".67" y2=".08"><stop stop-color="#006f6f"/><stop offset="1" stop-color="#00588c"/></linearGradient><linearGradient id="gn3" x1=".04" y1=".96" x2=".95" y2=".03"><stop stop-color="#006466"/><stop offset="1" stop-color="#004688"/></linearGradient><linearGradient id="gn4" x1="-.09" y1=".85" x2="1.09" y2=".16"><stop stop-color="#005364"/><stop offset="1" stop-color="#002886"/></linearGradient><linearGradient id="gn5" x1="-.11" y1=".75" x2="1.1" y2=".26"><stop stop-color="#003e68"/><stop offset=".41" stop-color="#002b75"/><stop offset=".61" stop-color="#001d7b"/><stop offset=".81" stop-color="#000080"/><stop offset=".91" stop-color="#18007e"/><stop offset="1" stop-color="#24007c"/></linearGradient><linearGradient id="gn6" x1="-.1" y1=".7" x2="1.1" y2=".31"><stop stop-color="#002370"/><stop offset=".16" stop-color="#001774"/><stop offset=".31" stop-color="#000079"/><stop offset=".48" stop-color="#210074"/><stop offset=".66" stop-color="#30006f"/><stop offset="1" stop-color="#450065"/></linearGradient><linearGradient id="gn7" x1="-.1" y1=".7" x2="1.1" y2=".31"><stop stop-color="#230072"/><stop offset=".5" stop-color="#460063"/><stop offset="1" stop-color="#5b0051"/></linearGradient><linearGradient id="gn8" x1="-.11" y1=".75" x2="1.1" y2=".26"><stop stop-color="#4a0068"/><stop offset="1" stop-color="#6f003d"/></linearGradient><linearGradient id="gn9" x1="-.09" y1=".84" x2="1.09" y2=".17"><stop stop-color="#68005f"/><stop offset=".5" stop-color="#790048"/><stop offset="1" stop-color="#860020"/></linearGradient><linearGradient id="gna" x1="-.03" y1=".95" x2="1.03" y2=".05"><stop stop-color="#850056"/><stop offset=".43" stop-color="#90003d"/><stop offset=".64" stop-color="#96002a"/><stop offset=".75" stop-color="#98001c"/><stop offset=".85" stop-color="#9b0000"/><stop offset=".93" stop-color="#9b1700"/><stop offset="1" stop-color="#9b2300"/></linearGradient><linearGradient id="gnb" x1=".26" y1=".96" x2=".74" y2=".04"><stop stop-color="#9c004c"/><stop offset=".35" stop-color="#a40035"/><stop offset=".52" stop-color="#a70024"/><stop offset=".61" stop-color="#a90018"/><stop offset=".7" stop-color="#ab0000"/><stop offset=".77" stop-color="#ab1600"/><stop offset=".85" stop-color="#ab2300"/><stop offset="1" stop-color="#ab3300"/></linearGradient><linearGradient id="gnc" x1=".4" y1=".97" x2=".6" y2=".03"><stop stop-color="#a30456"/><stop offset=".36" stop-color="#ac043e"/><stop offset=".54" stop-color="#b1042b"/><stop offset=".63" stop-color="#b3041e"/><stop offset=".72" stop-color="#b50404"/><stop offset=".79" stop-color="#b51a04"/><stop offset=".86" stop-color="#b52704"/><stop offset="1" stop-color="#b53704"/></linearGradient><linearGradient id="gnd" x1=".11" y1="1" x2=".89" y2="-.01"><stop stop-color="#85006c"/><stop offset="1" stop-color="#9b0044"/></linearGradient><linearGradient id="gne" x1=".39" y1=".95" x2=".6" y2=".05"><stop stop-color="#930072"/><stop offset="1" stop-color="#a8004a"/></linearGradient><linearGradient id="gnf" x1=".48" y1=".99" x2=".52" y2=".01"><stop stop-color="#8f2688"/><stop offset="1" stop-color="#ad265b"/></linearGradient><linearGradient id="gng" x1=".52" y1="1.01" x2=".48" y2="0"><stop stop-color="#7b2c9b"/><stop offset="1" stop-color="#a32c6f"/></linearGradient><linearGradient id="gnh" x1=".54" y1="1.01" x2=".46" y2="-.01"><stop stop-color="#4c10a9"/><stop offset=".5" stop-color="#711096"/><stop offset="1" stop-color="#8b107f"/></linearGradient><linearGradient id="gni" x1=".55" y1="1.01" x2=".45" y2="-.01"><stop stop-color="#052fab"/><stop offset=".11" stop-color="#0520b0"/><stop offset=".22" stop-color="#0505b4"/><stop offset=".32" stop-color="#2705b0"/><stop offset=".42" stop-color="#3805ad"/><stop offset=".61" stop-color="#4e05a6"/><stop offset="1" stop-color="#6c0596"/></linearGradient><linearGradient id="gnj" x1=".55" y1="1.01" x2=".45" y2="-.01"><stop stop-color="#045795"/><stop offset=".39" stop-color="#043ea5"/><stop offset=".59" stop-color="#042cad"/><stop offset=".68" stop-color="#041eb0"/><stop offset=".78" stop-color="#0404b4"/><stop offset=".84" stop-color="#1c04b2"/><stop offset=".89" stop-color="#2904b0"/><stop offset="1" stop-color="#3a04ac"/></linearGradient><linearGradient id="gnk" x1=".54" y1="1.01" x2=".46" y2="-.01"><stop stop-color="#0c6f7e"/><stop offset="1" stop-color="#0c3ca9"/></linearGradient><linearGradient id="gnl" x1=".52" y1="1" x2=".48" y2="0"><stop stop-color="#21826c"/><stop offset="1" stop-color="#216199"/></linearGradient><linearGradient id="gnm" x1=".46" y1=".99" x2=".54" y2=".01"><stop stop-color="#158759"/><stop offset="1" stop-color="#156f85"/></linearGradient><linearGradient id="gnn" x1=".35" y1=".91" x2=".65" y2=".09"><stop stop-color="#008051"/><stop offset="1" stop-color="#007173"/></linearGradient><linearGradient id="gno" x1=".01" y1=".94" x2=".98" y2=".06"><stop stop-color="#007449"/><stop offset="1" stop-color="#006070"/></linearGradient><linearGradient id="gnp" x1="-.1" y1=".72" x2="1.1" y2=".28"><stop stop-color="#00614b"/><stop offset="1" stop-color="#004770"/></linearGradient><linearGradient id="gnq" x1="-.04" y1=".55" x2="1.04" y2=".46"><stop stop-color="#004c52"/><stop offset="1" stop-color="#002a72"/></linearGradient><linearGradient id="gnr" x1=".04" y1=".47" x2=".96" y2=".54"><stop stop-color="#00385c"/><stop offset=".43" stop-color="#002668"/><stop offset=".65" stop-color="#00196e"/><stop offset=".87" stop-color="#000073"/><stop offset="1" stop-color="#190070"/></linearGradient><linearGradient id="gns" x1=".05" y1=".46" x2=".94" y2=".55"><stop stop-color="#001f69"/><stop offset=".31" stop-color="#000071"/><stop offset=".48" stop-color="#1d006d"/><stop offset=".65" stop-color="#2b0068"/><stop offset="1" stop-color="#3e005f"/></linearGradient><linearGradient id="gnt" x1="-.01" y1=".51" x2="1" y2=".5"><stop stop-color="#270070"/><stop offset="1" stop-color="#570054"/></linearGradient><linearGradient id="gnu" x1="-.09" y1=".65" x2="1.08" y2=".36"><stop stop-color="#4e006d"/><stop offset="1" stop-color="#6f004b"/></linearGradient><linearGradient id="gnv" x1="-.09" y1=".85" x2="1.09" y2=".16"><stop stop-color="#6e006c"/><stop offset="1" stop-color="#804"/></linearGradient><linearGradient id="gnw" x1=".18" y1=".97" x2=".82" y2=".02"><stop stop-color="#89006c"/><stop offset="1" stop-color="#9e0045"/></linearGradient><linearGradient id="gnx" x1=".4" y1=".96" x2=".6" y2=".04"><stop stop-color="#930374"/><stop offset="1" stop-color="#a9034b"/></linearGradient><linearGradient id="gny" x1=".49" y1="1" x2=".51" y2="0"><stop stop-color="#8f2e8c"/><stop offset="1" stop-color="#ad2e61"/></linearGradient><linearGradient id="gnz" x1=".53" y1="1" x2=".47" y2="0"><stop stop-color="#700f99"/><stop offset="1" stop-color="#9c0f6b"/></linearGradient><linearGradient id="go0" x1=".55" y1="1.01" x2=".45" y2="0"><stop stop-color="#4001ab"/><stop offset=".5" stop-color="#6a0198"/><stop offset="1" stop-color="#860182"/></linearGradient><linearGradient id="go1" x1=".56" y1="1.01" x2=".44" y2="0"><stop stop-color="#0036a8"/><stop offset=".15" stop-color="#0025ae"/><stop offset=".23" stop-color="#0018b1"/><stop offset=".31" stop-color="#0000b3"/><stop offset=".35" stop-color="#1700b2"/><stop offset=".39" stop-color="#2300b0"/><stop offset=".48" stop-color="#3300ad"/><stop offset=".65" stop-color="#4900a7"/><stop offset="1" stop-color="#609"/></linearGradient><linearGradient id="go2" x1=".56" y1="1.01" x2=".44" y2="0"><stop stop-color="#005b91"/><stop offset=".43" stop-color="#0040a3"/><stop offset=".65" stop-color="#002dac"/><stop offset=".76" stop-color="#001eb0"/><stop offset=".87" stop-color="#0000b4"/><stop offset=".93" stop-color="#1e00b2"/><stop offset="1" stop-color="#2c00af"/></linearGradient><linearGradient id="go3" x1=".54" y1="1.01" x2=".46" y2="0"><stop stop-color="#027179"/><stop offset="1" stop-color="#0241a6"/></linearGradient><linearGradient id="go4" x1=".51" y1="1" x2=".49" y2="0"><stop stop-color="#128165"/><stop offset="1" stop-color="#126194"/></linearGradient><linearGradient id="go5" x1=".44" y1=".98" x2=".56" y2=".02"><stop stop-color="#178758"/><stop offset="1" stop-color="#177183"/></linearGradient><linearGradient id="go6" x1=".31" y1=".9" x2=".69" y2=".1"><stop stop-color="#007f50"/><stop offset="1" stop-color="#006f72"/></linearGradient><linearGradient id="go7" x1="-.01" y1=".9" x2="1" y2=".1"><stop stop-color="#007249"/><stop offset="1" stop-color="#005d70"/></linearGradient><linearGradient id="go8" x1="-.11" y1=".73" x2="1.1" y2=".27"><stop stop-color="#005e4c"/><stop offset="1" stop-color="#004370"/></linearGradient><linearGradient id="go9" x1="-.08" y1=".63" x2="1.08" y2=".38"><stop stop-color="#004953"/><stop offset="1" stop-color="#002472"/></linearGradient><linearGradient id="goa" x1="-.06" y1=".58" x2="1.06" y2=".43"><stop stop-color="#00345d"/><stop offset=".39" stop-color="#002468"/><stop offset=".59" stop-color="#00176d"/><stop offset=".78" stop-color="#000072"/><stop offset="1" stop-color="#21006d"/></linearGradient><linearGradient id="gob" x1="-.06" y1=".58" x2="1.06" y2=".43"><stop stop-color="#00196c"/><stop offset=".22" stop-color="#000071"/><stop offset=".42" stop-color="#1f006d"/><stop offset=".61" stop-color="#2e0068"/><stop offset="1" stop-color="#42005d"/></linearGradient><linearGradient id="goc" x1="-.08" y1=".63" x2="1.08" y2=".38"><stop stop-color="#2e006f"/><stop offset="1" stop-color="#5a0052"/></linearGradient><linearGradient id="god" x1="-.1" y1=".73" x2="1.1" y2=".28"><stop stop-color="#53006d"/><stop offset="1" stop-color="#730049"/></linearGradient><linearGradient id="goe" x1="-.07" y1=".86" x2="1.07" y2=".13"><stop stop-color="#73006c"/><stop offset="1" stop-color="#8c0043"/></linearGradient><linearGradient id="gof" x1=".23" y1=".94" x2=".77" y2=".06"><stop stop-color="#8c006c"/><stop offset="1" stop-color="#a00046"/></linearGradient><linearGradient id="gog" x1=".41" y1=".97" x2=".59" y2=".03"><stop stop-color="#951c7a"/><stop offset="1" stop-color="#ac1c51"/></linearGradient><linearGradient id="goh" x1="-.02" y1=".87" x2="1.02" y2=".13"><stop stop-color="#77007a"/><stop offset="1" stop-color="#8a0064"/></linearGradient><linearGradient id="goi" x1=".39" y1=".96" x2=".61" y2=".04"><stop stop-color="#870284"/><stop offset="1" stop-color="#98026f"/></linearGradient><linearGradient id="goj" x1=".52" y1="1" x2=".48" y2="0"><stop stop-color="#b187c1"/><stop offset="1" stop-color="#c487ad"/></linearGradient><linearGradient id="gok" x1=".57" y1="1.01" x2=".43" y2="-.01"><stop stop-color="#6f3dab"/><stop offset="1" stop-color="#943d8d"/></linearGradient><linearGradient id="gol" x1=".59" y1="1.01" x2=".41" y2="0"><stop stop-color="#1c09b2"/><stop offset=".25" stop-color="#3f09ab"/><stop offset=".5" stop-color="#5409a3"/><stop offset="1" stop-color="#710993"/></linearGradient><linearGradient id="gom" x1=".6" y1="1.01" x2=".4" y2="0"><stop stop-color="#02469d"/><stop offset=".3" stop-color="#0231a8"/><stop offset=".45" stop-color="#0221ac"/><stop offset=".6" stop-color="#0202b1"/><stop offset=".7" stop-color="#2302ae"/><stop offset=".8" stop-color="#3202ab"/><stop offset="1" stop-color="#4802a5"/></linearGradient><linearGradient id="gon" x1=".6" y1="1.01" x2=".4" y2="0"><stop stop-color="#016484"/><stop offset=".5" stop-color="#014e98"/><stop offset="1" stop-color="#012da9"/></linearGradient><linearGradient id="goo" x1=".59" y1="1.01" x2=".41" y2="0"><stop stop-color="#08796a"/><stop offset="1" stop-color="#085895"/></linearGradient><linearGradient id="gop" x1=".56" y1="1.01" x2=".44" y2="-.01"><stop stop-color="#3d9360"/><stop offset="1" stop-color="#3d7e8b"/></linearGradient><linearGradient id="goq" x1=".16" y1=".41" x2=".84" y2=".59"><stop stop-color="#004c3d"/><stop offset="1" stop-color="#00375a"/></linearGradient><linearGradient id="gor" x1=".25" y1=".4" x2=".75" y2=".61"><stop stop-color="#003848"/><stop offset="1" stop-color="#001b5e"/></linearGradient><linearGradient id="gos" x1=".26" y1=".4" x2=".73" y2=".61"><stop stop-color="#002655"/><stop offset=".35" stop-color="#00195c"/><stop offset=".7" stop-color="#000062"/><stop offset="1" stop-color="#1f005d"/></linearGradient><linearGradient id="got" x1=".21" y1=".4" x2=".79" y2=".6"><stop stop-color="#000468"/><stop offset=".04" stop-color="#000069"/><stop offset=".28" stop-color="#1c0065"/><stop offset=".52" stop-color="#2a0061"/><stop offset="1" stop-color="#3d0057"/></linearGradient><linearGradient id="gou" x1=".07" y1=".45" x2=".92" y2=".56"><stop stop-color="#38006d"/><stop offset="1" stop-color="#580056"/></linearGradient><linearGradient id="gov" x1="-.07" y1=".61" x2="1.07" y2=".4"><stop stop-color="#5c0073"/><stop offset="1" stop-color="#74005b"/></linearGradient><linearGradient id="gow" x1=".08" y1=".91" x2=".92" y2=".09"><stop stop-color="#7b007b"/><stop offset="1" stop-color="#8d0066"/></linearGradient><linearGradient id="gox" x1=".41" y1=".97" x2=".59" y2=".03"><stop stop-color="#8d2c8d"/><stop offset="1" stop-color="#9f2c77"/></linearGradient><linearGradient id="goy" x1=".53" y1="1" x2=".47" y2="0"><stop stop-color="#9e6db3"/><stop offset="1" stop-color="#b46d9d"/></linearGradient><linearGradient id="goz" x1=".58" y1="1" x2=".42" y2="0"><stop stop-color="#590ca5"/><stop offset="1" stop-color="#870c84"/></linearGradient><linearGradient id="gp0" x1=".6" y1="1" x2=".4" y2="0"><stop stop-color="#000eb1"/><stop offset=".04" stop-color="#0000b2"/><stop offset=".1" stop-color="#1800b1"/><stop offset=".16" stop-color="#2500af"/><stop offset=".28" stop-color="#3600ac"/><stop offset=".52" stop-color="#4d00a4"/><stop offset="1" stop-color="#6c0095"/></linearGradient><linearGradient id="gp1" x1=".61" y1="1" x2=".39" y2="0"><stop stop-color="#004b9a"/><stop offset=".35" stop-color="#0035a6"/><stop offset=".52" stop-color="#0024ab"/><stop offset=".61" stop-color="#0017ae"/><stop offset=".7" stop-color="#0000b1"/><stop offset=".77" stop-color="#1d00af"/><stop offset=".85" stop-color="#2b00ac"/><stop offset="1" stop-color="#3e00a8"/></linearGradient><linearGradient id="gp2" x1=".61" y1="1" x2=".4" y2="0"><stop stop-color="#006780"/><stop offset="1" stop-color="#0035a6"/></linearGradient><linearGradient id="gp3" x1=".6" y1="1" x2=".41" y2="0"><stop stop-color="#017b64"/><stop offset="1" stop-color="#015b91"/></linearGradient><linearGradient id="gp4" x1=".56" y1="1" x2=".44" y2="0"><stop stop-color="#1f8d4e"/><stop offset="1" stop-color="#1f777f"/></linearGradient><linearGradient id="gp5" x1=".47" y1=".99" x2=".53" y2=".01"><stop stop-color="#78b680"/><stop offset="1" stop-color="#78ab99"/></linearGradient><linearGradient id="gp6" x1=".29" y1=".88" x2=".71" y2=".12"><stop stop-color="#01892b"/><stop offset="1" stop-color="#018052"/></linearGradient><linearGradient id="gp7" x1="-.06" y1=".74" x2="1.06" y2=".25"><stop stop-color="#007726"/><stop offset="1" stop-color="#006a56"/></linearGradient><linearGradient id="gp8" x1="-.04" y1=".56" x2="1.04" y2=".45"><stop stop-color="#005f33"/><stop offset="1" stop-color="#004e59"/></linearGradient><linearGradient id="gp9" x1=".03" y1=".48" x2=".97" y2=".53"><stop stop-color="#00493f"/><stop offset="1" stop-color="#00335b"/></linearGradient><linearGradient id="gpa" x1=".07" y1=".45" x2=".93" y2=".56"><stop stop-color="#003649"/><stop offset="1" stop-color="#00155f"/></linearGradient><linearGradient id="gpb" x1=".07" y1=".45" x2=".93" y2=".56"><stop stop-color="#002357"/><stop offset=".3" stop-color="#00175d"/><stop offset=".6" stop-color="#000063"/><stop offset=".8" stop-color="#18005f"/><stop offset="1" stop-color="#24005c"/></linearGradient><linearGradient id="gpc" x1=".03" y1=".48" x2=".97" y2=".53"><stop stop-color="#0a006a"/><stop offset=".25" stop-color="#210066"/><stop offset=".5" stop-color="#2f0061"/><stop offset="1" stop-color="#410056"/></linearGradient><linearGradient id="gpd" x1="-.04" y1=".55" x2="1.04" y2=".46"><stop stop-color="#3e006e"/><stop offset="1" stop-color="#5c0057"/></linearGradient><linearGradient id="gpe" x1="-.09" y1=".69" x2="1.08" y2=".3"><stop stop-color="#620075"/><stop offset="1" stop-color="#79005c"/></linearGradient><linearGradient id="gpf" x1=".18" y1=".9" x2=".82" y2=".1"><stop stop-color="#7f007c"/><stop offset="1" stop-color="#8f0068"/></linearGradient><linearGradient id="gpg" x1=".43" y1=".98" x2=".57" y2=".02"><stop stop-color="#b07ab2"/><stop offset="1" stop-color="#bf7aa2"/></linearGradient><linearGradient id="gph" x1=".01" y1=".49" x2=".99" y2=".51"><stop stop-color="#6b0078"/><stop offset="1" stop-color="#76006d"/></linearGradient><linearGradient id="gpi" x1=".46" y1=".99" x2=".54" y2="0"><stop stop-color="#7e0087"/><stop offset="1" stop-color="#87007e"/></linearGradient><linearGradient id="gpj" x1=".64" y1=".98" x2=".36" y2=".03"><stop stop-color="#782999"/><stop offset="1" stop-color="#8b2988"/></linearGradient><linearGradient id="gpk" x1=".68" y1=".96" x2=".33" y2=".03"><stop stop-color="#5102a0"/><stop offset="1" stop-color="#75028b"/></linearGradient><linearGradient id="gpl" x1=".69" y1=".96" x2=".31" y2=".04"><stop stop-color="#0016a9"/><stop offset=".12" stop-color="#0000ab"/><stop offset=".23" stop-color="#1d00a9"/><stop offset=".34" stop-color="#2b00a7"/><stop offset=".56" stop-color="#3e00a2"/><stop offset="1" stop-color="#580098"/></linearGradient><linearGradient id="gpm" x1=".69" y1=".96" x2=".31" y2=".04"><stop stop-color="#004a92"/><stop offset=".47" stop-color="#00349e"/><stop offset=".7" stop-color="#0023a4"/><stop offset=".81" stop-color="#0017a7"/><stop offset=".93" stop-color="#0000a9"/><stop offset="1" stop-color="#1600a8"/></linearGradient><linearGradient id="gpn" x1=".69" y1=".96" x2=".31" y2=".04"><stop stop-color="#006478"/><stop offset="1" stop-color="#004297"/></linearGradient><linearGradient id="gpo" x1=".69" y1=".96" x2=".31" y2=".04"><stop stop-color="#00775c"/><stop offset="1" stop-color="#006180"/></linearGradient><linearGradient id="gpp" x1=".68" y1=".96" x2=".32" y2=".04"><stop stop-color="#04873a"/><stop offset="1" stop-color="#047768"/></linearGradient><linearGradient id="gpq" x1=".44" y1=".46" x2=".55" y2=".55"><stop stop-color="#001b38"/><stop offset="1" stop-color="#000244"/></linearGradient><linearGradient id="gpr" x1=".41" y1=".44" x2=".59" y2=".57"><stop stop-color="#000a4b"/><stop offset=".24" stop-color="#00004e"/><stop offset="1" stop-color="#210045"/></linearGradient><linearGradient id="gps" x1=".32" y1=".41" x2=".68" y2=".6"><stop stop-color="#26005b"/><stop offset="1" stop-color="#3d004e"/></linearGradient><linearGradient id="gpt" x1=".15" y1=".41" x2=".85" y2=".59"><stop stop-color="#4c006a"/><stop offset="1" stop-color="#5c005c"/></linearGradient><linearGradient id="gpu" x1="-.03" y1=".63" x2="1.03" y2=".37"><stop stop-color="#70007b"/><stop offset="1" stop-color="#7a0071"/></linearGradient><linearGradient id="gpv" x1=".52" y1="1" x2=".48" y2="0"><stop stop-color="#7e0c8b"/><stop offset="1" stop-color="#890c80"/></linearGradient><linearGradient id="gpw" x1=".67" y1=".97" x2=".33" y2=".03"><stop stop-color="#6f0e97"/><stop offset="1" stop-color="#850e85"/></linearGradient><linearGradient id="gpx" x1=".69" y1=".96" x2=".31" y2=".05"><stop stop-color="#4900a2"/><stop offset="1" stop-color="#71008c"/></linearGradient><linearGradient id="gpy" x1=".7" y1=".95" x2=".3" y2=".05"><stop stop-color="#0023a6"/><stop offset=".12" stop-color="#0017a8"/><stop offset=".24" stop-color="#0000ab"/><stop offset=".34" stop-color="#1a00a9"/><stop offset=".43" stop-color="#2800a7"/><stop offset=".62" stop-color="#3a00a3"/><stop offset="1" stop-color="#52009a"/></linearGradient><linearGradient id="gpz" x1=".7" y1=".95" x2=".3" y2=".05"><stop stop-color="#004e8e"/><stop offset=".5" stop-color="#00389c"/><stop offset=".75" stop-color="#0029a2"/><stop offset="1" stop-color="#000ca8"/></linearGradient><linearGradient id="gq0" x1=".7" y1=".95" x2=".3" y2=".05"><stop stop-color="#006774"/><stop offset="1" stop-color="#004894"/></linearGradient><linearGradient id="gq1" x1=".71" y1=".95" x2=".3" y2=".05"><stop stop-color="#007a57"/><stop offset="1" stop-color="#00647d"/></linearGradient><linearGradient id="gq2" x1=".69" y1=".95" x2=".31" y2=".05"><stop stop-color="#018834"/><stop offset="1" stop-color="#017963"/></linearGradient><linearGradient id="gq3" x1=".63" y1=".99" x2=".37" y2=".01"><stop stop-color="#2f972f"/><stop offset="1" stop-color="#2f8f54"/></linearGradient><linearGradient id="gq4" x1=".23" y1=".84" x2=".77" y2=".16"><stop stop-color="#080"/><stop offset=".5" stop-color="#00871d"/><stop offset="1" stop-color="#00852b"/></linearGradient><linearGradient id="gq5" x1=".02" y1=".47" x2=".98" y2=".53"><stop stop-color="#007006"/><stop offset=".5" stop-color="#006c28"/><stop offset="1" stop-color="#006839"/></linearGradient><linearGradient id="gq6" x1=".26" y1=".4" x2=".74" y2=".6"><stop stop-color="#002630"/><stop offset="1" stop-color="#00173e"/></linearGradient><linearGradient id="gq7" x1=".26" y1=".4" x2=".74" y2=".61"><stop stop-color="#001a3a"/><stop offset=".93" stop-color="#000045"/><stop offset="1" stop-color="#040044"/></linearGradient><linearGradient id="gq8" x1=".22" y1=".4" x2=".78" y2=".61"><stop stop-color="#00054f"/><stop offset=".12" stop-color="#000050"/><stop offset=".56" stop-color="#19004b"/><stop offset="1" stop-color="#260046"/></linearGradient><linearGradient id="gq9" x1=".15" y1=".41" x2=".85" y2=".59"><stop stop-color="#2c005d"/><stop offset="1" stop-color="#420050"/></linearGradient><linearGradient id="gqa" x1=".04" y1=".46" x2=".96" y2=".54"><stop stop-color="#52006c"/><stop offset="1" stop-color="#61005f"/></linearGradient><linearGradient id="gqb" x1=".04" y1=".77" x2=".96" y2=".23"><stop stop-color="#74007d"/><stop offset="1" stop-color="#7d0074"/></linearGradient><linearGradient id="gqc" x1=".57" y1="1" x2=".43" y2="-.01"><stop stop-color="#812290"/><stop offset="1" stop-color="#8d2284"/></linearGradient><linearGradient id="gqd" x1=".28" y1=".2" x2=".72" y2=".8"><stop stop-color="#54005e"/><stop offset="1" stop-color="#5b0058"/></linearGradient><linearGradient id="gqe" x1="1" y1=".5" x2="0" y2=".5"><stop stop-color="#6b0073"/><stop offset="1" stop-color="#71006d"/></linearGradient><linearGradient id="gqf" x1=".93" y1=".78" x2=".07" y2=".22"><stop stop-color="#630082"/><stop offset="1" stop-color="#730075"/></linearGradient><linearGradient id="gqg" x1=".89" y1=".85" x2=".11" y2=".15"><stop stop-color="#47008f"/><stop offset="1" stop-color="#65007e"/></linearGradient><linearGradient id="gqh" x1=".87" y1=".88" x2=".14" y2=".11"><stop stop-color="#001399"/><stop offset=".13" stop-color="#00009b"/><stop offset=".23" stop-color="#170099"/><stop offset=".34" stop-color="#240097"/><stop offset=".56" stop-color="#350093"/><stop offset="1" stop-color="#4b008b"/></linearGradient><linearGradient id="gqi" x1=".86" y1=".89" x2=".14" y2=".11"><stop stop-color="#004284"/><stop offset=".5" stop-color="#002e8f"/><stop offset=".75" stop-color="#001f95"/><stop offset="1" stop-color="#00019a"/></linearGradient><linearGradient id="gqj" x1=".86" y1=".89" x2=".14" y2=".11"><stop stop-color="#005a6d"/><stop offset="1" stop-color="#003e87"/></linearGradient><linearGradient id="gqk" x1=".88" y1=".86" x2=".13" y2=".14"><stop stop-color="#006b52"/><stop offset="1" stop-color="#005971"/></linearGradient><linearGradient id="gql" x1=".9" y1=".81" x2=".1" y2=".18"><stop stop-color="#007833"/><stop offset="1" stop-color="#006b58"/></linearGradient><linearGradient id="gqm" x1=".38" y1=".41" x2=".61" y2=".59"><stop stop-color="#00340f"/><stop offset="1" stop-color="#002f22"/></linearGradient><linearGradient id="gqn" x1=".53" y1=".53" x2=".47" y2=".47"><stop stop-color="#00161a"/><stop offset="1" stop-color="#000d22"/></linearGradient><linearGradient id="gqo" x1=".53" y1=".54" x2=".46" y2=".46"><stop stop-color="#001026"/><stop offset="1" stop-color="#00022e"/></linearGradient><linearGradient id="gqp" x1=".51" y1=".52" x2=".48" y2=".48"><stop stop-color="#000220"/><stop offset=".26" stop-color="#000021"/><stop offset="1" stop-color="#09001d"/></linearGradient><linearGradient id="gqq" x1=".46" y1=".46" x2=".54" y2=".54"><stop stop-color="#0d0029"/><stop offset="1" stop-color="#190023"/></linearGradient><linearGradient id="gqr" x1=".31" y1=".38" x2=".69" y2=".63"><stop stop-color="#330049"/><stop offset="1" stop-color="#3e0040"/></linearGradient><linearGradient id="gqs" x1=".3" y1=".07" x2=".7" y2=".92"><stop stop-color="#590062"/><stop offset="1" stop-color="#5f005c"/></linearGradient><linearGradient id="gqt" x1="1" y1=".53" x2="0" y2=".47"><stop stop-color="#6b0076"/><stop offset="1" stop-color="#72006e"/></linearGradient><linearGradient id="gqu" x1=".94" y1=".75" x2=".06" y2=".25"><stop stop-color="#600084"/><stop offset="1" stop-color="#720076"/></linearGradient><linearGradient id="gqv" x1=".9" y1=".82" x2=".1" y2=".18"><stop stop-color="#410091"/><stop offset="1" stop-color="#620080"/></linearGradient><linearGradient id="gqw" x1=".88" y1=".85" x2=".12" y2=".14"><stop stop-color="#001f96"/><stop offset=".26" stop-color="#00009b"/><stop offset=".45" stop-color="#210097"/><stop offset=".63" stop-color="#310094"/><stop offset="1" stop-color="#45008d"/></linearGradient><linearGradient id="gqx" x1=".87" y1=".86" x2=".13" y2=".14"><stop stop-color="#004681"/><stop offset=".5" stop-color="#00348c"/><stop offset="1" stop-color="#001597"/></linearGradient><linearGradient id="gqy" x1=".88" y1=".85" x2=".13" y2=".15"><stop stop-color="#005d69"/><stop offset="1" stop-color="#004384"/></linearGradient><linearGradient id="gqz" x1=".89" y1=".82" x2=".11" y2=".18"><stop stop-color="#006d4e"/><stop offset="1" stop-color="#005c6e"/></linearGradient><linearGradient id="gr0" x1=".93" y1=".77" x2=".08" y2=".23"><stop stop-color="#00792d"/><stop offset="1" stop-color="#006d54"/></linearGradient><linearGradient id="gr1" x1=".98" y1=".64" x2=".02" y2=".36"><stop stop-color="#007d00"/><stop offset=".25" stop-color="#007c18"/><stop offset=".5" stop-color="#007a25"/><stop offset="1" stop-color="#007736"/></linearGradient><linearGradient id="gr2" x1=".68" y1=".13" x2=".32" y2=".87"><stop stop-color="#007100"/><stop offset="1" stop-color="#006f1a"/></linearGradient><linearGradient id="gr3" x1=".29" y1=".38" x2=".71" y2=".63"><stop stop-color="#13002f"/><stop offset="1" stop-color="#1f0028"/></linearGradient><linearGradient id="gr4" x1=".18" y1=".29" x2=".82" y2=".7"><stop stop-color="#39004d"/><stop offset="1" stop-color="#430045"/></linearGradient><linearGradient id="gr5" x1=".41" y1="-.01" x2=".59" y2="1"><stop stop-color="#5e0065"/><stop offset="1" stop-color="#630060"/></linearGradient><linearGradient id="gr6" x1="1" y1=".52" x2="0" y2=".48"><stop stop-color="#6b0078"/><stop offset="1" stop-color="#740070"/></linearGradient><linearGradient id="gr7" x1=".78" y1=".15" x2=".22" y2=".83"><stop stop-color="#2b002e"/><stop offset="1" stop-color="#320026"/></linearGradient><linearGradient id="gr8" x1=".83" y1=".38" x2=".17" y2=".61"><stop stop-color="#4b004c"/><stop offset="1" stop-color="#540041"/></linearGradient><linearGradient id="gr9" x1="1.01" y1=".5" x2="0" y2=".49"><stop stop-color="#4e0062"/><stop offset="1" stop-color="#610050"/></linearGradient><linearGradient id="gra" x1="1.07" y1=".64" x2="-.07" y2=".36"><stop stop-color="#3e0074"/><stop offset="1" stop-color="#5d005e"/></linearGradient><linearGradient id="grb" x1="1.08" y1=".72" x2="-.08" y2=".27"><stop stop-color="#000183"/><stop offset=".01" stop-color="#000083"/><stop offset=".13" stop-color="#180081"/><stop offset=".25" stop-color="#25007e"/><stop offset=".5" stop-color="#360079"/><stop offset="1" stop-color="#4c006e"/></linearGradient><linearGradient id="grc" x1="1.08" y1=".75" x2="-.07" y2=".24"><stop stop-color="#003473"/><stop offset=".35" stop-color="#00247c"/><stop offset=".52" stop-color="#001780"/><stop offset=".7" stop-color="#000084"/><stop offset=".85" stop-color="#1d0081"/><stop offset="1" stop-color="#2b007d"/></linearGradient><linearGradient id="grd" x1="1.08" y1=".74" x2="-.07" y2=".25"><stop stop-color="#004a5f"/><stop offset="1" stop-color="#00267b"/></linearGradient><linearGradient id="gre" x1="1.07" y1=".69" x2="-.07" y2=".31"><stop stop-color="#005848"/><stop offset="1" stop-color="#004168"/></linearGradient><linearGradient id="grf" x1="1.05" y1=".58" x2="-.04" y2=".41"><stop stop-color="#005f2e"/><stop offset="1" stop-color="#004f53"/></linearGradient><linearGradient id="grg" x1=".61" y1=".63" x2=".39" y2=".37"><stop stop-color="#003527"/><stop offset="1" stop-color="#00273d"/></linearGradient><linearGradient id="grh" x1=".64" y1=".68" x2=".35" y2=".31"><stop stop-color="#00313c"/><stop offset="1" stop-color="#001a4f"/></linearGradient><linearGradient id="gri" x1=".65" y1=".7" x2=".35" y2=".3"><stop stop-color="#00244b"/><stop offset=".4" stop-color="#001752"/><stop offset=".8" stop-color="#000059"/><stop offset="1" stop-color="#140056"/></linearGradient><linearGradient id="grj" x1=".64" y1=".68" x2=".36" y2=".32"><stop stop-color="#000754"/><stop offset=".11" stop-color="#005"/><stop offset=".56" stop-color="#1e004f"/><stop offset="1" stop-color="#2d0048"/></linearGradient><linearGradient id="grk" x1=".6" y1=".61" x2=".4" y2=".39"><stop stop-color="#1d0043"/><stop offset="1" stop-color="#320035"/></linearGradient><linearGradient id="grl" x1=".73" y1=".17" x2=".27" y2=".83"><stop stop-color="#320034"/><stop offset="1" stop-color="#39002b"/></linearGradient><linearGradient id="grm" x1=".83" y1=".36" x2=".18" y2=".63"><stop stop-color="#4d0050"/><stop offset="1" stop-color="#570044"/></linearGradient><linearGradient id="grn" x1=".98" y1=".47" x2=".02" y2=".53"><stop stop-color="#4d0065"/><stop offset="1" stop-color="#610052"/></linearGradient><linearGradient id="gro" x1="1.05" y1=".59" x2="-.04" y2=".41"><stop stop-color="#390076"/><stop offset="1" stop-color="#5b0060"/></linearGradient><linearGradient id="grp" x1="1.06" y1=".66" x2="-.06" y2=".33"><stop stop-color="#001081"/><stop offset=".11" stop-color="#000083"/><stop offset=".22" stop-color="#170081"/><stop offset=".33" stop-color="#23007f"/><stop offset=".56" stop-color="#33007a"/><stop offset="1" stop-color="#490070"/></linearGradient><linearGradient id="grq" x1="1.06" y1=".69" x2="-.06" y2=".3"><stop stop-color="#003870"/><stop offset=".4" stop-color="#00277b"/><stop offset=".6" stop-color="#00197f"/><stop offset=".8" stop-color="#000084"/><stop offset="1" stop-color="#220080"/></linearGradient><linearGradient id="grr" x1="1.06" y1=".67" x2="-.05" y2=".32"><stop stop-color="#004d5c"/><stop offset="1" stop-color="#002c78"/></linearGradient><linearGradient id="grs" x1="1.05" y1=".61" x2="-.04" y2=".39"><stop stop-color="#005944"/><stop offset="1" stop-color="#004465"/></linearGradient><linearGradient id="grt" x1="1" y1=".5" x2="0" y2=".49"><stop stop-color="#005f2a"/><stop offset="1" stop-color="#00514f"/></linearGradient><linearGradient id="gru" x1=".9" y1=".38" x2=".11" y2=".62"><stop stop-color="#005b11"/><stop offset="1" stop-color="#005238"/></linearGradient><linearGradient id="grv" x1=".71" y1=".28" x2=".29" y2=".71"><stop stop-color="#00460b"/><stop offset="1" stop-color="#004221"/></linearGradient><linearGradient id="grw" x1=".69" y1=".2" x2=".32" y2=".79"><stop stop-color="#380039"/><stop offset="1" stop-color="#3f0030"/></linearGradient><linearGradient id="grx" x1=".8" y1=".33" x2=".2" y2=".66"><stop stop-color="#4e0053"/><stop offset="1" stop-color="#5a0046"/></linearGradient><linearGradient id="gry" x1=".68" y1=".41" x2=".32" y2=".6"><stop stop-color="#26001e"/><stop offset="1" stop-color="#2d0013"/></linearGradient><linearGradient id="grz" x1=".88" y1=".42" x2=".12" y2=".58"><stop stop-color="#3c003d"/><stop offset="1" stop-color="#4b0028"/></linearGradient><linearGradient id="gs0" x1="1.01" y1=".51" x2="-.01" y2=".49"><stop stop-color="#390053"/><stop offset="1" stop-color="#52003b"/></linearGradient><linearGradient id="gs1" x1="1.07" y1=".59" x2="-.06" y2=".42"><stop stop-color="#210065"/><stop offset="1" stop-color="#4c004d"/></linearGradient><linearGradient id="gs2" x1="1.08" y1=".62" x2="-.07" y2=".39"><stop stop-color="#001e66"/><stop offset=".33" stop-color="#00006d"/><stop offset=".5" stop-color="#1a006a"/><stop offset=".66" stop-color="#280066"/><stop offset="1" stop-color="#3a005e"/></linearGradient><linearGradient id="gs3" x1="1.07" y1=".61" x2="-.07" y2=".4"><stop stop-color="#003556"/><stop offset=".46" stop-color="#002462"/><stop offset=".68" stop-color="#001868"/><stop offset=".91" stop-color="#00006d"/><stop offset="1" stop-color="#11006b"/></linearGradient><linearGradient id="gs4" x1="1.04" y1=".55" x2="-.03" y2=".46"><stop stop-color="#004043"/><stop offset="1" stop-color="#00245e"/></linearGradient><linearGradient id="gs5" x1=".96" y1=".47" x2=".04" y2=".54"><stop stop-color="#00432f"/><stop offset="1" stop-color="#00314b"/></linearGradient><linearGradient id="gs6" x1=".84" y1=".41" x2=".17" y2=".6"><stop stop-color="#00381c"/><stop offset="1" stop-color="#002e33"/></linearGradient><linearGradient id="gs7" x1=".68" y1=".96" x2=".32" y2=".05"><stop stop-color="#00402a"/><stop offset="1" stop-color="#003045"/></linearGradient><linearGradient id="gs8" x1=".73" y1=".92" x2=".27" y2=".09"><stop stop-color="#00403f"/><stop offset="1" stop-color="#00265a"/></linearGradient><linearGradient id="gs9" x1=".73" y1=".93" x2=".27" y2=".08"><stop stop-color="#003652"/><stop offset=".5" stop-color="#00255f"/><stop offset=".75" stop-color="#001865"/><stop offset="1" stop-color="#00006a"/></linearGradient><linearGradient id="gsa" x1=".72" y1=".93" x2=".28" y2=".08"><stop stop-color="#002262"/><stop offset=".42" stop-color="#00006b"/><stop offset=".56" stop-color="#170068"/><stop offset=".71" stop-color="#240065"/><stop offset="1" stop-color="#35005e"/></linearGradient><linearGradient id="gsb" x1=".71" y1=".93" x2=".28" y2=".08"><stop stop-color="#190066"/><stop offset=".5" stop-color="#37005b"/><stop offset="1" stop-color="#48004e"/></linearGradient><linearGradient id="gsc" x1=".7" y1=".94" x2=".3" y2=".07"><stop stop-color="#360054"/><stop offset="1" stop-color="#50003c"/></linearGradient><linearGradient id="gsd" x1=".7" y1=".4" x2=".3" y2=".6"><stop stop-color="#2c0024"/><stop offset="1" stop-color="#340017"/></linearGradient><linearGradient id="gse" x1=".85" y1=".41" x2=".15" y2=".59"><stop stop-color="#3d0041"/><stop offset="1" stop-color="#4e002b"/></linearGradient><linearGradient id="gsf" x1=".96" y1=".47" x2=".05" y2=".54"><stop stop-color="#370056"/><stop offset="1" stop-color="#52003e"/></linearGradient><linearGradient id="gsg" x1="1.02" y1=".51" x2="-.01" y2=".49"><stop stop-color="#1a0068"/><stop offset=".5" stop-color="#38005d"/><stop offset="1" stop-color="#4a0050"/></linearGradient><linearGradient id="gsh" x1="1.03" y1=".54" x2="-.02" y2=".47"><stop stop-color="#002364"/><stop offset=".21" stop-color="#001669"/><stop offset=".42" stop-color="#00006d"/><stop offset=".56" stop-color="#18006a"/><stop offset=".71" stop-color="#250067"/><stop offset="1" stop-color="#360060"/></linearGradient><linearGradient id="gsi" x1="1.02" y1=".52" x2="-.01" y2=".49"><stop stop-color="#003753"/><stop offset=".5" stop-color="#002661"/><stop offset=".75" stop-color="#001967"/><stop offset="1" stop-color="#00006d"/></linearGradient><linearGradient id="gsj" x1=".97" y1=".47" x2=".03" y2=".52"><stop stop-color="#004140"/><stop offset="1" stop-color="#00275c"/></linearGradient><linearGradient id="gsk" x1=".9" y1=".42" x2=".11" y2=".57"><stop stop-color="#00422c"/><stop offset="1" stop-color="#003247"/></linearGradient><linearGradient id="gsl" x1=".78" y1=".38" x2=".22" y2=".61"><stop stop-color="#003519"/><stop offset="1" stop-color="#002c2e"/></linearGradient><linearGradient id="gsm" x1=".62" y1=".62" x2=".39" y2=".38"><stop stop-color="#003f42"/><stop offset="1" stop-color="#00235c"/></linearGradient><linearGradient id="gsn" x1=".64" y1=".65" x2=".36" y2=".34"><stop stop-color="#003454"/><stop offset=".46" stop-color="#002360"/><stop offset=".68" stop-color="#001766"/><stop offset=".91" stop-color="#00006b"/><stop offset="1" stop-color="#100069"/></linearGradient><linearGradient id="gso" x1=".65" y1=".66" x2=".35" y2=".33"><stop stop-color="#001d64"/><stop offset=".33" stop-color="#00006b"/><stop offset=".5" stop-color="#1a0068"/><stop offset=".66" stop-color="#270064"/><stop offset="1" stop-color="#39005c"/></linearGradient><linearGradient id="gsp" x1=".64" y1=".64" x2=".36" y2=".35"><stop stop-color="#200063"/><stop offset="1" stop-color="#4a004b"/></linearGradient><linearGradient id="gsq" x1=".59" y1=".59" x2=".42" y2=".42"><stop stop-color="#380051"/><stop offset="1" stop-color="#500039"/></linearGradient><linearGradient id="gsr" x1=".7" y1=".39" x2=".31" y2=".61"><stop stop-color="#31002a"/><stop offset="1" stop-color="#3a001b"/></linearGradient><linearGradient id="gss" x1=".79" y1=".4" x2=".22" y2=".6"><stop stop-color="#2a001c"/><stop offset="1" stop-color="#340002"/></linearGradient><linearGradient id="gst" x1=".93" y1=".45" x2=".07" y2=".56"><stop stop-color="#360037"/><stop offset="1" stop-color="#480018"/></linearGradient><linearGradient id="gsu" x1="1.01" y1=".51" x2="-.01" y2=".49"><stop stop-color="#2d004b"/><stop offset="1" stop-color="#4a002f"/></linearGradient><linearGradient id="gsv" x1="1.04" y1=".55" x2="-.03" y2=".46"><stop stop-color="#0c005a"/><stop offset=".5" stop-color="#2e004f"/><stop offset="1" stop-color="#400041"/></linearGradient><linearGradient id="gsw" x1="1.03" y1=".53" x2="-.02" y2=".48"><stop stop-color="#001e51"/><stop offset=".44" stop-color="#00005b"/><stop offset=".72" stop-color="#1e0055"/><stop offset="1" stop-color="#2d004f"/></linearGradient><linearGradient id="gsx" x1=".98" y1=".48" x2=".02" y2=".52"><stop stop-color="#002a41"/><stop offset=".48" stop-color="#001c4c"/><stop offset=".96" stop-color="#005"/><stop offset="1" stop-color="#050055"/></linearGradient><linearGradient id="gsy" x1=".89" y1=".43" x2=".12" y2=".58"><stop stop-color="#002a2e"/><stop offset="1" stop-color="#001541"/></linearGradient><linearGradient id="gsz" x1=".75" y1=".4" x2=".25" y2=".61"><stop stop-color="#001714"/><stop offset="1" stop-color="#000e1f"/></linearGradient><linearGradient id="gt0" x1=".45" y1=".56" x2=".55" y2=".44"><stop stop-color="#003a33"/><stop offset="1" stop-color="#002a47"/></linearGradient><linearGradient id="gt1" x1=".46" y1=".99" x2=".54" y2=".02"><stop stop-color="#004043"/><stop offset="1" stop-color="#00265d"/></linearGradient><linearGradient id="gt2" x1=".6" y1="1.01" x2=".4" y2="0"><stop stop-color="#003b54"/><stop offset=".5" stop-color="#002a63"/><stop offset=".75" stop-color="#001d69"/><stop offset="1" stop-color="#00066f"/></linearGradient><linearGradient id="gt3" x1=".63" y1="1" x2=".37" y2=".01"><stop stop-color="#002c65"/><stop offset=".26" stop-color="#001d6c"/><stop offset=".52" stop-color="#000073"/><stop offset=".64" stop-color="#180070"/><stop offset=".76" stop-color="#25006d"/><stop offset="1" stop-color="#360067"/></linearGradient><linearGradient id="gt4" x1=".63" y1="1" x2=".37" y2=".01"><stop stop-color="#000074"/><stop offset="0" stop-color="#000074"/><stop offset=".13" stop-color="#190071"/><stop offset=".25" stop-color="#27006d"/><stop offset=".5" stop-color="#380067"/><stop offset="1" stop-color="#500057"/></linearGradient><linearGradient id="gt5" x1=".61" y1="1" x2=".39" y2=".01"><stop stop-color="#390064"/><stop offset="1" stop-color="#5f0042"/></linearGradient><linearGradient id="gt6" x1=".56" y1="1.01" x2=".44" y2="0"><stop stop-color="#4c0052"/><stop offset="1" stop-color="#660029"/></linearGradient><linearGradient id="gt7" x1=".34" y1=".93" x2=".66" y2=".08"><stop stop-color="#51003c"/><stop offset=".5" stop-color="#5a002b"/><stop offset="1" stop-color="#63000b"/></linearGradient><linearGradient id="gt8" x1=".75" y1=".4" x2=".26" y2=".61"><stop stop-color="#2e0021"/><stop offset="1" stop-color="#390004"/></linearGradient><linearGradient id="gt9" x1=".86" y1=".42" x2=".14" y2=".59"><stop stop-color="#35003a"/><stop offset="1" stop-color="#49001b"/></linearGradient><linearGradient id="gta" x1=".94" y1=".45" x2=".07" y2=".56"><stop stop-color="#2a004d"/><stop offset="1" stop-color="#490032"/></linearGradient><linearGradient id="gtb" x1=".96" y1=".47" x2=".05" y2=".54"><stop stop-color="#00005b"/><stop offset="0" stop-color="#00005b"/><stop offset=".25" stop-color="#1d0056"/><stop offset=".5" stop-color="#2b0051"/><stop offset="1" stop-color="#3e0044"/></linearGradient><linearGradient id="gtc" x1=".94" y1=".46" x2=".06" y2=".55"><stop stop-color="#00214f"/><stop offset=".52" stop-color="#00005a"/><stop offset=".76" stop-color="#1b0055"/><stop offset="1" stop-color="#290050"/></linearGradient><linearGradient id="gtd" x1=".89" y1=".43" x2=".12" y2=".58"><stop stop-color="#002b3e"/><stop offset=".5" stop-color="#001d4a"/><stop offset="1" stop-color="#000353"/></linearGradient><linearGradient id="gte" x1=".8" y1=".41" x2=".2" y2=".61"><stop stop-color="#00282b"/><stop offset="1" stop-color="#00163d"/></linearGradient><linearGradient id="gtf" x1=".7" y1=".4" x2=".31" y2=".6"><stop stop-color="#00100d"/><stop offset="1" stop-color="#000916"/></linearGradient><linearGradient id="gtg" x1=".5" y1="1.01" x2=".5" y2=".01"><stop stop-color="#004045"/><stop offset="1" stop-color="#002460"/></linearGradient><linearGradient id="gth" x1=".67" y1=".89" x2=".33" y2=".11"><stop stop-color="#003a57"/><stop offset=".48" stop-color="#002865"/><stop offset=".72" stop-color="#001a6b"/><stop offset=".96" stop-color="#000071"/><stop offset="1" stop-color="#090070"/></linearGradient><linearGradient id="gti" x1=".68" y1=".87" x2=".32" y2=".15"><stop stop-color="#002967"/><stop offset=".22" stop-color="#001b6e"/><stop offset=".44" stop-color="#000073"/><stop offset=".58" stop-color="#1b0070"/><stop offset=".72" stop-color="#29006c"/><stop offset="1" stop-color="#3b0065"/></linearGradient><linearGradient id="gtj" x1=".68" y1=".86" x2=".33" y2=".15"><stop stop-color="#120072"/><stop offset=".25" stop-color="#2d006b"/><stop offset=".5" stop-color="#3c0064"/><stop offset="1" stop-color="#530054"/></linearGradient><linearGradient id="gtk" x1=".66" y1=".88" x2=".34" y2=".13"><stop stop-color="#3d0062"/><stop offset="1" stop-color="#61003e"/></linearGradient><linearGradient id="gtl" x1=".58" y1=".97" x2=".42" y2=".04"><stop stop-color="#4d004f"/><stop offset="1" stop-color="#660025"/></linearGradient><linearGradient id="gtm" x1=".38" y1=".64" x2=".62" y2=".36"><stop stop-color="#500039"/><stop offset=".5" stop-color="#590028"/><stop offset="1" stop-color="#610006"/></linearGradient><linearGradient id="gtn" x1=".41" y1=".62" x2=".59" y2=".38"><stop stop-color="#59000d"/><stop offset=".14" stop-color="#5b0000"/><stop offset=".57" stop-color="#5b1f00"/><stop offset="1" stop-color="#5b2f00"/></linearGradient><linearGradient id="gto" x1=".74" y1=".4" x2=".27" y2=".61"><stop stop-color="#1a0005"/><stop offset=".35" stop-color="#1c0000"/><stop offset="1" stop-color="#1c0900"/></linearGradient><linearGradient id="gtp" x1=".9" y1=".43" x2=".11" y2=".58"><stop stop-color="#360021"/><stop offset=".71" stop-color="#400000"/><stop offset="1" stop-color="#401300"/></linearGradient><linearGradient id="gtq" x1=".99" y1=".49" x2=".02" y2=".52"><stop stop-color="#360037"/><stop offset=".5" stop-color="#410027"/><stop offset="1" stop-color="#4b000c"/></linearGradient><linearGradient id="gtr" x1="1.01" y1=".51" x2="-.01" y2=".49"><stop stop-color="#280047"/><stop offset="1" stop-color="#460029"/></linearGradient><linearGradient id="gts" x1="1" y1=".5" x2="0" y2=".5"><stop stop-color="#050050"/><stop offset=".25" stop-color="#1b004b"/><stop offset=".5" stop-color="#280046"/><stop offset="1" stop-color="#39003a"/></linearGradient><linearGradient id="gtt" x1=".95" y1=".46" x2=".05" y2=".55"><stop stop-color="#001643"/><stop offset=".42" stop-color="#00004a"/><stop offset=".71" stop-color="#180046"/><stop offset="1" stop-color="#240040"/></linearGradient><linearGradient id="gtu" x1=".85" y1=".41" x2=".16" y2=".59"><stop stop-color="#00182e"/><stop offset=".87" stop-color="#00003a"/><stop offset="1" stop-color="#070038"/></linearGradient><linearGradient id="gtv" x1=".42" y1=".6" x2=".58" y2=".4"><stop stop-color="#003248"/><stop offset="1" stop-color="#00185a"/></linearGradient><linearGradient id="gtw" x1=".42" y1=".98" x2=".57" y2=".04"><stop stop-color="#003457"/><stop offset=".47" stop-color="#002463"/><stop offset=".7" stop-color="#001768"/><stop offset=".94" stop-color="#00006d"/><stop offset="1" stop-color="#0c006c"/></linearGradient><linearGradient id="gtx" x1=".56" y1="1.01" x2=".44" y2="0"><stop stop-color="#002a67"/><stop offset=".25" stop-color="#001c6e"/><stop offset=".49" stop-color="#000074"/><stop offset=".62" stop-color="#190071"/><stop offset=".75" stop-color="#26006e"/><stop offset="1" stop-color="#370067"/></linearGradient><linearGradient id="gty" x1=".59" y1="1.01" x2=".41" y2="0"><stop stop-color="#000676"/><stop offset=".03" stop-color="#007"/><stop offset=".16" stop-color="#1a0073"/><stop offset=".28" stop-color="#280070"/><stop offset=".52" stop-color="#3a0069"/><stop offset="1" stop-color="#520059"/></linearGradient><linearGradient id="gtz" x1=".59" y1="1.01" x2=".41" y2="0"><stop stop-color="#38006a"/><stop offset="1" stop-color="#640043"/></linearGradient><linearGradient id="gu0" x1=".58" y1="1.01" x2=".42" y2="0"><stop stop-color="#510058"/><stop offset=".5" stop-color="#630043"/><stop offset="1" stop-color="#710020"/></linearGradient><linearGradient id="gu1" x1=".52" y1="1.01" x2=".48" y2="0"><stop stop-color="#5f0042"/><stop offset=".38" stop-color="#69002e"/><stop offset=".58" stop-color="#6d001f"/><stop offset=".77" stop-color="#720000"/><stop offset=".88" stop-color="#721700"/><stop offset="1" stop-color="#722300"/></linearGradient><linearGradient id="gu2" x1=".34" y1=".92" x2=".66" y2=".09"><stop stop-color="#620027"/><stop offset=".2" stop-color="#65001a"/><stop offset=".4" stop-color="#690000"/><stop offset=".7" stop-color="#692200"/><stop offset="1" stop-color="#693200"/></linearGradient><linearGradient id="gu3" x1=".45" y1=".55" x2=".55" y2=".45"><stop stop-color="#570009"/><stop offset=".1" stop-color="#580000"/><stop offset=".55" stop-color="#581e00"/><stop offset="1" stop-color="#582d00"/></linearGradient><linearGradient id="gu4" x1=".7" y1=".4" x2=".3" y2=".6"><stop stop-color="#220009"/><stop offset=".4" stop-color="#250000"/><stop offset="1" stop-color="#250e00"/></linearGradient><linearGradient id="gu5" x1=".82" y1=".41" x2=".19" y2=".6"><stop stop-color="#370024"/><stop offset=".38" stop-color="#3d0018"/><stop offset=".77" stop-color="#430000"/><stop offset="1" stop-color="#431100"/></linearGradient><linearGradient id="gu6" x1=".9" y1=".43" x2=".11" y2=".58"><stop stop-color="#340039"/><stop offset="1" stop-color="#4b0012"/></linearGradient><linearGradient id="gu7" x1=".92" y1=".44" x2=".08" y2=".56"><stop stop-color="#250049"/><stop offset="1" stop-color="#45002c"/></linearGradient><linearGradient id="gu8" x1=".91" y1=".44" x2=".1" y2=".57"><stop stop-color="#000350"/><stop offset=".03" stop-color="#000050"/><stop offset=".28" stop-color="#18004c"/><stop offset=".52" stop-color="#250047"/><stop offset="1" stop-color="#36003b"/></linearGradient><linearGradient id="gu9" x1=".85" y1=".42" x2=".16" y2=".59"><stop stop-color="#001840"/><stop offset=".49" stop-color="#000049"/><stop offset="1" stop-color="#200040"/></linearGradient><linearGradient id="gua" x1=".76" y1=".4" x2=".24" y2=".61"><stop stop-color="#00162a"/><stop offset=".94" stop-color="#000036"/><stop offset="1" stop-color="#030035"/></linearGradient><linearGradient id="gub" x1=".46" y1=".55" x2=".54" y2=".46"><stop stop-color="#00334a"/><stop offset="1" stop-color="#00165e"/></linearGradient><linearGradient id="guc" x1=".41" y1="1" x2=".59" y2="0"><stop stop-color="#00345a"/><stop offset=".44" stop-color="#002365"/><stop offset=".65" stop-color="#00176a"/><stop offset=".87" stop-color="#00006f"/><stop offset="1" stop-color="#16006c"/></linearGradient><linearGradient id="gud" x1=".61" y1=".96" x2=".39" y2=".05"><stop stop-color="#002869"/><stop offset=".21" stop-color="#001a6f"/><stop offset=".42" stop-color="#000074"/><stop offset=".57" stop-color="#1c0071"/><stop offset=".71" stop-color="#29006d"/><stop offset="1" stop-color="#3c0065"/></linearGradient><linearGradient id="gue" x1=".64" y1=".93" x2=".36" y2=".08"><stop stop-color="#0a0076"/><stop offset=".25" stop-color="#2c006f"/><stop offset=".5" stop-color="#3d0067"/><stop offset="1" stop-color="#550056"/></linearGradient><linearGradient id="guf" x1=".64" y1=".93" x2=".36" y2=".09"><stop stop-color="#3d0068"/><stop offset="1" stop-color="#67003f"/></linearGradient><linearGradient id="gug" x1=".61" y1=".95" x2=".39" y2=".06"><stop stop-color="#540055"/><stop offset=".5" stop-color="#65003f"/><stop offset="1" stop-color="#720018"/></linearGradient><linearGradient id="guh" x1=".5" y1="1.01" x2=".5" y2=".01"><stop stop-color="#60003e"/><stop offset=".36" stop-color="#69002b"/><stop offset=".53" stop-color="#6d001d"/><stop offset=".71" stop-color="#710000"/><stop offset=".86" stop-color="#711a00"/><stop offset="1" stop-color="#712700"/></linearGradient><linearGradient id="gui" x1=".34" y1=".72" x2=".67" y2=".28"><stop stop-color="#610023"/><stop offset=".18" stop-color="#640016"/><stop offset=".35" stop-color="#670000"/><stop offset=".68" stop-color="#672200"/><stop offset="1" stop-color="#673200"/></linearGradient><linearGradient id="guj" x1=".5" y1=".51" x2=".51" y2=".5"><stop stop-color="#540005"/><stop offset=".06" stop-color="#540000"/><stop offset=".53" stop-color="#541c00"/><stop offset="1" stop-color="#542b00"/></linearGradient><linearGradient id="guk" x1=".41" y1=".62" x2=".59" y2=".38"><stop stop-color="#5a2800"/><stop offset="1" stop-color="#5a4100"/></linearGradient><linearGradient id="gul" x1=".76" y1=".4" x2=".25" y2=".61"><stop stop-color="#220700"/><stop offset="1" stop-color="#221500"/></linearGradient><linearGradient id="gum" x1=".91" y1=".44" x2=".09" y2=".57"><stop stop-color="#410009"/><stop offset=".13" stop-color="#420000"/><stop offset=".56" stop-color="#421a00"/><stop offset="1" stop-color="#422700"/></linearGradient><linearGradient id="gun" x1=".99" y1=".5" x2=".01" y2=".51"><stop stop-color="#440028"/><stop offset=".3" stop-color="#49001a"/><stop offset=".59" stop-color="#4f0000"/><stop offset="1" stop-color="#4f2100"/></linearGradient><linearGradient id="guo" x1="1.02" y1=".53" x2="-.02" y2=".48"><stop stop-color="#3b003b"/><stop offset=".5" stop-color="#47002a"/><stop offset="1" stop-color="#520009"/></linearGradient><linearGradient id="gup" x1="1.02" y1=".52" x2="-.01" y2=".49"><stop stop-color="#290048"/><stop offset="1" stop-color="#47002a"/></linearGradient><linearGradient id="guq" x1=".96" y1=".47" x2=".04" y2=".54"><stop stop-color="#0c004b"/><stop offset=".5" stop-color="#270041"/><stop offset="1" stop-color="#350036"/></linearGradient><linearGradient id="gur" x1=".86" y1=".42" x2=".14" y2=".59"><stop stop-color="#000a39"/><stop offset=".27" stop-color="#00003d"/><stop offset="1" stop-color="#1e0033"/></linearGradient><linearGradient id="gus" x1=".42" y1=".59" x2=".58" y2=".41"><stop stop-color="#001f56"/><stop offset=".63" stop-color="#00005f"/><stop offset="1" stop-color="#1e005a"/></linearGradient><linearGradient id="gut" x1=".44" y1=".98" x2=".57" y2=".03"><stop stop-color="#001c66"/><stop offset=".32" stop-color="#00006d"/><stop offset=".49" stop-color="#190069"/><stop offset=".66" stop-color="#260066"/><stop offset="1" stop-color="#38005e"/></linearGradient><linearGradient id="guu" x1=".56" y1="1.01" x2=".43" y2="0"><stop stop-color="#0d0072"/><stop offset=".25" stop-color="#2a006c"/><stop offset=".5" stop-color="#390065"/><stop offset="1" stop-color="#4f0056"/></linearGradient><linearGradient id="guv" x1=".6" y1="1.01" x2=".4" y2="0"><stop stop-color="#390069"/><stop offset="1" stop-color="#630043"/></linearGradient><linearGradient id="guw" x1=".6" y1="1.01" x2=".4" y2="0"><stop stop-color="#520059"/><stop offset=".5" stop-color="#640043"/><stop offset="1" stop-color="#73001d"/></linearGradient><linearGradient id="gux" x1=".58" y1="1.01" x2=".42" y2="0"><stop stop-color="#630042"/><stop offset=".33" stop-color="#6c002e"/><stop offset=".5" stop-color="#71001f"/><stop offset=".66" stop-color="#750000"/><stop offset=".83" stop-color="#752000"/><stop offset="1" stop-color="#753000"/></linearGradient><linearGradient id="guy" x1=".53" y1="1.01" x2=".47" y2="0"><stop stop-color="#6d001f"/><stop offset=".2" stop-color="#710000"/><stop offset=".4" stop-color="#712000"/><stop offset=".6" stop-color="#713000"/><stop offset="1" stop-color="#714400"/></linearGradient><linearGradient id="guz" x1=".34" y1=".92" x2=".66" y2=".09"><stop stop-color="#682000"/><stop offset="1" stop-color="#684900"/></linearGradient><linearGradient id="gv0" x1=".46" y1=".55" x2=".55" y2=".45"><stop stop-color="#572800"/><stop offset="1" stop-color="#573e00"/></linearGradient><linearGradient id="gv1" x1=".72" y1=".4" x2=".29" y2=".6"><stop stop-color="#2a0800"/><stop offset="1" stop-color="#2a1b00"/></linearGradient><linearGradient id="gv2" x1=".84" y1=".41" x2=".17" y2=".6"><stop stop-color="#42000f"/><stop offset=".2" stop-color="#450000"/><stop offset=".6" stop-color="#451a00"/><stop offset="1" stop-color="#452800"/></linearGradient><linearGradient id="gv3" x1=".91" y1=".44" x2=".1" y2=".57"><stop stop-color="#43002b"/><stop offset=".33" stop-color="#4a001d"/><stop offset=".66" stop-color="#500000"/><stop offset="1" stop-color="#501e00"/></linearGradient><linearGradient id="gv4" x1=".94" y1=".45" x2=".07" y2=".56"><stop stop-color="#38003e"/><stop offset=".5" stop-color="#46002e"/><stop offset="1" stop-color="#510012"/></linearGradient><linearGradient id="gv5" x1=".92" y1=".44" x2=".08" y2=".57"><stop stop-color="#250049"/><stop offset="1" stop-color="#45002d"/></linearGradient><linearGradient id="gv6" x1=".87" y1=".42" x2=".14" y2=".59"><stop stop-color="#05004a"/><stop offset=".5" stop-color="#230041"/><stop offset="1" stop-color="#320037"/></linearGradient><linearGradient id="gv7" x1=".77" y1=".4" x2=".23" y2=".61"><stop stop-color="#000a35"/><stop offset=".32" stop-color="#000039"/><stop offset="1" stop-color="#1a0030"/></linearGradient><linearGradient id="gv8" x1=".47" y1=".53" x2=".53" y2=".47"><stop stop-color="#002058"/><stop offset=".59" stop-color="#000062"/><stop offset=".79" stop-color="#16005f"/><stop offset="1" stop-color="#22005c"/></linearGradient><linearGradient id="gv9" x1=".42" y1="1" x2=".59" y2=".01"><stop stop-color="#001a68"/><stop offset=".27" stop-color="#00006e"/><stop offset=".45" stop-color="#1b006a"/><stop offset=".63" stop-color="#290066"/><stop offset="1" stop-color="#3c005e"/></linearGradient><linearGradient id="gva" x1=".62" y1=".96" x2=".39" y2=".05"><stop stop-color="#170071"/><stop offset=".5" stop-color="#3d0064"/><stop offset="1" stop-color="#530054"/></linearGradient><linearGradient id="gvb" x1=".64" y1=".93" x2=".36" y2=".08"><stop stop-color="#3d0067"/><stop offset="1" stop-color="#66003f"/></linearGradient><linearGradient id="gvc" x1=".64" y1=".92" x2=".36" y2=".08"><stop stop-color="#550056"/><stop offset=".5" stop-color="#66003f"/><stop offset=".75" stop-color="#6e002e"/><stop offset="1" stop-color="#750012"/></linearGradient><linearGradient id="gvd" x1=".62" y1=".94" x2=".38" y2=".07"><stop stop-color="#65003e"/><stop offset=".3" stop-color="#6d002b"/><stop offset=".44" stop-color="#71001c"/><stop offset=".59" stop-color="#750000"/><stop offset=".69" stop-color="#751700"/><stop offset=".8" stop-color="#752400"/><stop offset="1" stop-color="#753400"/></linearGradient><linearGradient id="gve" x1=".52" y1="1" x2=".49" y2=".01"><stop stop-color="#6d0017"/><stop offset=".13" stop-color="#700000"/><stop offset=".35" stop-color="#702100"/><stop offset=".56" stop-color="#703100"/><stop offset="1" stop-color="#704600"/></linearGradient><linearGradient id="gvf" x1=".34" y1=".71" x2=".66" y2=".29"><stop stop-color="#662300"/><stop offset="1" stop-color="#664800"/></linearGradient><linearGradient id="gvg" x1=".5" y1=".5" x2=".5" y2=".51"><stop stop-color="#532700"/><stop offset="1" stop-color="#533b00"/></linearGradient></defs><g transform="scale(0.1)" stroke="#000" stroke-width="10" stroke-linejoin="round"><path d="M4601 3217l97 154 70 103-95-152z" fill="url(#g1)"/><path d="M4698 3371l96 183 68 100-94-180z" fill="url(#g2)"/><path d="M4794 3554l95 197 66 95-93-192z" fill="url(#g3)"/><path d="M4889 3751l94 191 64 92-92-188z" fill="url(#g4)"/><path d="M4983 3942l92 170 63 89-91-167z" fill="url(#g5)"/><path d="M6720 4378l88 206 39 89-87-202z" fill="url(#g6)"/><path d="M8440 4685l133 31 10 96-131-31z" fill="url(#g7)"/><path d="M8573 4716l118 89 8 94-116-87z" fill="url(#g8)"/><path d="M4527 3105l98 157 73 109-97-154z" fill="url(#g9)"/><path d="M4625 3262l99 187 70 105-96-183z" fill="url(#ga)"/><path d="M4724 3449l97 200 68 102-95-197z" fill="url(#gb)"/><path d="M4821 3649l95 195 67 98-94-191z" fill="url(#gc)"/><path d="M4916 3844l95 174 64 94-92-170z" fill="url(#gd)"/><path d="M5011 4018l94 139 63 91-93-136z" fill="url(#ge)"/><path d="M6678 4279l90 211 40 94-88-206z" fill="#060004"/><path d="M8428 4583l135 31 10 102-133-31z" fill="url(#gf)"/><path d="M8563 4614l121 90 7 101-118-89z" fill="url(#gg)"/><path d="M4451 3005l100 160 74 97-98-157z" fill="url(#gh)"/><path d="M4551 3165l100 190 73 94-99-187z" fill="url(#gi)"/><path d="M4651 3355l99 205 71 89-97-200z" fill="url(#gj)"/><path d="M4750 3560l98 198 68 86-95-195z" fill="url(#gk)"/><path d="M4848 3758l96 177 67 83-95-174z" fill="url(#gl)"/><path d="M4944 3935l96 141 65 81-94-139z" fill="url(#gm)"/><path d="M6439 3813l100 175 47 91-98-172z" fill="#0a0300"/><path d="M6539 3988l94 204 45 87-92-200z" fill="url(#gn)"/><path d="M6633 4192l92 215 43 83-90-211z" fill="url(#go)"/><path d="M6725 4407l91 206 41 79-89-202z" fill="url(#gp)"/><path d="M6816 4613l92 181 40 75-91-177z" fill="url(#gq)"/><path d="M8549 4525l123 92 12 87-121-90z" fill="url(#gr)"/><path d="M4272 2820l101 115 78 70-100-114z" fill="url(#gs)"/><path d="M4373 2935l102 163 76 67-100-160z" fill="url(#gt)"/><path d="M4475 3098l102 194 74 63-100-190z" fill="url(#gu)"/><path d="M4577 3292l101 207 72 61-99-205z" fill="url(#gv)"/><path d="M4678 3499l99 202 71 57-98-198z" fill="url(#gw)"/><path d="M4777 3701l98 179 69 55-96-177z" fill="url(#gx)"/><path d="M4875 3880l97 144 68 52-96-141z" fill="url(#gy)"/><path d="M4972 4024l97 97 66 51-95-96z" fill="url(#gz)"/><path d="M6279 3618l106 132 54 63-104-131z" fill="url(#g10)"/><path d="M6385 3750l101 178 53 60-100-175z" fill="url(#g11)"/><path d="M6486 3928l97 208 50 56-94-204z" fill="url(#g12)"/><path d="M6583 4136l93 218 49 53-92-215z" fill="url(#g13)"/><path d="M6676 4354l92 210 48 49-91-206z" fill="url(#g14)"/><path d="M6768 4564l95 184 45 46-92-181z" fill="url(#g15)"/><path d="M6863 4748l99 145 44 44-98-143z" fill="url(#g16)"/><path d="M8525 4468l125 93 22 56-123-92z" fill="#0a0700"/><path d="M4094 2736l99 60 79 24-98-59z" fill="url(#g17)"/><path d="M4193 2796l102 116 78 23-101-115z" fill="url(#g18)"/><path d="M4295 2912l104 165 76 21-102-163z" fill="url(#g19)"/><path d="M4399 3077l103 196 75 19-102-194z" fill="url(#g1a)"/><path d="M4502 3273l103 210 73 16-101-207z" fill="url(#g1b)"/><path d="M4605 3483l101 204 71 14-99-202z" fill="url(#g1c)"/><path d="M4706 3687l99 181 70 12-98-179z" fill="url(#g1d)"/><path d="M4805 3868l99 145 68 11-97-144z" fill="url(#g1e)"/><path d="M4904 4013l97 98 68 10-97-97z" fill="url(#g1f)"/><path d="M5001 4111l99 47 67 9-98-46z" fill="url(#g1g)"/><path d="M6105 3525l112 76 62 17-111-76z" fill="url(#g1h)"/><path d="M6217 3601l108 134 60 15-106-132z" fill="url(#g1i)"/><path d="M6325 3735l102 180 59 13-101-178z" fill="url(#g1j)"/><path d="M6427 3915l98 210 58 11-97-208z" fill="url(#g1k)"/><path d="M6525 4125l95 221 56 8-93-218z" fill="url(#g1l)"/><path d="M6620 4346l94 212 54 6-92-210z" fill="url(#g1m)"/><path d="M6714 4558l96 186 53 4-95-184z" fill="url(#g1n)"/><path d="M6810 4744l100 147 52 2-99-145z" fill="url(#g1o)"/><path d="M6910 4891l107 99 51 1-106-98z" fill="url(#g1p)"/><path d="M7017 4990l116 46 49 0-114-45z" fill="url(#g1q)"/><path d="M8345 4429l141 32 39 7-141-31z" fill="url(#g1r)"/><path d="M8486 4461l127 94 37 6-125-93z" fill="url(#g1s)"/><path d="M3921 2769l95 0 78-33-95 1z" fill="url(#g1t)"/><path d="M4016 2769l100 60 77-33-99-60z" fill="#999600"/><path d="M4116 2829l102 117 77-34-102-116z" fill="url(#g1u)"/><path d="M4218 2946l105 166 76-35-104-165z" fill="url(#g1v)"/><path d="M4323 3112l105 197 74-36-103-196z" fill="url(#g1w)"/><path d="M4428 3309l103 211 74-37-103-210z" fill="url(#g1x)"/><path d="M4531 3520l103 205 72-38-101-204z" fill="url(#g1y)"/><path d="M4634 3725l100 183 71-40-99-181z" fill="url(#g1z)"/><path d="M4734 3908l100 145 70-40-99-145z" fill="url(#g20)"/><path d="M4834 4053l98 99 69-41-97-98z" fill="url(#g21)"/><path d="M4932 4152l99 47 69-41-99-47z" fill="#69006c"/><path d="M5031 4199l100-5 69-41-100 5z" fill="url(#g22)"/><path d="M5131 4194l103-53 69-42-103 54z" fill="url(#g23)"/><path d="M5800 3595l119-43 69-41-118 43z" fill="url(#g24)"/><path d="M5919 3552l117 14 69-41-117-14z" fill="#817f00"/><path d="M6036 3566l113 77 68-42-112-76z" fill="url(#g25)"/><path d="M6149 3643l109 135 67-43-108-134z" fill="url(#g26)"/><path d="M6258 3778l103 181 66-44-102-180z" fill="url(#g27)"/><path d="M6361 3959l99 212 65-46-98-210z" fill="url(#g28)"/><path d="M6460 4171l96 222 64-47-95-221z" fill="url(#g29)"/><path d="M6556 4393l96 214 62-49-94-212z" fill="url(#g2a)"/><path d="M6652 4607l97 187 61-50-96-186z" fill="url(#g2b)"/><path d="M6749 4794l101 148 60-51-100-147z" fill="url(#g2c)"/><path d="M6850 4942l108 99 59-51-107-99z" fill="url(#g2d)"/><path d="M6958 5041l116 47 59-52-116-46z" fill="#660069"/><path d="M7074 5088l127-6 58-52-126 6z" fill="url(#g2e)"/><path d="M7201 5082l137-54 59-52-138 54z" fill="url(#g2f)"/><path d="M7338 5028l148-92 58-52-147 92z" fill="#080002"/><path d="M7486 4936l157-116 58-52-157 116z" fill="#0a0100"/><path d="M7643 4820l164-123 57-52-163 123z" fill="#0a0300"/><path d="M7807 4697l165-110 57-52-165 110z" fill="#0a0500"/><path d="M7972 4587l162-77 57-52-162 77z" fill="url(#g2g)"/><path d="M8134 4510l155-28 56-53-154 29z" fill="url(#g2h)"/><path d="M8289 4482l142 32 55-53-141-32z" fill="#878500"/><path d="M8431 4514l128 96 54-55-127-94z" fill="url(#g2i)"/><path d="M3846 2861l95 1 75-93-95 0z" fill="url(#g2j)"/><path d="M3941 2862l99 60 76-93-100-60z" fill="url(#g2k)"/><path d="M4040 2922l103 118 75-94-102-117z" fill="url(#g2l)"/><path d="M4143 3040l106 165 74-93-105-166z" fill="url(#g2m)"/><path d="M4249 3205l105 198 74-94-105-197z" fill="url(#g2n)"/><path d="M4354 3403l105 211 72-94-103-211z" fill="url(#g2o)"/><path d="M4459 3614l103 205 72-94-103-205z" fill="url(#g2p)"/><path d="M4562 3819l101 183 71-94-100-183z" fill="url(#g2q)"/><path d="M4663 4002l100 146 71-95-100-145z" fill="url(#g2r)"/><path d="M4763 4148l99 99 70-95-98-99z" fill="url(#g2s)"/><path d="M4862 4247l99 48 70-96-99-47z" fill="url(#g2t)"/><path d="M4961 4295l100-5 70-96-100 5z" fill="url(#g2u)"/><path d="M5061 4290l103-52 70-97-103 53z" fill="url(#g2v)"/><path d="M5164 4238l105-92 71-97-106 92z" fill="url(#g2w)"/><path d="M5269 4146l110-117 72-99-111 119z" fill="url(#g2x)"/><path d="M5379 4029l113-127 72-100-113 128z" fill="url(#g2y)"/><path d="M5492 3902l116-117 73-101-117 118z" fill="url(#g2z)"/><path d="M5608 3785l118-88 74-102-119 89z" fill="url(#g30)"/><path d="M5726 3697l118-42 75-103-119 43z" fill="url(#g31)"/><path d="M5844 3655l117 15 75-104-117-14z" fill="url(#g32)"/><path d="M5961 3670l114 77 74-104-113-77z" fill="url(#g33)"/><path d="M6075 3747l109 136 74-105-109-135z" fill="url(#g34)"/><path d="M6184 3883l104 181 73-105-103-181z" fill="url(#g35)"/><path d="M6288 4064l100 212 72-105-99-212z" fill="url(#g36)"/><path d="M6388 4276l97 222 71-105-96-222z" fill="url(#g37)"/><path d="M6485 4498l96 213 71-104-96-214z" fill="url(#g38)"/><path d="M6581 4711l98 188 70-105-97-187z" fill="url(#g39)"/><path d="M6679 4899l102 148 69-105-101-148z" fill="url(#g3a)"/><path d="M6781 5047l108 100 69-106-108-99z" fill="url(#g3b)"/><path d="M6889 5147l117 47 68-106-116-47z" fill="url(#g3c)"/><path d="M7006 5194l126-5 69-107-127 6z" fill="url(#g3d)"/><path d="M7132 5189l137-53 69-108-137 54z" fill="url(#g3e)"/><path d="M7269 5136l148-90 69-110-148 92z" fill="url(#g3f)"/><path d="M7417 5046l156-115 70-111-157 116z" fill="url(#g3g)"/><path d="M7573 4931l163-121 71-113-164 123z" fill="url(#g3h)"/><path d="M7736 4810l165-108 71-115-165 110z" fill="url(#g3i)"/><path d="M7901 4702l162-77 71-115-162 77z" fill="url(#g3j)"/><path d="M8063 4625l154-27 72-116-155 28z" fill="url(#g3k)"/><path d="M8217 4598l143 33 71-117-142-32z" fill="url(#g3l)"/><path d="M8360 4631l128 97 71-118-128-96z" fill="url(#g3m)"/><path d="M3774 3009l95 2 72-149-95-1z" fill="url(#g3n)"/><path d="M3869 3011l99 60 72-149-99-60z" fill="url(#g3o)"/><path d="M3968 3071l103 118 72-149-103-118z" fill="url(#g3p)"/><path d="M4071 3189l106 165 72-149-106-165z" fill="url(#g3q)"/><path d="M4177 3354l106 196 71-147-105-198z" fill="url(#g3r)"/><path d="M4283 3550l105 210 71-146-105-211z" fill="url(#g3s)"/><path d="M4388 3760l104 205 70-146-103-205z" fill="url(#g3t)"/><path d="M4492 3965l101 181 70-144-101-183z" fill="url(#g3u)"/><path d="M4593 4146l100 146 70-144-100-146z" fill="url(#g3v)"/><path d="M4693 4292l99 99 70-144-99-99z" fill="url(#g3w)"/><path d="M4792 4391l99 48 70-144-99-48z" fill="url(#g3x)"/><path d="M4891 4439l99-3 71-146-100 5z" fill="url(#g3y)"/><path d="M4990 4436l102-51 72-147-103 52z" fill="url(#g3z)"/><path d="M5092 4385l105-89 72-150-105 92z" fill="url(#g40)"/><path d="M5197 4296l108-115 74-152-110 117z" fill="url(#g41)"/><path d="M5305 4181l112-125 75-154-113 127z" fill="url(#g42)"/><path d="M5417 4056l115-114 76-157-116 117z" fill="url(#g43)"/><path d="M5532 3942l117-86 77-159-118 88z" fill="url(#g44)"/><path d="M5649 3856l117-41 78-160-118 42z" fill="url(#g45)"/><path d="M5766 3815l117 17 78-162-117-15z" fill="url(#g46)"/><path d="M5883 3832l113 77 79-162-114-77z" fill="url(#g47)"/><path d="M5996 3909l109 135 79-161-109-136z" fill="url(#g48)"/><path d="M6105 4044l105 181 78-161-104-181z" fill="url(#g49)"/><path d="M6210 4225l100 211 78-160-100-212z" fill="url(#g4a)"/><path d="M6310 4436l98 220 77-158-97-222z" fill="url(#g4b)"/><path d="M6408 4656l97 212 76-157-96-213z" fill="url(#g4c)"/><path d="M6505 4868l98 187 76-156-98-188z" fill="url(#g4d)"/><path d="M6603 5055l102 147 76-155-102-148z" fill="url(#g4e)"/><path d="M6705 5202l108 100 76-155-108-100z" fill="url(#g4f)"/><path d="M6813 5302l116 48 77-156-117-47z" fill="url(#g4g)"/><path d="M6929 5350l126-3 77-158-126 5z" fill="url(#g4h)"/><path d="M7055 5347l136-51 78-160-137 53z" fill="url(#g4i)"/><path d="M7191 5296l147-88 79-162-148 90z" fill="url(#g4j)"/><path d="M7338 5208l155-112 80-165-156 115z" fill="url(#g4k)"/><path d="M7493 5096l161-118 82-168-163 121z" fill="url(#g4l)"/><path d="M7654 4978l163-106 84-170-165 108z" fill="url(#g4m)"/><path d="M7817 4872l161-73 85-174-162 77z" fill="url(#g4n)"/><path d="M7978 4799l153-25 86-176-154 27z" fill="url(#g4o)"/><path d="M8131 4774l142 34 87-177-143-33z" fill="url(#g4p)"/><path d="M8273 4808l128 96 87-176-128-97z" fill="url(#g4q)"/><path d="M3706 3201l94 3 69-193-95-2z" fill="url(#g4r)"/><path d="M3800 3204l99 61 69-194-99-60z" fill="url(#g4s)"/><path d="M3899 3265l103 117 69-193-103-118z" fill="url(#g4t)"/><path d="M4002 3382l105 164 70-192-106-165z" fill="url(#g4u)"/><path d="M4107 3546l106 194 70-190-106-196z" fill="url(#g4v)"/><path d="M4213 3740l106 208 69-188-105-210z" fill="url(#g4w)"/><path d="M4319 3948l104 202 69-185-104-205z" fill="url(#g4x)"/><path d="M4423 4150l101 180 69-184-101-181z" fill="url(#g4y)"/><path d="M4524 4330l100 145 69-183-100-146z" fill="url(#g4z)"/><path d="M4624 4475l99 99 69-183-99-99z" fill="url(#g50)"/><path d="M4723 4574l98 49 70-184-99-48z" fill="url(#g51)"/><path d="M4821 4623l99-2 70-185-99 3z" fill="url(#g52)"/><path d="M4920 4621l100-49 72-187-102 51z" fill="url(#g53)"/><path d="M5020 4572l104-86 73-190-105 89z" fill="url(#g54)"/><path d="M5124 4486l106-112 75-193-108 115z" fill="url(#g55)"/><path d="M5230 4374l111-121 76-197-112 125z" fill="url(#g56)"/><path d="M5341 4253l113-111 78-200-115 114z" fill="url(#g57)"/><path d="M5454 4142l116-83 79-203-117 86z" fill="url(#g58)"/><path d="M5570 4059l116-38 80-206-117 41z" fill="url(#g59)"/><path d="M5686 4021l115 17 82-206-117-17z" fill="url(#g5a)"/><path d="M5801 4038l113 78 82-207-113-77z" fill="url(#g5b)"/><path d="M5914 4116l109 134 82-206-109-135z" fill="url(#g5c)"/><path d="M6023 4250l105 180 82-205-105-181z" fill="url(#g5d)"/><path d="M6128 4430l100 208 82-202-100-211z" fill="url(#g5e)"/><path d="M6228 4638l98 219 82-201-98-220z" fill="url(#g5f)"/><path d="M6326 4857l98 209 81-198-97-212z" fill="url(#g5g)"/><path d="M6424 5066l98 185 81-196-98-187z" fill="url(#g5h)"/><path d="M6522 5251l102 147 81-196-102-147z" fill="url(#g5i)"/><path d="M6624 5398l107 99 82-195-108-100z" fill="url(#g5j)"/><path d="M6731 5497l116 49 82-196-116-48z" fill="url(#g5k)"/><path d="M6847 5546l125-2 83-197-126 3z" fill="url(#g5l)"/><path d="M6972 5544l134-48 85-200-136 51z" fill="url(#g5m)"/><path d="M7106 5496l145-85 87-203-147 88z" fill="url(#g5n)"/><path d="M7251 5411l153-107 89-208-155 112z" fill="url(#g5o)"/><path d="M7404 5304l159-115 91-211-161 118z" fill="url(#g5p)"/><path d="M7563 5189l161-101 93-216-163 106z" fill="url(#g5q)"/><path d="M7724 5088l159-71 95-218-161 73z" fill="url(#g5r)"/><path d="M7883 5017l152-22 96-221-153 25z" fill="url(#g5s)"/><path d="M8035 4995l140 35 98-222-142-34z" fill="url(#g5t)"/><path d="M8175 5030l128 97 98-223-128-96z" fill="url(#g5u)"/><path d="M3641 3420l93 4 66-220-94-3z" fill="url(#g5v)"/><path d="M3734 3424l98 62 67-221-99-61z" fill="url(#g5w)"/><path d="M3832 3486l103 116 67-220-103-117z" fill="url(#g5x)"/><path d="M3935 3602l105 162 67-218-105-164z" fill="url(#g5y)"/><path d="M4040 3764l106 192 67-216-106-194z" fill="url(#g5z)"/><path d="M4146 3956l105 206 68-214-106-208z" fill="url(#g60)"/><path d="M4251 4162l104 199 68-211-104-202z" fill="url(#g61)"/><path d="M4355 4361l102 178 67-209-101-180z" fill="url(#g62)"/><path d="M4457 4539l99 143 68-207-100-145z" fill="url(#g63)"/><path d="M4556 4682l98 99 69-207-99-99z" fill="url(#g64)"/><path d="M4654 4781l98 49 69-207-98-49z" fill="url(#g65)"/><path d="M4752 4830l98 0 70-209-99 2z" fill="url(#g66)"/><path d="M4850 4830l99-46 71-212-100 49z" fill="url(#g67)"/><path d="M4949 4784l102-83 73-215-104 86z" fill="url(#g68)"/><path d="M5051 4701l105-108 74-219-106 112z" fill="url(#g69)"/><path d="M5156 4593l108-117 77-223-111 121z" fill="url(#g6a)"/><path d="M5264 4476l112-107 78-227-113 111z" fill="url(#g6b)"/><path d="M5376 4369l114-79 80-231-116 83z" fill="url(#g6c)"/><path d="M5490 4290l115-36 81-233-116 38z" fill="url(#g6d)"/><path d="M5605 4254l114 19 82-235-115-17z" fill="url(#g6e)"/><path d="M5719 4273l112 78 83-235-113-78z" fill="url(#g6f)"/><path d="M5831 4351l108 133 84-234-109-134z" fill="url(#g6g)"/><path d="M5939 4484l105 178 84-232-105-180z" fill="url(#g6h)"/><path d="M6044 4662l101 205 83-229-100-208z" fill="url(#g6i)"/><path d="M6145 4867l98 216 83-226-98-219z" fill="url(#g6j)"/><path d="M6243 5083l97 207 84-224-98-209z" fill="url(#g6k)"/><path d="M6340 5290l98 182 84-221-98-185z" fill="url(#g6l)"/><path d="M6438 5472l102 145 84-219-102-147z" fill="url(#g6m)"/><path d="M6540 5617l107 99 84-219-107-99z" fill="url(#g6n)"/><path d="M6647 5716l114 50 86-220-116-49z" fill="url(#g6o)"/><path d="M6761 5766l124 0 87-222-125 2z" fill="url(#g6p)"/><path d="M6885 5766l133-45 88-225-134 48z" fill="url(#g6q)"/><path d="M7018 5721l142-81 91-229-145 85z" fill="url(#g6r)"/><path d="M7160 5640l150-103 94-233-153 107z" fill="url(#g6s)"/><path d="M7310 5537l157-110 96-238-159 115z" fill="url(#g6t)"/><path d="M7467 5427l158-97 99-242-161 101z" fill="url(#g6u)"/><path d="M7625 5330l157-66 101-247-159 71z" fill="url(#g6v)"/><path d="M7782 5264l150-20 103-249-152 22z" fill="url(#g6w)"/><path d="M7932 5244l139 37 104-251-140-35z" fill="url(#g6x)"/><path d="M8071 5281l126 96 106-250-128-97z" fill="url(#g6y)"/><path d="M3578 3648l92 6 64-230-93-4z" fill="url(#g6z)"/><path d="M3670 3654l97 61 65-229-98-62z" fill="url(#g70)"/><path d="M3767 3715l102 116 66-229-103-116z" fill="url(#g71)"/><path d="M3869 3831l105 160 66-227-105-162z" fill="url(#g72)"/><path d="M3974 3991l106 190 66-225-106-192z" fill="url(#g73)"/><path d="M4080 4181l105 202 66-221-105-206z" fill="url(#g74)"/><path d="M4185 4383l104 197 66-219-104-199z" fill="url(#g75)"/><path d="M4289 4580l101 176 67-217-102-178z" fill="url(#g76)"/><path d="M4390 4756l100 141 66-215-99-143z" fill="url(#g77)"/><path d="M4490 4897l97 98 67-214-98-99z" fill="url(#g78)"/><path d="M4587 4995l97 50 68-215-98-49z" fill="url(#g79)"/><path d="M4684 5045l96 1 70-216-98 0z" fill="url(#g7a)"/><path d="M4780 5046l98-43 71-219-99 46z" fill="url(#g7b)"/><path d="M4878 5003l101-80 72-222-102 83z" fill="url(#g7c)"/><path d="M4979 4923l103-103 74-227-105 108z" fill="url(#g7d)"/><path d="M5082 4820l106-113 76-231-108 117z" fill="url(#g7e)"/><path d="M5188 4707l110-102 78-236-112 107z" fill="url(#g7f)"/><path d="M5298 4605l112-76 80-239-114 79z" fill="url(#g7g)"/><path d="M5410 4529l114-33 81-242-115 36z" fill="url(#g7h)"/><path d="M5524 4496l113 20 82-243-114-19z" fill="url(#g7i)"/><path d="M5637 4516l111 78 83-243-112-78z" fill="url(#g7j)"/><path d="M5748 4594l108 132 83-242-108-133z" fill="url(#g7k)"/><path d="M5856 4726l104 175 84-239-105-178z" fill="url(#g7l)"/><path d="M5960 4901l101 203 84-237-101-205z" fill="url(#g7m)"/><path d="M6061 5104l98 212 84-233-98-216z" fill="url(#g7n)"/><path d="M6159 5316l97 204 84-230-97-207z" fill="url(#g7o)"/><path d="M6256 5520l98 180 84-228-98-182z" fill="url(#g7p)"/><path d="M6354 5700l101 144 85-227-102-145z" fill="url(#g7q)"/><path d="M6455 5844l107 99 85-227-107-99z" fill="url(#g7r)"/><path d="M6562 5943l113 50 86-227-114-50z" fill="url(#g7s)"/><path d="M6675 5993l122 2 88-229-124 0z" fill="url(#g7t)"/><path d="M6797 5995l131-42 90-232-133 45z" fill="url(#g7u)"/><path d="M6928 5953l140-77 92-236-142 81z" fill="url(#g7v)"/><path d="M7068 5876l148-98 94-241-150 103z" fill="url(#g7w)"/><path d="M7216 5778l154-105 97-246-157 110z" fill="url(#g7x)"/><path d="M7370 5673l156-92 99-251-158 97z" fill="url(#g7y)"/><path d="M7526 5581l154-63 102-254-157 66z" fill="url(#g7z)"/><path d="M7680 5518l148-17 104-257-150 20z" fill="url(#g80)"/><path d="M7828 5501l138 39 105-259-139-37z" fill="url(#g81)"/><path d="M7966 5540l125 96 106-259-126-96z" fill="url(#g82)"/><path d="M3515 3865l90 7 65-218-92-6z" fill="url(#g83)"/><path d="M3605 3872l97 62 65-219-97-61z" fill="url(#g84)"/><path d="M3702 3934l102 115 65-218-102-116z" fill="url(#g85)"/><path d="M3804 4049l104 158 66-216-105-160z" fill="url(#g86)"/><path d="M3908 4207l106 188 66-214-106-190z" fill="url(#g87)"/><path d="M4014 4395l105 200 66-212-105-202z" fill="url(#g88)"/><path d="M4119 4595l104 194 66-209-104-197z" fill="url(#g89)"/><path d="M4223 4789l101 174 66-207-101-176z" fill="url(#g8a)"/><path d="M4324 4963l99 140 67-206-100-141z" fill="url(#g8b)"/><path d="M4808 5213l99-77 72-213-101 80z" fill="url(#g8c)"/><path d="M4907 5136l102-100 73-216-103 103z" fill="url(#g8d)"/><path d="M5009 5036l105-108 74-221-106 113z" fill="url(#g8e)"/><path d="M5114 4928l108-99 76-224-110 102z" fill="url(#g8f)"/><path d="M5222 4829l110-72 78-228-112 76z" fill="url(#g8g)"/><path d="M5332 4757l112-30 80-231-114 33z" fill="url(#g8h)"/><path d="M5444 4727l112 22 81-233-113-20z" fill="url(#g8i)"/><path d="M5556 4749l110 78 82-233-111-78z" fill="url(#g8j)"/><path d="M5666 4827l108 131 82-232-108-132z" fill="url(#g8k)"/><path d="M5774 4958l104 173 82-230-104-175z" fill="url(#g8l)"/><path d="M5878 5131l101 199 82-226-101-203z" fill="url(#g8m)"/><path d="M5979 5330l98 210 82-224-98-212z" fill="url(#g8n)"/><path d="M6077 5540l97 201 82-221-97-204z" fill="url(#g8o)"/><path d="M6174 5741l98 178 82-219-98-180z" fill="url(#g8p)"/><path d="M6272 5919l101 142 82-217-101-144z" fill="url(#g8q)"/><path d="M6373 6061l106 98 83-216-107-99z" fill="url(#g8r)"/><path d="M6479 6159l112 51 84-217-113-50z" fill="url(#g8s)"/><path d="M6591 6210l121 4 85-219-122-2z" fill="url(#g8t)"/><path d="M6712 6214l129-39 87-222-131 42z" fill="url(#g8u)"/><path d="M6841 6175l138-73 89-226-140 77z" fill="url(#g8v)"/><path d="M6979 6102l146-94 91-230-148 98z" fill="url(#g8w)"/><path d="M7125 6008l151-100 94-235-154 105z" fill="url(#g8x)"/><path d="M7276 5908l153-88 97-239-156 92z" fill="url(#g8y)"/><path d="M7429 5820l152-58 99-244-154 63z" fill="url(#g8z)"/><path d="M7581 5762l146-15 101-246-148 17z" fill="url(#g90)"/><path d="M7727 5747l136 40 103-247-138-39z" fill="url(#g91)"/><path d="M7863 5787l124 96 104-247-125-96z" fill="url(#g92)"/><path d="M3449 4056l90 8 66-192-90-7z" fill="url(#g93)"/><path d="M3539 4064l97 63 66-193-97-62z" fill="url(#g94)"/><path d="M3636 4127l101 114 67-192-102-115z" fill="url(#g95)"/><path d="M3737 4241l104 157 67-191-104-158z" fill="url(#g96)"/><path d="M3841 4398l106 185 67-188-106-188z" fill="url(#g97)"/><path d="M3947 4583l105 198 67-186-105-200z" fill="url(#g98)"/><path d="M4052 4781l104 193 67-185-104-194z" fill="url(#g99)"/><path d="M4156 4974l101 172 67-183-101-174z" fill="url(#g9a)"/><path d="M4836 5325l101-97 72-192-102 100z" fill="url(#g9b)"/><path d="M4937 5228l103-105 74-195-105 108z" fill="url(#g9c)"/><path d="M5040 5123l106-95 76-199-108 99z" fill="url(#g9d)"/><path d="M5146 5028l109-70 77-201-110 72z" fill="url(#g9e)"/><path d="M5255 4958l111-28 78-203-112 30z" fill="url(#g9f)"/><path d="M5366 4930l111 23 79-204-112-22z" fill="url(#g9g)"/><path d="M5477 4953l110 79 79-205-110-78z" fill="url(#g9h)"/><path d="M5587 5032l107 130 80-204-108-131z" fill="url(#g9i)"/><path d="M5694 5162l104 171 80-202-104-173z" fill="url(#g9j)"/><path d="M5798 5333l101 198 80-201-101-199z" fill="url(#g9k)"/><path d="M5899 5531l99 207 79-198-98-210z" fill="url(#g9l)"/><path d="M5998 5738l97 199 79-196-97-201z" fill="url(#g9m)"/><path d="M6095 5937l98 176 79-194-98-178z" fill="url(#g9n)"/><path d="M6193 6113l101 141 79-193-101-142z" fill="url(#g9o)"/><path d="M6294 6254l105 98 80-193-106-98z" fill="url(#g9p)"/><path d="M6399 6352l112 52 80-194-112-51z" fill="url(#g9q)"/><path d="M6894 6303l144-90 87-205-146 94z" fill="url(#g9r)"/><path d="M7038 6213l149-96 89-209-151 100z" fill="url(#g9s)"/><path d="M7187 6117l152-85 90-212-153 88z" fill="url(#g9t)"/><path d="M7339 6032l149-55 93-215-152 58z" fill="url(#g9u)"/><path d="M7488 5977l145-12 94-218-146 15z" fill="url(#g9v)"/><path d="M7633 5965l135 41 95-219-136-40z" fill="url(#g9w)"/><path d="M7768 6006l123 96 96-219-124-96z" fill="url(#g9x)"/><path d="M3380 4207l90 9 69-152-90-8z" fill="url(#g9y)"/><path d="M3470 4216l96 63 70-152-97-63z" fill="url(#g9z)"/><path d="M3566 4279l101 114 70-152-101-114z" fill="url(#ga0)"/><path d="M3667 4393l104 156 70-151-104-157z" fill="url(#ga1)"/><path d="M3771 4549l107 185 69-151-106-185z" fill="url(#ga2)"/><path d="M3878 4734l105 196 69-149-105-198z" fill="url(#ga3)"/><path d="M3983 4930l105 192 68-148-104-193z" fill="url(#ga4)"/><path d="M4088 5122l101 171 68-147-101-172z" fill="url(#ga5)"/><path d="M4865 5382l102-102 73-157-103 105z" fill="url(#ga6)"/><path d="M4967 5280l105-93 74-159-106 95z" fill="url(#ga7)"/><path d="M5072 5187l108-67 75-162-109 70z" fill="url(#ga8)"/><path d="M5180 5120l110-27 76-163-111 28z" fill="url(#ga9)"/><path d="M5290 5093l110 25 77-165-111-23z" fill="url(#gaa)"/><path d="M5400 5118l110 78 77-164-110-79z" fill="url(#gab)"/><path d="M5510 5196l107 130 77-164-107-130z" fill="url(#gac)"/><path d="M5617 5326l104 170 77-163-104-171z" fill="url(#gad)"/><path d="M5721 5496l102 197 76-162-101-198z" fill="url(#gae)"/><path d="M5823 5693l99 205 76-160-99-207z" fill="url(#gaf)"/><path d="M5922 5898l98 198 75-159-97-199z" fill="url(#gag)"/><path d="M6020 6096l98 175 75-158-98-176z" fill="url(#gah)"/><path d="M6118 6271l101 140 75-157-101-141z" fill="url(#gai)"/><path d="M6219 6411l105 99 75-158-105-98z" fill="url(#gaj)"/><path d="M7106 6287l150-82 83-173-152 85z" fill="url(#gak)"/><path d="M7256 6205l148-53 84-175-149 55z" fill="url(#gal)"/><path d="M7404 6152l144-10 85-177-145 12z" fill="url(#gam)"/><path d="M7548 6142l134 42 86-178-135-41z" fill="url(#gan)"/><path d="M7682 6184l123 97 86-179-123-96z" fill="url(#gao)"/><path d="M3305 4310l90 10 75-104-90-9z" fill="url(#gap)"/><path d="M3395 4320l96 63 75-104-96-63z" fill="url(#gaq)"/><path d="M3491 4383l101 114 75-104-101-114z" fill="url(#gar)"/><path d="M3592 4497l106 157 73-105-104-156z" fill="url(#gas)"/><path d="M3698 4654l106 184 74-104-107-185z" fill="url(#gat)"/><path d="M3804 4838l107 196 72-104-105-196z" fill="url(#gau)"/><path d="M3911 5034l105 192 72-104-105-192z" fill="url(#gav)"/><path d="M4998 5299l107-66 75-113-108 67z" fill="url(#gaw)"/><path d="M5105 5233l110-25 75-115-110 27z" fill="url(#gax)"/><path d="M5215 5208l110 25 75-115-110-25z" fill="url(#gay)"/><path d="M5325 5233l109 79 76-116-110-78z" fill="url(#gaz)"/><path d="M5434 5312l108 130 75-116-107-130z" fill="url(#gb0)"/><path d="M5542 5442l105 170 74-116-104-170z" fill="url(#gb1)"/><path d="M5647 5612l102 196 74-115-102-197z" fill="url(#gb2)"/><path d="M5749 5808l100 206 73-116-99-205z" fill="url(#gb3)"/><path d="M5849 6014l99 197 72-115-98-198z" fill="url(#gb4)"/><path d="M5948 6211l99 175 71-115-98-175z" fill="url(#gb5)"/><path d="M6047 6386l102 140 70-115-101-140z" fill="url(#gb6)"/><path d="M6149 6526l105 99 70-115-105-99z" fill="url(#gb7)"/><path d="M7182 6331l148-52 74-127-148 53z" fill="url(#gb8)"/><path d="M7330 6279l143-9 75-128-144 10z" fill="url(#gb9)"/><path d="M7473 6270l134 43 75-129-134-42z" fill="url(#gba)"/><path d="M7607 6313l124 98 74-130-123-97z" fill="url(#gbb)"/><path d="M3224 4361l89 11 82-52-90-10z" fill="url(#gbc)"/><path d="M3313 4372l97 63 81-52-96-63z" fill="#720075"/><path d="M3410 4435l102 115 80-53-101-114z" fill="url(#gbd)"/><path d="M3512 4550l106 157 80-53-106-157z" fill="url(#gbe)"/><path d="M3618 4707l108 186 78-55-106-184z" fill="url(#gbf)"/><path d="M3726 4893l108 197 77-56-107-196z" fill="url(#gbg)"/><path d="M3834 5090l106 192 76-56-105-192z" fill="url(#gbh)"/><path d="M5031 5295l109-25 75-62-110 25z" fill="url(#gbi)"/><path d="M5140 5270l110 25 75-62-110-25z" fill="url(#gbj)"/><path d="M5250 5295l111 80 73-63-109-79z" fill="url(#gbk)"/><path d="M5361 5375l108 131 73-64-108-130z" fill="url(#gbl)"/><path d="M5469 5506l106 171 72-65-105-170z" fill="url(#gbm)"/><path d="M5575 5677l104 197 70-66-102-196z" fill="url(#gbn)"/><path d="M5679 5874l101 206 69-66-100-206z" fill="url(#gbo)"/><path d="M5780 6080l100 199 68-68-99-197z" fill="url(#gbp)"/><path d="M5880 6279l100 175 67-68-99-175z" fill="url(#gbq)"/><path d="M5980 6454l103 142 66-70-102-140z" fill="url(#gbr)"/><path d="M7409 6346l135 44 63-77-134-43z" fill="#650068"/><path d="M7544 6390l124 98 63-77-124-98z" fill="url(#gbs)"/><path d="M3135 4361l89 11 89 0-89-11z" fill="url(#gbt)"/><path d="M3224 4372l98 64 88-1-97-63z" fill="url(#gbu)"/><path d="M3322 4436l103 116 87-2-102-115z" fill="url(#gbv)"/><path d="M3425 4552l108 159 85-4-106-157z" fill="url(#gbw)"/><path d="M3533 4711l109 187 84-5-108-186z" fill="url(#gbx)"/><path d="M3642 4898l110 199 82-7-108-197z" fill="url(#gby)"/><path d="M3752 5097l108 194 80-9-106-192z" fill="url(#gbz)"/><path d="M3860 5291l105 174 79-11-104-172z" fill="url(#gc0)"/><path d="M5065 5280l111 26 74-11-110-25z" fill="url(#gc1)"/><path d="M5176 5306l111 81 74-12-111-80z" fill="url(#gc2)"/><path d="M5287 5387l110 132 72-13-108-131z" fill="url(#gc3)"/><path d="M5397 5519l108 173 70-15-106-171z" fill="url(#gc4)"/><path d="M5505 5692l105 199 69-17-104-197z" fill="url(#gc5)"/><path d="M5610 5891l103 209 67-20-101-206z" fill="url(#gc6)"/><path d="M5713 6100l101 200 66-21-100-199z" fill="url(#gc7)"/><path d="M5814 6300l102 177 64-23-100-175z" fill="url(#gc8)"/><path d="M5916 6477l104 143 63-24-103-142z" fill="url(#gc9)"/><path d="M7355 6371l136 44 53-25-135-44z" fill="url(#gca)"/><path d="M7491 6415l126 100 51-27-124-98z" fill="url(#gcb)"/><path d="M3127 4326l99 65 96 45-98-64z" fill="url(#gcc)"/><path d="M3226 4391l105 118 94 43-103-116z" fill="url(#gcd)"/><path d="M3331 4509l109 161 93 41-108-159z" fill="url(#gce)"/><path d="M3440 4670l112 190 90 38-109-187z" fill="url(#gcf)"/><path d="M3552 4860l112 202 88 35-110-199z" fill="url(#gcg)"/><path d="M3664 5062l110 197 86 32-108-194z" fill="url(#gch)"/><path d="M3774 5259l107 176 84 30-105-174z" fill="url(#gci)"/><path d="M5100 5270l113 82 74 35-111-81z" fill="url(#gcj)"/><path d="M5213 5352l112 134 72 33-110-132z" fill="url(#gck)"/><path d="M5325 5486l109 176 71 30-108-173z" fill="url(#gcl)"/><path d="M5434 5662l107 203 69 26-105-199z" fill="url(#gcm)"/><path d="M5541 5865l105 211 67 24-103-209z" fill="url(#gcn)"/><path d="M5646 6076l104 204 64 20-101-200z" fill="url(#gco)"/><path d="M5750 6280l104 180 62 17-102-177z" fill="url(#gcp)"/><path d="M5854 6460l105 145 61 15-104-143z" fill="url(#gcq)"/><path d="M7011 6410l151-52 48 21-149 51z" fill="url(#gcr)"/><path d="M7162 6358l146-8 47 21-145 8z" fill="url(#gcs)"/><path d="M7308 6350l138 45 45 20-136-44z" fill="url(#gct)"/><path d="M7446 6395l128 101 43 19-126-100z" fill="url(#gcu)"/><path d="M3123 4310l107 120 101 79-105-118z" fill="url(#gcv)"/><path d="M3230 4430l111 164 99 76-109-161z" fill="url(#gcw)"/><path d="M3341 4594l115 194 96 72-112-190z" fill="url(#gcx)"/><path d="M3456 4788l114 206 94 68-112-202z" fill="url(#gcy)"/><path d="M3570 4994l113 201 91 64-110-197z" fill="url(#gcz)"/><path d="M3683 5195l109 179 89 61-107-176z" fill="url(#gd0)"/><path d="M3792 5374l105 145 87 59-103-143z" fill="url(#gd1)"/><path d="M5137 5282l114 136 74 68-112-134z" fill="url(#gd2)"/><path d="M5251 5418l112 180 71 64-109-176z" fill="url(#gd3)"/><path d="M5363 5598l109 207 69 60-107-203z" fill="url(#gd4)"/><path d="M5472 5805l108 215 66 56-105-211z" fill="url(#gd5)"/><path d="M5580 6020l106 208 64 52-104-204z" fill="url(#gd6)"/><path d="M5686 6228l106 184 62 48-104-180z" fill="url(#gd7)"/><path d="M5792 6412l107 147 60 46-105-145z" fill="url(#gd8)"/><path d="M7118 6302l149-9 41 57-146 8z" fill="url(#gd9)"/><path d="M7267 6293l141 45 38 57-138-45z" fill="url(#gda)"/><path d="M7408 6338l130 103 36 55-128-101z" fill="#0a0002"/><path d="M3014 4208l109 122 107 100-107-120z" fill="url(#gdb)"/><path d="M3123 4330l114 168 104 96-111-164z" fill="url(#gdc)"/><path d="M3237 4498l117 198 102 92-115-194z" fill="url(#gdd)"/><path d="M3354 4696l117 210 99 88-114-206z" fill="url(#gde)"/><path d="M3471 4906l115 205 97 84-113-201z" fill="url(#gdf)"/><path d="M3586 5111l112 183 94 80-109-179z" fill="url(#gdg)"/><path d="M3698 5294l107 148 92 77-105-145z" fill="url(#gdh)"/><path d="M5058 5190l116 139 77 89-114-136z" fill="url(#gdi)"/><path d="M5174 5329l115 184 74 85-112-180z" fill="url(#gdj)"/><path d="M5289 5513l113 211 70 81-109-207z" fill="url(#gdk)"/><path d="M5402 5724l110 221 68 75-108-215z" fill="url(#gdl)"/><path d="M5512 5945l108 212 66 71-106-208z" fill="url(#gdm)"/><path d="M5620 6157l108 188 64 67-106-184z" fill="url(#gdn)"/><path d="M5728 6345l110 150 61 64-107-147z" fill="url(#gdo)"/><path d="M7076 6225l151-10 40 78-149 9z" fill="url(#gdp)"/><path d="M7227 6215l144 46 37 77-141-45z" fill="url(#gdq)"/><path d="M7371 6261l133 104 34 76-130-103z" fill="url(#gdr)"/><path d="M2901 4102l111 125 111 103-109-122z" fill="url(#gds)"/><path d="M3012 4227l117 171 108 100-114-168z" fill="url(#gdt)"/><path d="M3129 4398l120 202 105 96-117-198z" fill="url(#gdu)"/><path d="M3249 4600l120 215 102 91-117-210z" fill="url(#gdv)"/><path d="M3369 4815l118 209 99 87-115-205z" fill="url(#gdw)"/><path d="M3487 5024l114 187 97 83-112-183z" fill="url(#gdx)"/><path d="M3601 5211l110 151 94 80-107-148z" fill="url(#gdy)"/><path d="M3711 5362l105 105 93 79-104-104z" fill="#000009"/><path d="M5095 5237l118 187 76 89-115-184z" fill="url(#gdz)"/><path d="M5213 5424l115 216 74 84-113-211z" fill="url(#ge0)"/><path d="M5328 5640l113 226 71 79-110-221z" fill="url(#ge1)"/><path d="M5441 5866l111 217 68 74-108-212z" fill="url(#ge2)"/><path d="M5552 6083l111 192 65 70-108-188z" fill="url(#ge3)"/><path d="M5663 6275l112 154 63 66-110-150z" fill="url(#ge4)"/><path d="M7186 6133l147 46 38 82-144-46z" fill="url(#ge5)"/><path d="M7333 6179l136 107 35 79-133-104z" fill="url(#ge6)"/><path d="M2786 4012l113 127 113 88-111-125z" fill="url(#ge7)"/><path d="M2899 4139l120 174 110 85-117-171z" fill="url(#ge8)"/><path d="M3019 4313l123 206 107 81-120-202z" fill="url(#ge9)"/><path d="M3142 4519l123 220 104 76-120-215z" fill="url(#gea)"/><path d="M3265 4739l121 213 101 72-118-209z" fill="url(#geb)"/><path d="M3386 4952l116 191 99 68-114-187z" fill="url(#gec)"/><path d="M3502 5143l112 153 97 66-110-151z" fill="url(#ged)"/><path d="M3614 5296l107 108 95 63-105-105z" fill="url(#gee)"/><path d="M4891 5014l121 146 83 77-119-143z" fill="url(#gef)"/><path d="M5012 5160l121 191 80 73-118-187z" fill="url(#geg)"/><path d="M5133 5351l118 221 77 68-115-216z" fill="url(#geh)"/><path d="M5251 5572l115 231 75 63-113-226z" fill="url(#gei)"/><path d="M5366 5803l114 222 72 58-111-217z" fill="url(#gej)"/><path d="M5480 6025l114 195 69 55-111-192z" fill="url(#gek)"/><path d="M5594 6220l114 157 67 52-112-154z" fill="url(#gel)"/><path d="M5708 6377l117 110 65 49-115-107z" fill="url(#gem)"/><path d="M7289 6115l139 109 41 62-136-107z" fill="#0b0700"/><path d="M2568 3887l106 69 112 56-104-69z" fill="url(#gen)"/><path d="M2674 3956l115 129 110 54-113-127z" fill="url(#geo)"/><path d="M2789 4085l121 177 109 51-120-174z" fill="url(#gep)"/><path d="M2910 4262l126 210 106 47-123-206z" fill="url(#geq)"/><path d="M3036 4472l126 223 103 44-123-220z" fill="url(#ger)"/><path d="M3162 4695l123 217 101 40-121-213z" fill="url(#ges)"/><path d="M3285 4912l119 194 98 37-116-191z" fill="url(#get)"/><path d="M3404 5106l114 156 96 34-112-153z" fill="url(#geu)"/><path d="M3518 5262l109 109 94 33-107-108z" fill="url(#gev)"/><path d="M3627 5371l103 57 93 32-102-56z" fill="url(#gew)"/><path d="M4680 4881l123 89 88 44-121-87z" fill="url(#gex)"/><path d="M4803 4970l124 148 85 42-121-146z" fill="url(#gey)"/><path d="M4927 5118l122 195 84 38-121-191z" fill="url(#gez)"/><path d="M5049 5313l121 225 81 34-118-221z" fill="url(#gf0)"/><path d="M5170 5538l118 235 78 30-115-231z" fill="url(#gf1)"/><path d="M5288 5773l116 225 76 27-114-222z" fill="url(#gf2)"/><path d="M5404 5998l116 199 74 23-114-195z" fill="url(#gf3)"/><path d="M5520 6197l116 160 72 20-114-157z" fill="url(#gf4)"/><path d="M5636 6357l119 111 70 19-117-110z" fill="url(#gf5)"/><path d="M5755 6468l123 59 68 18-121-58z" fill="url(#gf6)"/><path d="M7236 6086l141 112 51 26-139-109z" fill="url(#gf7)"/><path d="M2366 3873l94 8 108 6-94-8z" fill="url(#gf8)"/><path d="M2460 3881l106 71 108 4-106-69z" fill="url(#gf9)"/><path d="M2566 3952l117 130 106 3-115-129z" fill="url(#gfa)"/><path d="M2683 4082l124 179 103 1-121-177z" fill="url(#gfb)"/><path d="M2807 4261l127 212 102-1-126-210z" fill="url(#gfc)"/><path d="M2934 4473l128 226 100-4-126-223z" fill="url(#gfd)"/><path d="M3062 4699l126 219 97-6-123-217z" fill="url(#gfe)"/><path d="M3188 4918l121 196 95-8-119-194z" fill="url(#gff)"/><path d="M3309 5114l115 158 94-10-114-156z" fill="url(#gfg)"/><path d="M3424 5272l110 110 93-11-109-109z" fill="url(#gfh)"/><path d="M3534 5382l104 58 92-12-103-57z" fill="url(#gfi)"/><path d="M3638 5440l101 4 91-12-100-4z" fill="url(#gfj)"/><path d="M4468 4862l121 26 91-7-120-25z" fill="url(#gfk)"/><path d="M4589 4888l124 90 90-8-123-89z" fill="url(#gfl)"/><path d="M4713 4978l125 150 89-10-124-148z" fill="url(#gfm)"/><path d="M4838 5128l125 197 86-12-122-195z" fill="url(#gfn)"/><path d="M4963 5325l122 228 85-15-121-225z" fill="url(#gfo)"/><path d="M5085 5553l121 238 82-18-118-235z" fill="url(#gfp)"/><path d="M5206 5791l119 228 79-21-116-225z" fill="url(#gfq)"/><path d="M5325 6019l117 201 78-23-116-199z" fill="url(#gfr)"/><path d="M5442 6220l118 161 76-24-116-160z" fill="url(#gfs)"/><path d="M5560 6381l121 113 74-26-119-111z" fill="url(#gft)"/><path d="M5681 6494l124 60 73-27-123-59z" fill="url(#gfu)"/><path d="M5805 6554l130 7 73-27-130-7z" fill="url(#gfv)"/><path d="M5935 6561l137-39 72-27-136 39z" fill="#060004"/><path d="M6530 6234l163-96 69-24-162 95z" fill="url(#gfw)"/><path d="M6857 6075l161-13 66-23-159 13z" fill="#1b1800"/><path d="M7018 6062l153 49 65-25-152-47z" fill="url(#gfx)"/><path d="M7171 6111l143 113 63-26-141-112z" fill="url(#gfy)"/><path d="M2266 3928l94 9 100-56-94-8z" fill="#838000"/><path d="M2360 3937l107 71 99-56-106-71z" fill="#9e9c00"/><path d="M2467 4008l118 131 98-57-117-130z" fill="url(#gfz)"/><path d="M2585 4139l125 180 97-58-124-179z" fill="url(#gg0)"/><path d="M2710 4319l129 214 95-60-127-212z" fill="url(#gg1)"/><path d="M2839 4533l130 226 93-60-128-226z" fill="url(#gg2)"/><path d="M2969 4759l127 221 92-62-126-219z" fill="url(#gg3)"/><path d="M3096 4980l123 197 90-63-121-196z" fill="url(#gg4)"/><path d="M3219 5177l116 158 89-63-115-158z" fill="url(#gg5)"/><path d="M3335 5335l111 111 88-64-110-110z" fill="url(#gg6)"/><path d="M3446 5446l104 59 88-65-104-58z" fill="#6e0070"/><path d="M3550 5505l101 5 88-66-101-4z" fill="url(#gg7)"/><path d="M3651 5510l97-44 88-66-97 44z" fill="url(#gg8)"/><path d="M4259 4963l117-33 92-68-117 33z" fill="url(#gg9)"/><path d="M4376 4930l121 27 92-69-121-26z" fill="#888600"/><path d="M4497 4957l125 91 91-70-124-90z" fill="#a09e00"/><path d="M4622 5048l126 151 90-71-125-150z" fill="url(#gga)"/><path d="M4748 5199l126 199 89-73-125-197z" fill="url(#ggb)"/><path d="M4874 5398l125 229 86-74-122-228z" fill="url(#ggc)"/><path d="M4999 5627l122 238 85-74-121-238z" fill="url(#ggd)"/><path d="M5121 5865l121 230 83-76-119-228z" fill="url(#gge)"/><path d="M5242 6095l119 202 81-77-117-201z" fill="url(#ggf)"/><path d="M5361 6297l119 162 80-78-118-161z" fill="url(#ggg)"/><path d="M5480 6459l121 114 80-79-121-113z" fill="url(#ggh)"/><path d="M5601 6573l125 61 79-80-124-60z" fill="#6b006e"/><path d="M5726 6634l130 8 79-81-130-7z" fill="url(#ggi)"/><path d="M5856 6642l137-39 79-81-137 39z" fill="url(#ggj)"/><path d="M5993 6603l146-76 78-83-145 78z" fill="url(#ggk)"/><path d="M6139 6527l152-101 79-84-153 102z" fill="#0a0100"/><path d="M6291 6426l159-108 80-84-160 108z" fill="#0a0300"/><path d="M6450 6318l164-95 79-85-163 96z" fill="url(#ggl)"/><path d="M6614 6223l164-62 79-86-164 63z" fill="url(#ggm)"/><path d="M6778 6161l161-12 79-87-161 13z" fill="url(#ggn)"/><path d="M6939 6149l154 50 78-88-153-49z" fill="#8d8b00"/><path d="M7093 6199l144 114 77-89-143-113z" fill="url(#ggo)"/><path d="M2177 4046l94 9 89-118-94-9z" fill="url(#ggp)"/><path d="M2271 4055l107 72 89-119-107-71z" fill="url(#ggq)"/><path d="M2378 4127l118 131 89-119-118-131z" fill="url(#ggr)"/><path d="M2496 4258l125 180 89-119-125-180z" fill="url(#ggs)"/><path d="M2621 4438l131 214 87-119-129-214z" fill="url(#ggt)"/><path d="M2752 4652l131 226 86-119-130-226z" fill="url(#ggu)"/><path d="M2883 4878l128 221 85-119-127-221z" fill="url(#ggv)"/><path d="M3011 5099l124 196 84-118-123-197z" fill="url(#ggw)"/><path d="M3135 5295l117 159 83-119-116-158z" fill="url(#ggx)"/><path d="M3252 5454l111 111 83-119-111-111z" fill="url(#ggy)"/><path d="M3363 5565l104 59 83-119-104-59z" fill="url(#ggz)"/><path d="M3467 5624l100 6 84-120-101-5z" fill="url(#gh0)"/><path d="M3567 5630l97-42 84-122-97 44z" fill="url(#gh1)"/><path d="M3664 5588l95-81 85-124-96 83z" fill="url(#gh2)"/><path d="M3759 5507l97-109 86-125-98 110z" fill="url(#gh3)"/><path d="M3856 5398l99-118 88-127-101 120z" fill="url(#gh4)"/><path d="M3955 5280l104-108 89-129-105 110z" fill="url(#gh5)"/><path d="M4059 5172l110-78 90-131-111 80z" fill="url(#gh6)"/><path d="M4169 5094l116-31 91-133-117 33z" fill="url(#gh7)"/><path d="M4285 5063l121 28 91-134-121-27z" fill="url(#gh8)"/><path d="M4406 5091l125 91 91-134-125-91z" fill="url(#gh9)"/><path d="M4531 5182l127 152 90-135-126-151z" fill="url(#gha)"/><path d="M4658 5334l127 198 89-134-126-199z" fill="url(#ghb)"/><path d="M4785 5532l126 229 88-134-125-229z" fill="url(#ghc)"/><path d="M4911 5761l124 238 86-134-122-238z" fill="url(#ghd)"/><path d="M5035 5999l121 229 86-133-121-230z" fill="url(#ghe)"/><path d="M5156 6228l120 202 85-133-119-202z" fill="url(#ghf)"/><path d="M5276 6430l120 163 84-134-119-162z" fill="url(#ghg)"/><path d="M5396 6593l121 114 84-134-121-114z" fill="url(#ghh)"/><path d="M5517 6707l125 61 84-134-125-61z" fill="url(#ghi)"/><path d="M5642 6768l130 10 84-136-130-8z" fill="url(#ghj)"/><path d="M5772 6778l137-37 84-138-137 39z" fill="url(#ghk)"/><path d="M5909 6741l144-74 86-140-146 76z" fill="url(#ghl)"/><path d="M6053 6667l151-99 87-142-152 101z" fill="url(#ghm)"/><path d="M6204 6568l158-106 88-144-159 108z" fill="url(#ghn)"/><path d="M6362 6462l163-92 89-147-164 95z" fill="url(#gho)"/><path d="M6525 6370l163-60 90-149-164 62z" fill="url(#ghp)"/><path d="M6688 6310l160-10 91-151-161 12z" fill="url(#ghq)"/><path d="M6848 6300l155 51 90-152-154-50z" fill="url(#ghr)"/><path d="M7003 6351l144 115 90-153-144-114z" fill="url(#ghs)"/><path d="M2098 4219l94 11 79-175-94-9z" fill="url(#ght)"/><path d="M2192 4230l106 72 80-175-107-72z" fill="url(#ghu)"/><path d="M2298 4302l118 131 80-175-118-131z" fill="url(#ghv)"/><path d="M2416 4433l126 180 79-175-125-180z" fill="url(#ghw)"/><path d="M2542 4613l131 212 79-173-131-214z" fill="url(#ghx)"/><path d="M2673 4825l131 225 79-172-131-226z" fill="url(#ghy)"/><path d="M2804 5050l129 218 78-169-128-221z" fill="url(#ghz)"/><path d="M2933 5268l124 196 78-169-124-196z" fill="url(#gi0)"/><path d="M3057 5464l118 158 77-168-117-159z" fill="url(#gi1)"/><path d="M3175 5622l110 111 78-168-111-111z" fill="url(#gi2)"/><path d="M3285 5733l105 60 77-169-104-59z" fill="url(#gi3)"/><path d="M3390 5793l99 7 78-170-100-6z" fill="url(#gi4)"/><path d="M3489 5800l95-40 80-172-97 42z" fill="url(#gi5)"/><path d="M3584 5760l94-79 81-174-95 81z" fill="url(#gi6)"/><path d="M3678 5681l95-105 83-178-97 109z" fill="url(#gi7)"/><path d="M3773 5576l98-114 84-182-99 118z" fill="url(#gi8)"/><path d="M3871 5462l103-105 85-185-104 108z" fill="url(#gi9)"/><path d="M3974 5357l108-76 87-187-110 78z" fill="url(#gia)"/><path d="M4082 5281l115-29 88-189-116 31z" fill="url(#gib)"/><path d="M4197 5252l121 30 88-191-121-28z" fill="url(#gic)"/><path d="M4318 5282l124 92 89-192-125-91z" fill="url(#gid)"/><path d="M4442 5374l127 151 89-191-127-152z" fill="url(#gie)"/><path d="M4569 5525l128 197 88-190-127-198z" fill="url(#gif)"/><path d="M4697 5722l126 227 88-188-126-229z" fill="url(#gig)"/><path d="M4823 5949l124 237 88-187-124-238z" fill="url(#gih)"/><path d="M4947 6186l122 226 87-184-121-229z" fill="url(#gii)"/><path d="M5069 6412l121 201 86-183-120-202z" fill="url(#gij)"/><path d="M5190 6613l120 162 86-182-120-163z" fill="url(#gik)"/><path d="M5310 6775l121 114 86-182-121-114z" fill="url(#gil)"/><path d="M5431 6889l125 63 86-184-125-61z" fill="url(#gim)"/><path d="M5556 6952l129 11 87-185-130-10z" fill="url(#gin)"/><path d="M5685 6963l135-34 89-188-137 37z" fill="url(#gio)"/><path d="M5820 6929l142-71 91-191-144 74z" fill="url(#gip)"/><path d="M5962 6858l150-95 92-195-151 99z" fill="url(#giq)"/><path d="M6112 6763l156-101 94-200-158 106z" fill="url(#gir)"/><path d="M6268 6662l160-89 97-203-163 92z" fill="url(#gis)"/><path d="M6428 6573l161-56 99-207-163 60z" fill="url(#git)"/><path d="M6589 6517l160-8 99-209-160 10z" fill="url(#giu)"/><path d="M6749 6509l153 53 101-211-155-51z" fill="url(#giv)"/><path d="M6902 6562l144 115 101-211-144-115z" fill="url(#giw)"/><path d="M2029 4436l92 12 71-218-94-11z" fill="url(#gix)"/><path d="M2121 4448l106 73 71-219-106-72z" fill="url(#giy)"/><path d="M2227 4521l118 130 71-218-118-131z" fill="url(#giz)"/><path d="M2345 4651l126 178 71-216-126-180z" fill="url(#gj0)"/><path d="M2471 4829l131 210 71-214-131-212z" fill="url(#gj1)"/><path d="M2602 5039l131 222 71-211-131-225z" fill="url(#gj2)"/><path d="M2733 5261l129 216 71-209-129-218z" fill="url(#gj3)"/><path d="M2862 5477l124 193 71-206-124-196z" fill="url(#gj4)"/><path d="M2986 5670l117 157 72-205-118-158z" fill="url(#gj5)"/><path d="M3103 5827l111 111 71-205-110-111z" fill="url(#gj6)"/><path d="M3214 5938l103 60 73-205-105-60z" fill="url(#gj7)"/><path d="M3317 5998l98 10 74-208-99-7z" fill="url(#gj8)"/><path d="M3415 6008l94-38 75-210-95 40z" fill="url(#gj9)"/><path d="M3509 5970l93-75 76-214-94 79z" fill="url(#gja)"/><path d="M3602 5895l93-101 78-218-95 105z" fill="url(#gjb)"/><path d="M3695 5794l96-110 80-222-98 114z" fill="url(#gjc)"/><path d="M3791 5684l101-100 82-227-103 105z" fill="url(#gjd)"/><path d="M3892 5584l107-72 83-231-108 76z" fill="url(#gje)"/><path d="M3999 5512l113-26 85-234-115 29z" fill="url(#gjf)"/><path d="M4112 5486l120 31 86-235-121-30z" fill="url(#gjg)"/><path d="M4232 5517l123 92 87-235-124-92z" fill="url(#gjh)"/><path d="M4355 5609l127 150 87-234-127-151z" fill="url(#gji)"/><path d="M4482 5759l127 195 88-232-128-197z" fill="url(#gjj)"/><path d="M4609 5954l127 224 87-229-126-227z" fill="url(#gjk)"/><path d="M4736 6178l124 234 87-226-124-237z" fill="url(#gjl)"/><path d="M4860 6412l123 224 86-224-122-226z" fill="url(#gjm)"/><path d="M4983 6636l120 198 87-221-121-201z" fill="url(#gjn)"/><path d="M5103 6834l120 161 87-220-120-162z" fill="url(#gjo)"/><path d="M5223 6995l121 113 87-219-121-114z" fill="url(#gjp)"/><path d="M5344 7108l123 64 89-220-125-63z" fill="url(#gjq)"/><path d="M5467 7172l128 14 90-223-129-11z" fill="url(#gjr)"/><path d="M5595 7186l133-31 92-226-135 34z" fill="url(#gjs)"/><path d="M5728 7155l140-67 94-230-142 71z" fill="url(#gjt)"/><path d="M5868 7088l147-90 97-235-150 95z" fill="url(#gju)"/><path d="M6015 6998l154-96 99-240-156 101z" fill="url(#gjv)"/><path d="M6169 6902l157-84 102-245-160 89z" fill="url(#gjw)"/><path d="M6326 6818l159-52 104-249-161 56z" fill="url(#gjx)"/><path d="M6485 6766l158-4 106-253-160 8z" fill="url(#gjy)"/><path d="M6643 6762l151 54 108-254-153-53z" fill="url(#gjz)"/><path d="M6794 6816l143 115 109-254-144-115z" fill="url(#gk0)"/><path d="M1966 4678l92 14 63-244-92-12z" fill="url(#gk1)"/><path d="M2058 4692l105 73 64-244-106-73z" fill="url(#gk2)"/><path d="M2163 4765l116 129 66-243-118-130z" fill="url(#gk3)"/><path d="M2279 4894l126 176 66-241-126-178z" fill="url(#gk4)"/><path d="M2405 5070l130 207 67-238-131-210z" fill="url(#gk5)"/><path d="M2535 5277l132 219 66-235-131-222z" fill="url(#gk6)"/><path d="M2667 5496l129 213 66-232-129-216z" fill="url(#gk7)"/><path d="M2796 5709l123 190 67-229-124-193z" fill="url(#gk8)"/><path d="M2919 5899l117 155 67-227-117-157z" fill="url(#gk9)"/><path d="M3036 6054l110 111 68-227-111-111z" fill="url(#gka)"/><path d="M3146 6165l102 61 69-228-103-60z" fill="url(#gkb)"/><path d="M3248 6226l97 11 70-229-98-10z" fill="url(#gkc)"/><path d="M3345 6237l93-34 71-233-94 38z" fill="url(#gkd)"/><path d="M3438 6203l91-72 73-236-93 75z" fill="url(#gke)"/><path d="M3529 6131l91-96 75-241-93 101z" fill="url(#gkf)"/><path d="M3620 6035l95-105 76-246-96 110z" fill="url(#gkg)"/><path d="M3715 5930l98-95 79-251-101 100z" fill="url(#gkh)"/><path d="M3813 5835l105-68 81-255-107 72z" fill="url(#gki)"/><path d="M3918 5767l112-23 82-258-113 26z" fill="url(#gkj)"/><path d="M4030 5744l118 33 84-260-120-31z" fill="url(#gkk)"/><path d="M4148 5777l123 93 84-261-123-92z" fill="url(#gkl)"/><path d="M4271 5870l126 148 85-259-127-150z" fill="url(#gkm)"/><path d="M4397 6018l127 193 85-257-127-195z" fill="url(#gkn)"/><path d="M4524 6211l126 220 86-253-127-224z" fill="url(#gko)"/><path d="M4650 6431l125 230 85-249-124-234z" fill="url(#gkp)"/><path d="M4775 6661l122 220 86-245-123-224z" fill="url(#gkq)"/><path d="M4897 6881l120 196 86-243-120-198z" fill="url(#gkr)"/><path d="M5017 7077l120 158 86-240-120-161z" fill="url(#gks)"/><path d="M5137 7235l120 114 87-241-121-113z" fill="url(#gkt)"/><path d="M5257 7349l122 64 88-241-123-64z" fill="url(#gku)"/><path d="M5379 7413l126 16 90-243-128-14z" fill="url(#gkv)"/><path d="M5505 7429l131-27 92-247-133 31z" fill="url(#gkw)"/><path d="M5636 7402l138-63 94-251-140 67z" fill="url(#gkx)"/><path d="M5774 7339l144-84 97-257-147 90z" fill="url(#gky)"/><path d="M5918 7255l150-90 101-263-154 96z" fill="url(#gkz)"/><path d="M6068 7165l155-78 103-269-157 84z" fill="url(#gl0)"/><path d="M6223 7087l156-47 106-274-159 52z" fill="url(#gl1)"/><path d="M6379 7040l155-1 109-277-158 4z" fill="url(#gl2)"/><path d="M6534 7039l149 56 111-279-151-54z" fill="url(#gl3)"/><path d="M6683 7095l142 115 112-279-143-115z" fill="url(#gl4)"/><path d="M1906 4925l90 16 62-249-92-14z" fill="url(#gl5)"/><path d="M1996 4941l104 73 63-249-105-73z" fill="url(#gl6)"/><path d="M2100 5014l117 128 62-248-116-129z" fill="url(#gl7)"/><path d="M2217 5142l125 174 63-246-126-176z" fill="url(#gl8)"/><path d="M2342 5316l130 203 63-242-130-207z" fill="url(#gl9)"/><path d="M2472 5519l131 216 64-239-132-219z" fill="url(#gla)"/><path d="M2603 5735l128 210 65-236-129-213z" fill="url(#glb)"/><path d="M2731 5945l123 188 65-234-123-190z" fill="url(#glc)"/><path d="M2854 6133l117 153 65-232-117-155z" fill="url(#gld)"/><path d="M2971 6286l109 110 66-231-110-111z" fill="url(#gle)"/><path d="M3080 6396l102 61 66-231-102-61z" fill="url(#glf)"/><path d="M3182 6457l95 13 68-233-97-11z" fill="url(#glg)"/><path d="M3277 6470l92-31 69-236-93 34z" fill="url(#glh)"/><path d="M3369 6439l89-67 71-241-91 72z" fill="url(#gli)"/><path d="M3458 6372l89-91 73-246-91 96z" fill="url(#glj)"/><path d="M3547 6281l93-100 75-251-95 105z" fill="url(#glk)"/><path d="M3640 6181l97-91 76-255-98 95z" fill="url(#gll)"/><path d="M3737 6090l103-63 78-260-105 68z" fill="url(#glm)"/><path d="M3840 6027l109-19 81-264-112 23z" fill="url(#gln)"/><path d="M3949 6008l117 34 82-265-118-33z" fill="url(#glo)"/><path d="M4066 6042l122 93 83-265-123-93z" fill="url(#glp)"/><path d="M4188 6135l125 146 84-263-126-148z" fill="url(#glq)"/><path d="M4313 6281l126 190 85-260-127-193z" fill="url(#glr)"/><path d="M4439 6471l127 217 84-257-126-220z" fill="url(#gls)"/><path d="M4566 6688l124 226 85-253-125-230z" fill="url(#glt)"/><path d="M4690 6914l122 217 85-250-122-220z" fill="url(#glu)"/><path d="M4812 7131l120 193 85-247-120-196z" fill="url(#glv)"/><path d="M4932 7324l119 156 86-245-120-158z" fill="url(#glw)"/><path d="M5051 7480l119 113 87-244-120-114z" fill="url(#glx)"/><path d="M5170 7593l121 65 88-245-122-64z" fill="url(#gly)"/><path d="M5291 7658l124 19 90-248-126-16z" fill="url(#glz)"/><path d="M5415 7677l129-24 92-251-131 27z" fill="url(#gm0)"/><path d="M5544 7653l135-58 95-256-138 63z" fill="url(#gm1)"/><path d="M5679 7595l142-79 97-261-144 84z" fill="url(#gm2)"/><path d="M5821 7516l147-84 100-267-150 90z" fill="url(#gm3)"/><path d="M5968 7432l152-72 103-273-155 78z" fill="url(#gm4)"/><path d="M6120 7360l153-43 106-277-156 47z" fill="url(#gm5)"/><path d="M6273 7317l152 3 109-281-155 1z" fill="url(#gm6)"/><path d="M6425 7320l148 57 110-282-149-56z" fill="url(#gm7)"/><path d="M6573 7377l141 115 111-282-142-115z" fill="url(#gm8)"/><path d="M1844 5159l89 17 63-235-90-16z" fill="url(#gm9)"/><path d="M1933 5176l104 74 63-236-104-73z" fill="url(#gma)"/><path d="M2037 5250l115 127 65-235-117-128z" fill="url(#gmb)"/><path d="M2152 5377l125 171 65-232-125-174z" fill="url(#gmc)"/><path d="M2277 5548l130 201 65-230-130-203z" fill="url(#gmd)"/><path d="M2407 5749l130 213 66-227-131-216z" fill="url(#gme)"/><path d="M2537 5962l129 207 65-224-128-210z" fill="url(#gmf)"/><path d="M2666 6169l123 185 65-221-123-188z" fill="url(#gmg)"/><path d="M2789 6354l116 152 66-220-117-153z" fill="url(#gmh)"/><path d="M2905 6506l108 109 67-219-109-110z" fill="url(#gmi)"/><path d="M3013 6615l101 62 68-220-102-61z" fill="url(#gmj)"/><path d="M3114 6677l95 15 68-222-95-13z" fill="url(#gmk)"/><path d="M3209 6692l90-29 70-224-92 31z" fill="url(#gml)"/><path d="M3299 6663l87-63 72-228-89 67z" fill="url(#gmm)"/><path d="M3386 6600l88-87 73-232-89 91z" fill="url(#gmn)"/><path d="M3474 6513l90-95 76-237-93 100z" fill="url(#gmo)"/><path d="M3564 6418l95-86 78-242-97 91z" fill="url(#gmp)"/><path d="M3659 6332l102-59 79-246-103 63z" fill="url(#gmq)"/><path d="M3761 6273l108-16 80-249-109 19z" fill="url(#gmr)"/><path d="M3869 6257l115 36 82-251-117-34z" fill="url(#gms)"/><path d="M3984 6293l121 93 83-251-122-93z" fill="url(#gmt)"/><path d="M4105 6386l125 145 83-250-125-146z" fill="url(#gmu)"/><path d="M4230 6531l126 187 83-247-126-190z" fill="url(#gmv)"/><path d="M4356 6718l126 214 84-244-127-217z" fill="url(#gmw)"/><path d="M4482 6932l124 222 84-240-124-226z" fill="url(#gmx)"/><path d="M4606 7154l122 214 84-237-122-217z" fill="url(#gmy)"/><path d="M4728 7368l120 190 84-234-120-193z" fill="url(#gmz)"/><path d="M4848 7558l119 155 84-233-119-156z" fill="url(#gn0)"/><path d="M4967 7713l118 112 85-232-119-113z" fill="url(#gn1)"/><path d="M5085 7825l120 66 86-233-121-65z" fill="url(#gn2)"/><path d="M5205 7891l122 21 88-235-124-19z" fill="url(#gn3)"/><path d="M5327 7912l128-21 89-238-129 24z" fill="url(#gn4)"/><path d="M5455 7891l132-53 92-243-135 58z" fill="url(#gn5)"/><path d="M5587 7838l139-74 95-248-142 79z" fill="url(#gn6)"/><path d="M5726 7764l144-79 98-253-147 84z" fill="url(#gn7)"/><path d="M5870 7685l149-66 101-259-152 72z" fill="url(#gn8)"/><path d="M6019 7619l151-38 103-264-153 43z" fill="url(#gn9)"/><path d="M6170 7581l150 5 105-266-152-3z" fill="url(#gna)"/><path d="M6320 7586l146 59 107-268-148-57z" fill="url(#gnb)"/><path d="M6466 7645l139 115 109-268-141-115z" fill="url(#gnc)"/><path d="M1775 5362l89 19 69-205-89-17z" fill="url(#gnd)"/><path d="M1864 5381l103 74 70-205-104-74z" fill="url(#gne)"/><path d="M1967 5455l115 127 70-205-115-127z" fill="url(#gnf)"/><path d="M2082 5582l125 169 70-203-125-171z" fill="url(#gng)"/><path d="M2207 5751l130 199 70-201-130-201z" fill="url(#gnh)"/><path d="M2337 5950l131 210 69-198-130-213z" fill="url(#gni)"/><path d="M2468 6160l128 205 70-196-129-207z" fill="url(#gnj)"/><path d="M2596 6365l123 184 70-195-123-185z" fill="url(#gnk)"/><path d="M2719 6549l116 150 70-193-116-152z" fill="url(#gnl)"/><path d="M2835 6699l108 109 70-193-108-109z" fill="url(#gnm)"/><path d="M2943 6808l100 63 71-194-101-62z" fill="url(#gnn)"/><path d="M3043 6871l94 16 72-195-95-15z" fill="url(#gno)"/><path d="M3137 6887l89-26 73-198-90 29z" fill="url(#gnp)"/><path d="M3226 6861l86-60 74-201-87 63z" fill="url(#gnq)"/><path d="M3312 6801l86-83 76-205-88 87z" fill="url(#gnr)"/><path d="M3398 6718l89-91 77-209-90 95z" fill="url(#gns)"/><path d="M3487 6627l93-82 79-213-95 86z" fill="url(#gnt)"/><path d="M3580 6545l100-55 81-217-102 59z" fill="url(#gnu)"/><path d="M3680 6490l107-15 82-218-108 16z" fill="url(#gnv)"/><path d="M3787 6475l114 38 83-220-115-36z" fill="url(#gnw)"/><path d="M3901 6513l120 93 84-220-121-93z" fill="url(#gnx)"/><path d="M4021 6606l124 144 85-219-125-145z" fill="url(#gny)"/><path d="M4145 6750l127 186 84-218-126-187z" fill="url(#gnz)"/><path d="M4272 6936l126 211 84-215-126-214z" fill="url(#go0)"/><path d="M4398 7147l125 220 83-213-124-222z" fill="url(#go1)"/><path d="M4523 7367l122 211 83-210-122-214z" fill="url(#go2)"/><path d="M4645 7578l120 188 83-208-120-190z" fill="url(#go3)"/><path d="M4765 7766l118 153 84-206-119-155z" fill="url(#go4)"/><path d="M4883 7919l118 112 84-206-118-112z" fill="url(#go5)"/><path d="M5001 8031l119 67 85-207-120-66z" fill="url(#go6)"/><path d="M5120 8098l121 23 86-209-122-21z" fill="url(#go7)"/><path d="M5241 8121l126-18 88-212-128 21z" fill="url(#go8)"/><path d="M5367 8103l131-49 89-216-132 53z" fill="url(#go9)"/><path d="M5498 8054l136-69 92-221-139 74z" fill="url(#goa)"/><path d="M5634 7985l142-75 94-225-144 79z" fill="url(#gob)"/><path d="M5776 7910l146-62 97-229-149 66z" fill="url(#goc)"/><path d="M5922 7848l149-34 99-233-151 38z" fill="url(#god)"/><path d="M6071 7814l148 8 101-236-150-5z" fill="url(#goe)"/><path d="M6219 7822l145 61 102-238-146-59z" fill="url(#gof)"/><path d="M6364 7883l138 114 103-237-139-115z" fill="url(#gog)"/><path d="M1697 5524l89 20 78-163-89-19z" fill="url(#goh)"/><path d="M1786 5544l102 74 79-163-103-74z" fill="url(#goi)"/><path d="M1888 5618l116 127 78-163-115-127z" fill="url(#goj)"/><path d="M2004 5745l124 169 79-163-125-169z" fill="url(#gok)"/><path d="M2128 5914l131 197 78-161-130-199z" fill="url(#gol)"/><path d="M2259 6111l131 209 78-160-131-210z" fill="url(#gom)"/><path d="M2390 6320l129 204 77-159-128-205z" fill="url(#gon)"/><path d="M2519 6524l124 182 76-157-123-184z" fill="url(#goo)"/><path d="M2643 6706l116 150 76-157-116-150z" fill="url(#gop)"/><path d="M3148 7022l85-58 79-163-86 60z" fill="url(#goq)"/><path d="M3233 6964l85-80 80-166-86 83z" fill="url(#gor)"/><path d="M3318 6884l87-88 82-169-89 91z" fill="url(#gos)"/><path d="M3405 6796l92-79 83-172-93 82z" fill="url(#got)"/><path d="M3497 6717l98-53 85-174-100 55z" fill="url(#gou)"/><path d="M3595 6664l106-12 86-177-107 15z" fill="url(#gov)"/><path d="M3701 6652l114 39 86-178-114-38z" fill="url(#gow)"/><path d="M3815 6691l119 93 87-178-120-93z" fill="url(#gox)"/><path d="M3934 6784l125 144 86-178-124-144z" fill="url(#goy)"/><path d="M4059 6928l127 185 86-177-127-186z" fill="url(#goz)"/><path d="M4186 7113l126 209 86-175-126-211z" fill="url(#gp0)"/><path d="M4312 7322l126 218 85-173-125-220z" fill="url(#gp1)"/><path d="M4438 7540l123 210 84-172-122-211z" fill="url(#gp2)"/><path d="M4561 7750l121 187 83-171-120-188z" fill="url(#gp3)"/><path d="M4682 7937l118 153 83-171-118-153z" fill="url(#gp4)"/><path d="M4800 8090l118 112 83-171-118-112z" fill="url(#gp5)"/><path d="M4918 8202l118 68 84-172-119-67z" fill="url(#gp6)"/><path d="M5036 8270l121 24 84-173-121-23z" fill="url(#gp7)"/><path d="M5157 8294l124-15 86-176-126 18z" fill="url(#gp8)"/><path d="M5281 8279l129-47 88-178-131 49z" fill="url(#gp9)"/><path d="M5410 8232l135-65 89-182-136 69z" fill="url(#gpa)"/><path d="M5545 8167l140-71 91-186-142 75z" fill="url(#gpb)"/><path d="M5685 8096l145-59 92-189-146 62z" fill="url(#gpc)"/><path d="M5830 8037l147-31 94-192-149 34z" fill="url(#gpd)"/><path d="M5977 8006l147 11 95-195-148-8z" fill="url(#gpe)"/><path d="M6124 8017l144 62 96-196-145-61z" fill="url(#gpf)"/><path d="M6268 8079l138 115 96-197-138-114z" fill="url(#gpg)"/><path d="M1606 5636l88 21 92-113-89-20z" fill="url(#gph)"/><path d="M1694 5657l103 75 91-114-102-74z" fill="url(#gpi)"/><path d="M1797 5732l116 126 91-113-116-127z" fill="url(#gpj)"/><path d="M1913 5858l126 170 89-114-124-169z" fill="url(#gpk)"/><path d="M2039 6028l131 197 89-114-131-197z" fill="url(#gpl)"/><path d="M2170 6225l133 209 87-114-131-209z" fill="url(#gpm)"/><path d="M2303 6434l130 203 86-113-129-204z" fill="url(#gpn)"/><path d="M2433 6637l124 183 86-114-124-182z" fill="url(#gpo)"/><path d="M2557 6820l117 150 85-114-116-150z" fill="url(#gpp)"/><path d="M3230 7004l86-86 89-122-87 88z" fill="url(#gpq)"/><path d="M3316 6918l91-77 90-124-92 79z" fill="url(#gpr)"/><path d="M3407 6841l97-51 91-126-98 53z" fill="url(#gps)"/><path d="M3504 6790l106-11 91-127-106 12z" fill="url(#gpt)"/><path d="M3610 6779l113 40 92-128-114-39z" fill="url(#gpu)"/><path d="M3723 6819l120 94 91-129-119-93z" fill="url(#gpv)"/><path d="M3843 6913l125 145 91-130-125-144z" fill="url(#gpw)"/><path d="M3968 7058l128 184 90-129-127-185z" fill="url(#gpx)"/><path d="M4096 7242l128 210 88-130-126-209z" fill="url(#gpy)"/><path d="M4224 7452l127 217 87-129-126-218z" fill="url(#gpz)"/><path d="M4351 7669l124 210 86-129-123-210z" fill="url(#gq0)"/><path d="M4475 7879l122 186 85-128-121-187z" fill="url(#gq1)"/><path d="M4597 8065l119 154 84-129-118-153z" fill="url(#gq2)"/><path d="M4716 8219l118 112 84-129-118-112z" fill="url(#gq3)"/><path d="M4834 8331l118 69 84-130-118-68z" fill="url(#gq4)"/><path d="M4952 8400l121 25 84-131-121-24z" fill="url(#gq5)"/><path d="M5324 8368l134-64 87-137-135 65z" fill="url(#gq6)"/><path d="M5458 8304l139-68 88-140-140 71z" fill="url(#gq7)"/><path d="M5597 8236l144-56 89-143-145 59z" fill="url(#gq8)"/><path d="M5741 8180l146-29 90-145-147 31z" fill="url(#gq9)"/><path d="M5887 8151l146 13 91-147-147-11z" fill="url(#gqa)"/><path d="M6033 8164l144 63 91-148-144-62z" fill="url(#gqb)"/><path d="M6177 8227l139 116 90-149-138-115z" fill="url(#gqc)"/><path d="M1500 5695l88 21 106-59-88-21z" fill="url(#gqd)"/><path d="M1588 5716l103 76 106-60-103-75z" fill="url(#gqe)"/><path d="M1691 5792l117 128 105-62-116-126z" fill="url(#gqf)"/><path d="M1808 5920l127 170 104-62-126-170z" fill="url(#gqg)"/><path d="M1935 6090l133 199 102-64-131-197z" fill="url(#gqh)"/><path d="M2068 6289l135 210 100-65-133-209z" fill="url(#gqi)"/><path d="M2203 6499l132 204 98-66-130-203z" fill="url(#gqj)"/><path d="M2335 6703l126 184 96-67-124-183z" fill="url(#gqk)"/><path d="M2461 6887l118 151 95-68-117-150z" fill="url(#gql)"/><path d="M2881 7232l87-22 95-71-88 22z" fill="url(#gqm)"/><path d="M3052 7154l82-78 96-72-83 79z" fill="url(#gqn)"/><path d="M3134 7076l85-85 97-73-86 86z" fill="url(#gqo)"/><path d="M3219 6991l90-77 98-73-91 77z" fill="url(#gqp)"/><path d="M3309 6914l97-50 98-74-97 51z" fill="url(#gqq)"/><path d="M3406 6864l105-10 99-75-106 11z" fill="url(#gqr)"/><path d="M3511 6854l113 41 99-76-113-40z" fill="url(#gqs)"/><path d="M3624 6895l121 95 98-77-120-94z" fill="url(#gqt)"/><path d="M3745 6990l127 146 96-78-125-145z" fill="url(#gqu)"/><path d="M3872 7136l129 185 95-79-128-184z" fill="url(#gqv)"/><path d="M4001 7321l130 211 93-80-128-210z" fill="url(#gqw)"/><path d="M4131 7532l129 219 91-82-127-217z" fill="url(#gqx)"/><path d="M4260 7751l126 210 89-82-124-210z" fill="url(#gqy)"/><path d="M4386 7961l123 188 88-84-122-186z" fill="url(#gqz)"/><path d="M4509 8149l121 154 86-84-119-154z" fill="url(#gr0)"/><path d="M4630 8303l119 114 85-86-118-112z" fill="url(#gr1)"/><path d="M4749 8417l119 70 84-87-118-69z" fill="url(#gr2)"/><path d="M5511 8329l144-55 86-94-144 56z" fill="#010009"/><path d="M5655 8274l146-28 86-95-146 29z" fill="url(#gr3)"/><path d="M5801 8246l147 14 85-96-146-13z" fill="url(#gr4)"/><path d="M5948 8260l144 65 85-98-144-63z" fill="url(#gr5)"/><path d="M6092 8325l140 117 84-99-139-116z" fill="url(#gr6)"/><path d="M1377 5703l88 22 123-9-88-21z" fill="url(#gr7)"/><path d="M1465 5725l104 77 122-10-103-76z" fill="url(#gr8)"/><path d="M1569 5802l119 129 120-11-117-128z" fill="url(#gr9)"/><path d="M1688 5931l129 172 118-13-127-170z" fill="url(#gra)"/><path d="M1817 6103l136 201 115-15-133-199z" fill="url(#grb)"/><path d="M1953 6304l137 213 113-18-135-210z" fill="url(#grc)"/><path d="M2090 6517l135 206 110-20-132-204z" fill="url(#grd)"/><path d="M2225 6723l128 186 108-22-126-184z" fill="url(#gre)"/><path d="M2353 6909l120 153 106-24-118-151z" fill="url(#grf)"/><path d="M2864 7237l83-56 105-27-84 56z" fill="url(#grg)"/><path d="M2947 7181l81-79 106-26-82 78z" fill="url(#grh)"/><path d="M3028 7102l84-86 107-25-85 85z" fill="url(#gri)"/><path d="M3112 7016l90-77 107-25-90 77z" fill="url(#grj)"/><path d="M3202 6939l96-51 108-24-97 50z" fill="url(#grk)"/><path d="M3298 6888l105-9 108-25-105 10z" fill="#050005"/><path d="M3403 6879l114 41 107-25-113-41z" fill="url(#grl)"/><path d="M3517 6920l123 97 105-27-121-95z" fill="url(#grm)"/><path d="M3640 7017l128 147 104-28-127-146z" fill="url(#grn)"/><path d="M3768 7164l132 188 101-31-129-185z" fill="url(#gro)"/><path d="M3900 7352l132 214 99-34-130-211z" fill="url(#grp)"/><path d="M4032 7566l131 221 97-36-129-219z" fill="url(#grq)"/><path d="M4163 7787l129 213 94-39-126-210z" fill="url(#grr)"/><path d="M4292 8000l126 190 91-41-123-188z" fill="url(#grs)"/><path d="M4418 8190l122 156 90-43-121-154z" fill="url(#grt)"/><path d="M4540 8346l121 115 88-44-119-114z" fill="url(#gru)"/><path d="M4661 8461l120 71 87-45-119-70z" fill="url(#grv)"/><path d="M5154 8505l133-62 86-47-134 62z" fill="#000207"/><path d="M5426 8376l144-55 85-47-144 55z" fill="#020008"/><path d="M5570 8321l147-28 84-47-146 28z" fill="#030006"/><path d="M5717 8293l148 15 83-48-147-14z" fill="#050005"/><path d="M5865 8308l146 66 81-49-144-65z" fill="url(#grw)"/><path d="M6011 8374l142 119 79-51-140-117z" fill="url(#grx)"/><path d="M1327 5688l105 78 137 36-104-77z" fill="url(#gry)"/><path d="M1432 5766l120 132 136 33-119-129z" fill="url(#grz)"/><path d="M1552 5898l132 175 133 30-129-172z" fill="url(#gs0)"/><path d="M1684 6073l139 204 130 27-136-201z" fill="url(#gs1)"/><path d="M1823 6277l141 216 126 24-137-213z" fill="url(#gs2)"/><path d="M1964 6493l137 210 124 20-135-206z" fill="url(#gs3)"/><path d="M2101 6703l132 189 120 17-128-186z" fill="url(#gs4)"/><path d="M2233 6892l122 155 118 15-120-153z" fill="url(#gs5)"/><path d="M2355 7047l112 113 116 13-110-111z" fill="url(#gs6)"/><path d="M2663 7247l86-22 115 12-87 21z" fill="url(#gs7)"/><path d="M2749 7225l82-57 116 13-83 56z" fill="url(#gs8)"/><path d="M2831 7168l82-80 115 14-81 79z" fill="url(#gs9)"/><path d="M2913 7088l83-88 116 16-84 86z" fill="url(#gsa)"/><path d="M2996 7000l88-79 118 18-90 77z" fill="url(#gsb)"/><path d="M3084 6921l96-52 118 19-96 51z" fill="url(#gsc)"/><path d="M3286 6859l116 42 115 19-114-41z" fill="#070003"/><path d="M3402 6901l124 99 114 17-123-97z" fill="url(#gsd)"/><path d="M3526 7000l130 150 112 14-128-147z" fill="url(#gse)"/><path d="M3656 7150l135 191 109 11-132-188z" fill="url(#gsf)"/><path d="M3791 7341l136 217 105 8-132-214z" fill="url(#gsg)"/><path d="M3927 7558l134 226 102 3-131-221z" fill="url(#gsh)"/><path d="M4061 7784l132 216 99 0-129-213z" fill="url(#gsi)"/><path d="M4193 8000l128 194 97-4-126-190z" fill="url(#gsj)"/><path d="M4321 8194l125 158 94-6-122-156z" fill="url(#gsk)"/><path d="M4446 8352l123 117 92-8-121-115z" fill="url(#gsl)"/><path d="M4569 8469l122 73 90-10-120-71z" fill="#000502"/><path d="M4938 8558l129-44 87-9-128 43z" fill="url(#gsm)"/><path d="M5067 8514l134-63 86-8-133 62z" fill="url(#gsn)"/><path d="M5201 8451l139-68 86-7-139 67z" fill="url(#gso)"/><path d="M5340 8383l145-56 85-6-144 55z" fill="url(#gsp)"/><path d="M5485 8327l149-27 83-7-147 28z" fill="url(#gsq)"/><path d="M5634 8300l149 15 82-7-148-15z" fill="#060004"/><path d="M5783 8315l149 67 79-8-146-66z" fill="#070003"/><path d="M5932 8382l144 121 77-10-142-119z" fill="url(#gsr)"/><path d="M1173 5618l107 79 152 69-105-78z" fill="#090001"/><path d="M1280 5697l123 134 149 67-120-132z" fill="url(#gss)"/><path d="M1403 5831l136 179 145 63-132-175z" fill="url(#gst)"/><path d="M1539 6010l142 208 142 59-139-204z" fill="url(#gsu)"/><path d="M1681 6218l144 221 139 54-141-216z" fill="url(#gsv)"/><path d="M1825 6439l142 215 134 49-137-210z" fill="url(#gsw)"/><path d="M1967 6654l134 192 132 46-132-189z" fill="url(#gsx)"/><path d="M2101 6846l125 158 129 43-122-155z" fill="url(#gsy)"/><path d="M2226 7004l114 115 127 41-112-113z" fill="url(#gsz)"/><path d="M2340 7119l104 68 125 40-102-67z" fill="#000304"/><path d="M2444 7187l94 20 125 40-94-20z" fill="url(#gt0)"/><path d="M2538 7207l87-23 124 41-86 22z" fill="url(#gt1)"/><path d="M2625 7184l82-59 124 43-82 57z" fill="url(#gt2)"/><path d="M2707 7125l80-82 126 45-82 80z" fill="url(#gt3)"/><path d="M2787 7043l82-91 127 48-83 88z" fill="url(#gt4)"/><path d="M2869 6952l88-81 127 50-88 79z" fill="url(#gt5)"/><path d="M2957 6871l97-54 126 52-96 52z" fill="url(#gt6)"/><path d="M3054 6817l106-11 126 53-106 10z" fill="url(#gt7)"/><path d="M3277 6849l126 100 123 51-124-99z" fill="#090001"/><path d="M3403 6949l134 154 119 47-130-150z" fill="url(#gt8)"/><path d="M3537 7103l138 195 116 43-135-191z" fill="url(#gt9)"/><path d="M3675 7298l139 222 113 38-136-217z" fill="url(#gta)"/><path d="M3814 7520l139 231 108 33-134-226z" fill="url(#gtb)"/><path d="M3953 7751l135 221 105 28-132-216z" fill="url(#gtc)"/><path d="M4088 7972l132 197 101 25-128-194z" fill="url(#gtd)"/><path d="M4220 8169l128 163 98 20-125-158z" fill="url(#gte)"/><path d="M4348 8332l125 119 96 18-123-117z" fill="url(#gtf)"/><path d="M4473 8451l123 74 95 17-122-73z" fill="#000304"/><path d="M4720 8553l126-13 92 18-125 12z" fill="url(#gtg)"/><path d="M4846 8540l130-44 91 18-129 44z" fill="url(#gth)"/><path d="M4976 8496l135-65 90 20-134 63z" fill="url(#gti)"/><path d="M5111 8431l141-70 88 22-139 68z" fill="url(#gtj)"/><path d="M5252 8361l146-58 87 24-145 56z" fill="url(#gtk)"/><path d="M5398 8303l151-28 85 25-149 27z" fill="url(#gtl)"/><path d="M5549 8275l152 15 82 25-149-15z" fill="url(#gtm)"/><path d="M5701 8290l151 68 80 24-149-67z" fill="#090001"/><path d="M5852 8358l148 125 76 20-144-121z" fill="#090001"/><path d="M920 5506l89 22 164 90-88-22z" fill="url(#gtn)"/><path d="M1009 5528l109 80 162 89-107-79z" fill="#0a0100"/><path d="M1118 5608l126 137 159 86-123-134z" fill="url(#gto)"/><path d="M1244 5745l138 183 157 82-136-179z" fill="url(#gtp)"/><path d="M1382 5928l147 214 152 76-142-208z" fill="url(#gtq)"/><path d="M1529 6142l149 226 147 71-144-221z" fill="url(#gtr)"/><path d="M1678 6368l145 219 144 67-142-215z" fill="url(#gts)"/><path d="M1823 6587l138 197 140 62-134-192z" fill="url(#gtt)"/><path d="M1961 6784l128 161 137 59-125-158z" fill="url(#gtu)"/><path d="M2089 6945l117 118 134 56-114-115z" fill="#000207"/><path d="M2206 7063l105 69 133 55-104-68z" fill="#000207"/><path d="M2311 7132l95 20 132 55-94-20z" fill="url(#gtv)"/><path d="M2406 7152l86-25 133 57-87 23z" fill="url(#gtw)"/><path d="M2492 7127l82-61 133 59-82 59z" fill="url(#gtx)"/><path d="M2574 7066l79-85 134 62-80 82z" fill="url(#gty)"/><path d="M2653 6981l82-93 134 64-82 91z" fill="url(#gtz)"/><path d="M2735 6888l87-84 135 67-88 81z" fill="url(#gu0)"/><path d="M2822 6804l96-57 136 70-97 54z" fill="url(#gu1)"/><path d="M2918 6747l107-12 135 71-106 11z" fill="url(#gu2)"/><path d="M3025 6735l119 43 133 71-117-43z" fill="url(#gu3)"/><path d="M3144 6778l129 102 130 69-126-100z" fill="#0a0100"/><path d="M3273 6880l137 158 127 65-134-154z" fill="url(#gu4)"/><path d="M3410 7038l142 200 123 60-138-195z" fill="url(#gu5)"/><path d="M3552 7238l144 228 118 54-139-222z" fill="url(#gu6)"/><path d="M3696 7466l142 236 115 49-139-231z" fill="url(#gu7)"/><path d="M3838 7702l140 227 110 43-135-221z" fill="url(#gu8)"/><path d="M3978 7929l135 202 107 38-132-197z" fill="url(#gu9)"/><path d="M4113 8131l131 165 104 36-128-163z" fill="url(#gua)"/><path d="M4244 8296l128 122 101 33-125-119z" fill="#000207"/><path d="M4372 8418l125 75 99 32-123-74z" fill="#000207"/><path d="M4497 8493l126 29 97 31-124-28z" fill="url(#gub)"/><path d="M4623 8522l127-13 96 31-126 13z" fill="url(#guc)"/><path d="M4750 8509l132-46 94 33-130 44z" fill="url(#gud)"/><path d="M4882 8463l136-67 93 35-135 65z" fill="url(#gue)"/><path d="M5018 8396l142-73 92 38-141 70z" fill="url(#guf)"/><path d="M5160 8323l148-60 90 40-146 58z" fill="url(#gug)"/><path d="M5308 8263l153-30 88 42-151 28z" fill="url(#guh)"/><path d="M5461 8233l155 15 85 42-152-15z" fill="url(#gui)"/><path d="M5616 8248l154 70 82 40-151-68z" fill="url(#guj)"/><path d="M5770 8318l152 127 78 38-148-125z" fill="#0a0100"/><path d="M749 5416l90 21 170 91-89-22z" fill="url(#guk)"/><path d="M839 5437l110 82 169 89-109-80z" fill="#0a0400"/><path d="M949 5519l129 140 166 86-126-137z" fill="url(#gul)"/><path d="M1078 5659l143 187 161 82-138-183z" fill="url(#gum)"/><path d="M1221 5846l151 219 157 77-147-214z" fill="url(#gun)"/><path d="M1372 6065l153 231 153 72-149-226z" fill="url(#guo)"/><path d="M1525 6296l149 225 149 66-145-219z" fill="url(#gup)"/><path d="M1674 6521l142 201 145 62-138-197z" fill="url(#guq)"/><path d="M1816 6722l131 165 142 58-128-161z" fill="url(#gur)"/><path d="M1947 6887l119 120 140 56-117-118z" fill="#00000a"/><path d="M2066 7007l107 70 138 55-105-69z" fill="#000009"/><path d="M2173 7077l95 20 138 55-95-20z" fill="url(#gus)"/><path d="M2268 7097l87-26 137 56-86 25z" fill="url(#gut)"/><path d="M2355 7071l81-63 138 58-82 61z" fill="url(#guu)"/><path d="M2436 7008l78-88 139 61-79 85z" fill="url(#guv)"/><path d="M2514 6920l81-97 140 65-82 93z" fill="url(#guw)"/><path d="M2595 6823l87-87 140 68-87 84z" fill="url(#gux)"/><path d="M2682 6736l96-59 140 70-96 57z" fill="url(#guy)"/><path d="M2778 6677l107-13 140 71-107 12z" fill="url(#guz)"/><path d="M2885 6664l120 43 139 71-119-43z" fill="url(#gv0)"/><path d="M3005 6707l132 104 136 69-129-102z" fill="#0a0400"/><path d="M3137 6811l140 161 133 66-137-158z" fill="url(#gv1)"/><path d="M3277 6972l146 206 129 60-142-200z" fill="url(#gv2)"/><path d="M3423 7178l149 233 124 55-144-228z" fill="url(#gv3)"/><path d="M3572 7411l147 242 119 49-142-236z" fill="url(#gv4)"/><path d="M3719 7653l143 233 116 43-140-227z" fill="url(#gv5)"/><path d="M3862 7886l140 206 111 39-135-202z" fill="url(#gv6)"/><path d="M4002 8092l134 170 108 34-131-165z" fill="url(#gv7)"/><path d="M4136 8262l130 125 106 31-128-122z" fill="#000009"/><path d="M4266 8387l128 76 103 30-125-75z" fill="#000009"/><path d="M4394 8463l128 29 101 30-126-29z" fill="url(#gv8)"/><path d="M4522 8492l128-14 100 31-127 13z" fill="url(#gv9)"/><path d="M4650 8478l133-48 99 33-132 46z" fill="url(#gva)"/><path d="M4783 8430l137-69 98 35-136 67z" fill="url(#gvb)"/><path d="M4920 8361l144-75 96 37-142 73z" fill="url(#gvc)"/><path d="M5064 8286l149-62 95 39-148 60z" fill="url(#gvd)"/><path d="M5213 8224l155-32 93 41-153 30z" fill="url(#gve)"/><path d="M5368 8192l158 15 90 41-155-15z" fill="url(#gvf)"/><path d="M5526 8207l157 72 87 39-154-70z" fill="url(#gvg)"/><path d="M5683 8279l156 130 83 36-152-127z" fill="#0a0400"/></g>
<g font-family="Liberation Sans,DejaVu Sans,sans-serif" font-size="9.7" text-anchor="middle" fill="#e9e9e9" stroke="#777" stroke-width="0.85"><g><g transform="matrix(0.6279 -0.5351 0.5625 0.3789 97.60 731.45)"><rect x="-15.50" y="-7.2" width="31.00" height="14.4" rx="3"/><text y="3.5">-20.00</text></g><g transform="matrix(0.8476 0.5517 -0.5176 0.7799 611.57 1019.06)"><rect x="-15.50" y="-7.2" width="31.00" height="14.4" rx="3"/><text y="3.5">-20.00</text></g><g transform="matrix(0.6245 -0.5546 0.5829 0.3927 134.82 756.52)"><rect x="-15.50" y="-7.2" width="31.00" height="14.4" rx="3"/><text y="3.5">-16.00</text></g><g transform="matrix(0.8331 0.5198 -0.4876 0.7347 644.22 969.85)"><rect x="-15.50" y="-7.2" width="31.00" height="14.4" rx="3"/><text y="3.5">-16.00</text></g><g transform="matrix(0.6205 -0.5752 0.6045 0.4072 173.40 782.52)"><rect x="-15.50" y="-7.2" width="31.00" height="14.4" rx="3"/><text y="3.5">-12.00</text></g><g transform="matrix(0.8188 0.4905 -0.4601 0.6932 675.00 923.47)"><rect x="-15.50" y="-7.2" width="31.00" height="14.4" rx="3"/><text y="3.5">-12.00</text></g><g transform="matrix(0.6157 -0.5970 0.6273 0.4226 213.43 809.48)"><rect x="-15.50" y="-7.2" width="31.00" height="14.4" rx="3"/><text y="3.5">-8.00</text></g><g transform="matrix(0.8048 0.4637 -0.4348 0.6552 704.07 879.66)"><rect x="-15.50" y="-7.2" width="31.00" height="14.4" rx="3"/><text y="3.5">-8.00</text></g><g transform="matrix(0.6102 -0.6200 0.6515 0.4388 254.99 837.47)"><rect x="-15.50" y="-7.2" width="31.00" height="14.4" rx="3"/><text y="3.5">-4.00</text></g><g transform="matrix(0.7910 0.4390 -0.4116 0.6202 731.57 838.23)"><rect x="-15.50" y="-7.2" width="31.00" height="14.4" rx="3"/><text y="3.5">-4.00</text></g><g transform="matrix(0.6037 -0.6444 0.6770 0.4561 298.15 866.55)"><rect x="-15.50" y="-7.2" width="31.00" height="14.4" rx="3"/><text y="3.5">0.00</text></g><g transform="matrix(0.7776 0.4162 -0.3902 0.5880 757.62 798.98)"><rect x="-15.50" y="-7.2" width="31.00" height="14.4" rx="3"/><text y="3.5">0.00</text></g><g transform="matrix(0.5962 -0.6703 0.7041 0.4743 343.03 896.78)"><rect x="-15.50" y="-7.2" width="31.00" height="14.4" rx="3"/><text y="3.5">4.00</text></g><g transform="matrix(0.7645 0.3952 -0.3704 0.5581 782.33 761.74)"><rect x="-15.50" y="-7.2" width="31.00" height="14.4" rx="3"/><text y="3.5">4.00</text></g><g transform="matrix(0.5876 -0.6977 0.7329 0.4937 389.73 928.23)"><rect x="-15.50" y="-7.2" width="31.00" height="14.4" rx="3"/><text y="3.5">8.00</text></g><g transform="matrix(0.7518 0.3757 -0.3521 0.5306 805.80 726.37)"><rect x="-15.50" y="-7.2" width="31.00" height="14.4" rx="3"/><text y="3.5">8.00</text></g><g transform="matrix(0.5778 -0.7269 0.7634 0.5142 438.35 960.98)"><rect x="-15.50" y="-7.2" width="31.00" height="14.4" rx="3"/><text y="3.5">12.00</text></g><g transform="matrix(0.7393 0.3576 -0.3351 0.5050 828.13 692.73)"><rect x="-15.50" y="-7.2" width="31.00" height="14.4" rx="3"/><text y="3.5">12.00</text></g><g transform="matrix(0.5667 -0.7579 0.7959 0.5361 489.01 995.11)"><rect x="-15.50" y="-7.2" width="31.00" height="14.4" rx="3"/><text y="3.5">16.00</text></g><g transform="matrix(0.7272 0.3408 -0.3193 0.4812 849.39 660.69)"><rect x="-15.50" y="-7.2" width="31.00" height="14.4" rx="3"/><text y="3.5">16.00</text></g><g transform="matrix(0.5540 -0.7909 0.8305 0.5595 541.86 1030.71)"><rect x="-15.50" y="-7.2" width="31.00" height="14.4" rx="3"/><text y="3.5">20.00</text></g><g transform="matrix(0.7154 0.3252 -0.3046 0.4590 869.67 630.14)"><rect x="-15.50" y="-7.2" width="31.00" height="14.4" rx="3"/><text y="3.5">20.00</text></g><g transform="matrix(0.7160 0.3216 -0.1628 0.5172 874.45 617.13)"><rect x="-12.80" y="-7.2" width="25.61" height="14.4" rx="3"/><text y="3.5">-1.99</text></g><g transform="matrix(0.6313 -0.5302 0.1872 0.5127 89.36 718.12)"><rect x="-12.80" y="-7.2" width="25.61" height="14.4" rx="3"/><text y="3.5">-1.99</text></g><g transform="matrix(0.7275 0.3218 -0.1675 0.5319 879.82 600.08)"><rect x="-12.80" y="-7.2" width="25.61" height="14.4" rx="3"/><text y="3.5">-1.59</text></g><g transform="matrix(0.6434 -0.5316 0.1930 0.5285 83.18 701.20)"><rect x="-12.80" y="-7.2" width="25.61" height="14.4" rx="3"/><text y="3.5">-1.59</text></g><g transform="matrix(0.7393 0.3219 -0.1723 0.5472 885.34 582.55)"><rect x="-12.80" y="-7.2" width="25.61" height="14.4" rx="3"/><text y="3.5">-1.19</text></g><g transform="matrix(0.6559 -0.5329 0.1990 0.5450 76.81 683.76)"><rect x="-12.80" y="-7.2" width="25.61" height="14.4" rx="3"/><text y="3.5">-1.19</text></g><g transform="matrix(0.7516 0.3218 -0.1773 0.5632 891.02 564.50)"><rect x="-12.80" y="-7.2" width="25.61" height="14.4" rx="3"/><text y="3.5">-0.79</text></g><g transform="matrix(0.6689 -0.5340 0.2053 0.5623 70.24 665.77)"><rect x="-12.80" y="-7.2" width="25.61" height="14.4" rx="3"/><text y="3.5">-0.79</text></g><g transform="matrix(0.7642 0.3216 -0.1826 0.5799 896.87 545.93)"><rect x="-12.80" y="-7.2" width="25.61" height="14.4" rx="3"/><text y="3.5">-0.39</text></g><g transform="matrix(0.6824 -0.5349 0.2119 0.5804 63.47 647.21)"><rect x="-12.80" y="-7.2" width="25.61" height="14.4" rx="3"/><text y="3.5">-0.39</text></g><g transform="matrix(0.7772 0.3212 -0.1881 0.5974 902.89 526.80)"><rect x="-12.80" y="-7.2" width="25.61" height="14.4" rx="3"/><text y="3.5">0.01</text></g><g transform="matrix(0.6965 -0.5356 0.2189 0.5994 56.47 628.04)"><rect x="-12.80" y="-7.2" width="25.61" height="14.4" rx="3"/><text y="3.5">0.01</text></g><g transform="matrix(0.7907 0.3207 -0.1938 0.6157 909.10 507.09)"><rect x="-12.80" y="-7.2" width="25.61" height="14.4" rx="3"/><text y="3.5">0.40</text></g><g transform="matrix(0.7110 -0.5360 0.2262 0.6194 49.23 608.23)"><rect x="-12.80" y="-7.2" width="25.61" height="14.4" rx="3"/><text y="3.5">0.40</text></g><g transform="matrix(0.8047 0.3199 -0.1999 0.6348 915.50 486.78)"><rect x="-12.80" y="-7.2" width="25.61" height="14.4" rx="3"/><text y="3.5">0.80</text></g><g transform="matrix(0.7262 -0.5361 0.2338 0.6404 41.76 587.76)"><rect x="-12.80" y="-7.2" width="25.61" height="14.4" rx="3"/><text y="3.5">0.80</text></g><g transform="matrix(0.8192 0.3190 -0.2062 0.6548 922.09 465.82)"><rect x="-12.80" y="-7.2" width="25.61" height="14.4" rx="3"/><text y="3.5">1.20</text></g><g transform="matrix(0.7421 -0.5360 0.2419 0.6625 34.03 566.59)"><rect x="-12.80" y="-7.2" width="25.61" height="14.4" rx="3"/><text y="3.5">1.20</text></g><g transform="matrix(0.8341 0.3179 -0.2128 0.6758 928.90 444.20)"><rect x="-12.80" y="-7.2" width="25.61" height="14.4" rx="3"/><text y="3.5">1.60</text></g><g transform="matrix(0.7585 -0.5355 0.2504 0.6858 26.03 544.69)"><rect x="-12.80" y="-7.2" width="25.61" height="14.4" rx="3"/><text y="3.5">1.60</text></g><g transform="matrix(0.8497 0.3165 -0.2197 0.6978 935.93 421.89)"><rect x="-12.80" y="-7.2" width="25.61" height="14.4" rx="3"/><text y="3.5">2.00</text></g><g transform="matrix(0.7758 -0.5347 0.2593 0.7103 17.75 522.01)"><rect x="-12.80" y="-7.2" width="25.61" height="14.4" rx="3"/><text y="3.5">2.00</text></g></g></g>
</svg>
</body></html>
